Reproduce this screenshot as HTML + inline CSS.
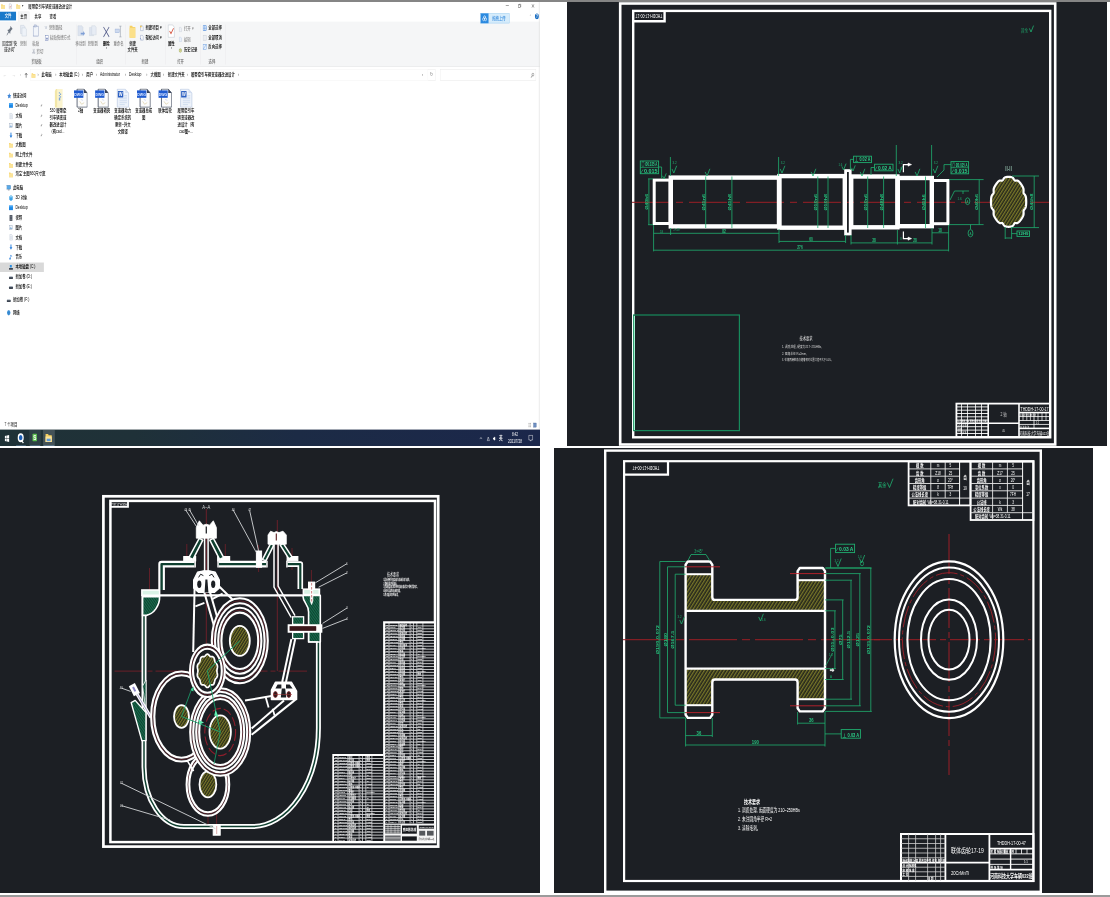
<!DOCTYPE html>
<html lang="zh"><head><meta charset="utf-8"><title>履带牵引车辆变速器改进设计</title>
<style>
html,body{margin:0;padding:0;background:#fff}
body{width:1110px;height:897px;position:relative;overflow:hidden}
#ex{position:absolute;left:0;top:0;width:540px;height:446px;overflow:hidden}
#exs{position:absolute;left:0;top:0.5px;width:1920px;height:1080px;transform-origin:0 0;transform:scale(0.28125,0.4125);font-family:"Liberation Sans","Noto Sans CJK SC",sans-serif}
#exs .t{position:absolute;white-space:nowrap;line-height:1;font-weight:500}
#exs .b{position:absolute}
#cad{position:absolute;left:0;top:0;will-change:transform}
#ex{will-change:transform}
.ln{position:absolute;left:0;width:1110px}
</style></head><body>
<div id="ex"><div id="exs"><div class="b" style="left:0.0px;top:0.0px;width:1920.0px;height:1080.0px;background:#ffffff;"></div>
<svg class="b" style="left:2.7px;top:4.6px" width="16" height="16" viewBox="0 0 16 16"><path d="M1 3h5l1.5 2H15v9H1z" fill="#f7d775"/><path d="M1 6h14v8H1z" fill="#fbe49a"/></svg>
<svg class="b" style="left:30.3px;top:4.6px" width="14" height="16" viewBox="0 0 16 16"><path d="M3 1h7l3 3v11H3z" fill="#fff" stroke="#8a98ad"/><path d="M5 9l2 2 4-5" stroke="#c0392b" fill="none" stroke-width="1.3"/></svg>
<svg class="b" style="left:57.1px;top:4.6px" width="16" height="16" viewBox="0 0 16 16"><path d="M1 3h5l1.5 2H15v9H1z" fill="#f7d775"/><path d="M1 6h14v8H1z" fill="#fbe49a"/></svg>
<div class="t" style="left:81.1px;top:12.6px;transform:translate(-50%,-50%);color:#333;font-size:9px;font-weight:500;">▾</div>
<div class="t" style="left:100.6px;top:11.6px;transform:translate(0,-50%);color:#111;font-size:12px;font-weight:500;">履带牵引车辆变速器改进设计</div>
<div class="t" style="left:1804.1px;top:10.1px;transform:translate(-50%,-50%);color:#000;font-size:11px;font-weight:500;">&#8212;</div>
<svg class="b" style="left:1841.5px;top:5.6px" width="12" height="12" viewBox="0 0 14 14"><rect x="2" y="4" width="8" height="8" fill="none" stroke="#222" stroke-width="1.2"/><path d="M4 4V2h8v8h-2" fill="none" stroke="#222" stroke-width="1.2"/></svg>
<svg class="b" style="left:1889.1px;top:5.6px" width="12" height="12" viewBox="0 0 14 14"><path d="M2 2l10 10M12 2L2 12" stroke="#222" stroke-width="1.3"/></svg>
<div class="b" style="left:0.0px;top:25.5px;width:56.5px;height:21.8px;background:#1979ca;"></div>
<div class="t" style="left:28.8px;top:35.1px;transform:translate(-50%,-50%);color:#fff;font-size:12px;font-weight:500;">文件</div>
<div class="b" style="left:65.1px;top:25.9px;width:39.1px;height:25.2px;background:#f5f6f7;border:1px solid #e4e5e6;border-bottom:none;box-sizing:border-box"></div>
<div class="t" style="left:84.3px;top:35.8px;transform:translate(-50%,-50%);color:#000;font-size:12px;font-weight:500;">主页</div>
<div class="t" style="left:135.1px;top:35.8px;transform:translate(-50%,-50%);color:#000;font-size:12px;font-weight:500;">共享</div>
<div class="t" style="left:188.4px;top:35.8px;transform:translate(-50%,-50%);color:#000;font-size:12px;font-weight:500;">查看</div>
<div class="b" style="left:0.0px;top:50.4px;width:1920.0px;height:108.4px;background:#f5f6f7;border-bottom:1px solid #dadbdc;box-sizing:border-box"></div>
<svg class="b" style="left:17.4px;top:55.5px" width="32" height="32" viewBox="0 0 32 32"><path d="M20 4l8 8-3 1-5 5-1 6-4-4-8 8 0-2 6-8-4-4 6-1 5-5z" fill="#6b7480"/></svg>
<div class="t" style="left:34.1px;top:101.5px;transform:translate(-50%,-50%);color:#3a3a3a;font-size:12px;font-weight:500;">固定到“快</div>
<div class="t" style="left:34.1px;top:117.5px;transform:translate(-50%,-50%);color:#3a3a3a;font-size:12px;font-weight:500;">速访问”</div>
<svg class="b" style="left:66.8px;top:55.5px" width="32" height="32" viewBox="0 0 32 32"><path d="M6 3h12l4 4v16H6z" fill="#e6ebf3" stroke="#b9c3d3"/><path d="M11 9h12l4 4v16H11z" fill="#eef2f8" stroke="#b9c3d3"/></svg>
<div class="t" style="left:82.8px;top:101.5px;transform:translate(-50%,-50%);color:#8c8c8c;font-size:12px;font-weight:500;">复制</div>
<svg class="b" style="left:110.9px;top:55.5px" width="32" height="32" viewBox="0 0 32 32"><rect x="7" y="5" width="18" height="24" fill="#f2f5fa" stroke="#8d9cc0" stroke-width="1.5"/><rect x="12" y="2" width="8" height="5" fill="#c9d2e3" stroke="#8d9cc0"/></svg>
<div class="t" style="left:126.9px;top:101.5px;transform:translate(-50%,-50%);color:#8c8c8c;font-size:12px;font-weight:500;">粘贴</div>
<div class="t" style="left:163.6px;top:65.2px;transform:translate(-50%,-50%);color:#a9b4c4;font-size:9px;font-weight:500;">W</div>
<div class="t" style="left:174.2px;top:65.2px;transform:translate(0,-50%);color:#8c8c8c;font-size:12px;font-weight:500;">复制路径</div>
<svg class="b" style="left:160.1px;top:81.2px" width="14" height="16" viewBox="0 0 16 16"><rect x="3" y="2" width="10" height="13" fill="#fff" stroke="#6c7fb5" stroke-width="1.4"/><rect x="5" y="8" width="6" height="5" fill="#6c7fb5"/></svg>
<div class="t" style="left:177.8px;top:87.7px;transform:translate(0,-50%);color:#8c8c8c;font-size:12px;font-weight:500;">粘贴快捷方式</div>
<svg class="b" style="left:112.5px;top:115.4px" width="14" height="14" viewBox="0 0 16 16"><path d="M5 1l3 9M11 1L8 10" stroke="#8a93a3" stroke-width="1.2"/><circle cx="5" cy="12" r="2" fill="none" stroke="#8a93a3" stroke-width="1.2"/><circle cx="11" cy="12" r="2" fill="none" stroke="#8a93a3" stroke-width="1.2"/></svg>
<div class="t" style="left:130.1px;top:120.9px;transform:translate(0,-50%);color:#8c8c8c;font-size:12px;font-weight:500;">剪切</div>
<div class="t" style="left:130.1px;top:146.1px;transform:translate(-50%,-50%);color:#6d6d6d;font-size:12px;font-weight:500;">剪贴板</div>
<div class="b" style="left:271.6px;top:57.0px;width:1.1px;height:97.0px;background:#e2e3e4;"></div>
<svg class="b" style="left:270.9px;top:56.9px" width="32" height="34" viewBox="0 0 32 34"><path d="M6 3h14l4 4v20H6z" fill="#dde4ef" stroke="#c3ccda"/><path d="M16 20h9v-4l6 6-6 6v-4h-9z" fill="#7f9fd6"/></svg>
<div class="t" style="left:286.9px;top:101.5px;transform:translate(-50%,-50%);color:#8c8c8c;font-size:12px;font-weight:500;">移动到</div>
<svg class="b" style="left:313.6px;top:56.9px" width="32" height="34" viewBox="0 0 32 34"><path d="M4 7h12l3 3v17H4z" fill="#dde4ef" stroke="#c3ccda"/><path d="M12 3h12l4 4v18H12z" fill="#e7ecf4" stroke="#c3ccda"/></svg>
<div class="t" style="left:329.6px;top:101.5px;transform:translate(-50%,-50%);color:#8c8c8c;font-size:12px;font-weight:500;">复制到</div>
<svg class="b" style="left:363.0px;top:58.7px" width="30" height="32" viewBox="0 0 30 32"><path d="M5 4l20 24M25 4L5 28" stroke="#565f8c" stroke-width="2.6" fill="none"/></svg>
<div class="t" style="left:378.0px;top:102.0px;transform:translate(-50%,-50%);color:#000;font-size:12px;font-weight:bold;">删除</div>
<div class="t" style="left:378.0px;top:114.6px;transform:translate(-50%,-50%);color:#444;font-size:8px;font-weight:500;">▾</div>
<svg class="b" style="left:406.3px;top:57.9px" width="30" height="32" viewBox="0 0 30 32"><rect x="3" y="10" width="16" height="9" fill="#cdd9ee" stroke="#8ea6d4"/><path d="M22 3v26M18 3h8M18 29h8" stroke="#8a93a3" stroke-width="1.5"/></svg>
<div class="t" style="left:421.3px;top:101.5px;transform:translate(-50%,-50%);color:#8c8c8c;font-size:12px;font-weight:500;">重命名</div>
<div class="t" style="left:354.1px;top:146.1px;transform:translate(-50%,-50%);color:#6d6d6d;font-size:12px;font-weight:500;">组织</div>
<div class="b" style="left:446.6px;top:57.0px;width:1.1px;height:97.0px;background:#e2e3e4;"></div>
<svg class="b" style="left:457.8px;top:56.9px" width="26" height="34" viewBox="0 0 26 34"><path d="M3 3h9l2 3h9v26H3z" fill="#f5cf60"/><path d="M3 8h20v24H3z" fill="#fbe08a"/></svg>
<div class="t" style="left:471.5px;top:101.5px;transform:translate(-50%,-50%);color:#000;font-size:12px;font-weight:500;">新建</div>
<div class="t" style="left:471.5px;top:118.0px;transform:translate(-50%,-50%);color:#000;font-size:12px;font-weight:500;">文件夹</div>
<svg class="b" style="left:496.2px;top:58.4px" width="16" height="16" viewBox="0 0 16 16"><path d="M4 2h6l3 3v9H4z" fill="#fff" stroke="#7d8db5" stroke-width="1.2"/><circle cx="5" cy="4" r="2.5" fill="#f0c23a"/></svg>
<div class="t" style="left:517.0px;top:64.9px;transform:translate(0,-50%);color:#000;font-size:12px;font-weight:500;">新建项目 ▾</div>
<svg class="b" style="left:496.2px;top:80.5px" width="16" height="16" viewBox="0 0 16 16"><path d="M4 2h6l3 3v9H4z" fill="#fff" stroke="#7d8db5" stroke-width="1.2"/><path d="M2 9l4 3" stroke="#3d5fb0" stroke-width="1.5"/></svg>
<div class="t" style="left:517.0px;top:87.0px;transform:translate(0,-50%);color:#000;font-size:12px;font-weight:500;">轻松访问 ▾</div>
<div class="t" style="left:515.2px;top:146.1px;transform:translate(-50%,-50%);color:#6d6d6d;font-size:12px;font-weight:500;">新建</div>
<div class="b" style="left:588.8px;top:57.0px;width:1.1px;height:97.0px;background:#e2e3e4;"></div>
<svg class="b" style="left:595.1px;top:56.0px" width="28" height="34" viewBox="0 0 28 34"><path d="M3 2h16l6 6v24H3z" fill="#fff" stroke="#b9c0cc" stroke-width="1.4"/><path d="M8 17l5 6 9-13" stroke="#d14a34" stroke-width="2.6" fill="none"/></svg>
<div class="t" style="left:609.1px;top:102.0px;transform:translate(-50%,-50%);color:#000;font-size:12px;font-weight:bold;">属性</div>
<div class="t" style="left:609.1px;top:114.6px;transform:translate(-50%,-50%);color:#444;font-size:8px;font-weight:500;">▾</div>
<svg class="b" style="left:635.1px;top:60.8px" width="14" height="16" viewBox="0 0 16 16"><path d="M3 2h6l3 3v9H3z" fill="#eef1f6" stroke="#b5bdcc"/></svg>
<div class="t" style="left:654.2px;top:67.3px;transform:translate(0,-50%);color:#8c8c8c;font-size:12px;font-weight:500;">打开 ▾</div>
<svg class="b" style="left:635.1px;top:85.1px" width="14" height="16" viewBox="0 0 16 16"><path d="M3 2h6l3 3v9H3z" fill="#eaf0fa" stroke="#a9bbdc"/></svg>
<div class="t" style="left:654.2px;top:91.6px;transform:translate(0,-50%);color:#8c8c8c;font-size:12px;font-weight:500;">编辑</div>
<svg class="b" style="left:635.1px;top:110.8px" width="14" height="16" viewBox="0 0 16 16"><circle cx="7" cy="9" r="5" fill="#f3e9a6" stroke="#6f8a3a" stroke-width="1.4"/><path d="M7 6v3l2 1" stroke="#44622a" fill="none"/></svg>
<div class="t" style="left:654.2px;top:117.3px;transform:translate(0,-50%);color:#000;font-size:12px;font-weight:500;">历史记录</div>
<div class="t" style="left:642.1px;top:146.1px;transform:translate(-50%,-50%);color:#6d6d6d;font-size:12px;font-weight:500;">打开</div>
<div class="b" style="left:711.8px;top:57.0px;width:1.1px;height:97.0px;background:#e2e3e4;"></div>
<svg class="b" style="left:719.5px;top:58.4px" width="16" height="16" viewBox="0 0 16 16"><rect x="2" y="2" width="12" height="12" fill="#dbe9fb" stroke="#3d7fd6" stroke-width="1.3"/><path d="M2 8h12M8 2v12" stroke="#3d7fd6"/></svg>
<div class="t" style="left:740.6px;top:64.9px;transform:translate(0,-50%);color:#000;font-size:12px;font-weight:500;">全部选择</div>
<svg class="b" style="left:719.5px;top:81.2px" width="16" height="16" viewBox="0 0 16 16"><rect x="2" y="2" width="12" height="12" fill="#eceef2" stroke="#c5cad3" stroke-width="1.3"/></svg>
<div class="t" style="left:740.6px;top:87.7px;transform:translate(0,-50%);color:#000;font-size:12px;font-weight:500;">全部取消</div>
<svg class="b" style="left:719.5px;top:102.8px" width="16" height="16" viewBox="0 0 16 16"><rect x="2" y="2" width="12" height="12" fill="#e6effb" stroke="#6f9fe0" stroke-width="1.3"/><path d="M2 14L14 2" stroke="#3d7fd6"/></svg>
<div class="t" style="left:740.6px;top:109.3px;transform:translate(0,-50%);color:#000;font-size:12px;font-weight:500;">反向选择</div>
<div class="t" style="left:753.4px;top:146.1px;transform:translate(-50%,-50%);color:#6d6d6d;font-size:12px;font-weight:500;">选择</div>
<div class="b" style="left:800.0px;top:57.0px;width:1.1px;height:97.0px;background:#e2e3e4;"></div>
<div class="b" style="left:1709.2px;top:30.3px;width:102.4px;height:24.2px;background:#d6ecfb;border:1px solid #8cc4ee;box-sizing:border-box"></div>
<div class="b" style="left:1709.2px;top:30.3px;width:28.1px;height:24.2px;background:#2b8ae0;"></div>
<svg class="b" style="left:1712.0px;top:33.4px" width="22" height="18" viewBox="0 0 16 16"><circle cx="5" cy="10" r="3.2" fill="none" stroke="#fff" stroke-width="1.6"/><circle cx="11" cy="10" r="3.2" fill="none" stroke="#fff" stroke-width="1.6"/><circle cx="8" cy="5.5" r="3" fill="none" stroke="#fff" stroke-width="1.6"/></svg>
<div class="t" style="left:1774.2px;top:40.9px;transform:translate(-50%,-50%);color:#3b8ede;font-size:12px;font-weight:500;">拖拽上传</div>
<div class="t" style="left:1886.2px;top:35.1px;transform:translate(-50%,-50%);color:#aaa;font-size:10px;font-weight:500;">^</div>
<svg class="b" style="left:1900.6px;top:29.3px" width="16" height="16" viewBox="0 0 16 16"><circle cx="8" cy="8" r="7" fill="#1c6fc2"/><text x="8" y="12" font-size="11" font-weight="bold" fill="#fff" text-anchor="middle" font-family="Liberation Sans,sans-serif">?</text></svg>
<div class="t" style="left:17.4px;top:178.1px;transform:translate(-50%,-50%);color:#c9c9c9;font-size:15px;font-weight:500;">←</div>
<div class="t" style="left:49.1px;top:178.1px;transform:translate(-50%,-50%);color:#c9c9c9;font-size:15px;font-weight:500;">→</div>
<div class="t" style="left:72.2px;top:178.6px;transform:translate(-50%,-50%);color:#bdbdbd;font-size:8px;font-weight:500;">▾</div>
<svg class="b" style="left:86.2px;top:171.6px" width="14" height="16" viewBox="0 0 14 16"><path d="M7 14V3M2.5 7.500L7 3l4.500 4.500" stroke="#555" stroke-width="1.8" fill="none"/></svg>
<div class="b" style="left:107.7px;top:166.1px;width:1414.0px;height:26.7px;background:#fff;border:1px solid #f0f0f0;box-sizing:border-box"></div>
<svg class="b" style="left:110.8px;top:171.6px" width="16" height="16" viewBox="0 0 16 16"><path d="M1 3h5l1.5 2H15v9H1z" fill="#f7d775"/><path d="M1 6h14v8H1z" fill="#fbe49a"/></svg>
<div class="t" style="left:147.9px;top:178.1px;transform:translate(0,-50%);color:#000;font-size:12px;font-weight:500;">此电脑</div>
<div class="t" style="left:210.8px;top:178.1px;transform:translate(0,-50%);color:#000;font-size:12px;font-weight:500;">本地磁盘 (C:)</div>
<div class="t" style="left:306.8px;top:178.1px;transform:translate(0,-50%);color:#000;font-size:12px;font-weight:500;">用户</div>
<div class="t" style="left:355.6px;top:178.1px;transform:translate(0,-50%);color:#000;font-size:12px;font-weight:500;">Administrator</div>
<div class="t" style="left:458.7px;top:178.1px;transform:translate(0,-50%);color:#000;font-size:12px;font-weight:500;">Desktop</div>
<div class="t" style="left:535.5px;top:178.1px;transform:translate(0,-50%);color:#000;font-size:12px;font-weight:500;">大截图</div>
<div class="t" style="left:596.6px;top:178.1px;transform:translate(0,-50%);color:#000;font-size:12px;font-weight:500;">新建文件夹</div>
<div class="t" style="left:679.1px;top:178.1px;transform:translate(0,-50%);color:#000;font-size:12px;font-weight:500;">履带牵引车辆变速器改进设计</div>
<div class="t" style="left:135.1px;top:178.1px;transform:translate(-50%,-50%);color:#666;font-size:12px;font-weight:500;">›</div>
<div class="t" style="left:198.4px;top:178.1px;transform:translate(-50%,-50%);color:#666;font-size:12px;font-weight:500;">›</div>
<div class="t" style="left:292.6px;top:178.1px;transform:translate(-50%,-50%);color:#666;font-size:12px;font-weight:500;">›</div>
<div class="t" style="left:342.4px;top:178.1px;transform:translate(-50%,-50%);color:#666;font-size:12px;font-weight:500;">›</div>
<div class="t" style="left:446.6px;top:178.1px;transform:translate(-50%,-50%);color:#666;font-size:12px;font-weight:500;">›</div>
<div class="t" style="left:522.0px;top:178.1px;transform:translate(-50%,-50%);color:#666;font-size:12px;font-weight:500;">›</div>
<div class="t" style="left:581.7px;top:178.1px;transform:translate(-50%,-50%);color:#666;font-size:12px;font-weight:500;">›</div>
<div class="t" style="left:665.6px;top:178.1px;transform:translate(-50%,-50%);color:#666;font-size:12px;font-weight:500;">›</div>
<div class="t" style="left:848.4px;top:178.1px;transform:translate(-50%,-50%);color:#666;font-size:12px;font-weight:500;">›</div>
<div class="t" style="left:1501.5px;top:178.6px;transform:translate(-50%,-50%);color:#777;font-size:8px;font-weight:500;">▾</div>
<div class="b" style="left:1521.8px;top:166.1px;width:26.7px;height:26.7px;background:#fff;border:1px solid #e3e3e3;border-left:none;box-sizing:border-box"></div>
<div class="t" style="left:1535.3px;top:178.1px;transform:translate(-50%,-50%);color:#666;font-size:13px;font-weight:500;">↻</div>
<div class="b" style="left:1565.5px;top:166.1px;width:340.3px;height:26.7px;background:#fff;border:1px solid #e3e3e3;box-sizing:border-box"></div>
<svg class="b" style="left:1885.6px;top:172.6px" width="14" height="14" viewBox="0 0 14 14"><circle cx="9" cy="5.5" r="3.5" fill="none" stroke="#555" stroke-width="1.3"/><path d="M6.5 8L2 13" stroke="#555" stroke-width="1.6"/></svg>
<svg class="b" style="left:25.4px;top:221.8px" width="16" height="16" viewBox="0 0 16 16"><path d="M8 1l2.2 4.6 5 .6-3.7 3.4 1 5L8 12.2 3.5 14.6l1-5L.8 6.2l5-.6z" fill="#3f86d8"/></svg>
<div class="t" style="left:46.2px;top:228.3px;transform:translate(0,-50%);color:#000;font-size:12px;font-weight:500;">快速访问</div>
<svg class="b" style="left:31.1px;top:246.3px" width="16" height="16" viewBox="0 0 16 16"><rect x="1" y="2" width="14" height="11" fill="#1e88e5"/><rect x="1" y="2" width="14" height="4" fill="#42a5f5"/></svg>
<div class="t" style="left:54.8px;top:252.8px;transform:translate(0,-50%);color:#000;font-size:12px;font-weight:500;">Desktop</div>
<svg class="b" style="left:141.8px;top:248.3px" width="10" height="12" viewBox="0 0 11 12"><path d="M7 1l3 3-1.5.5-2 2-.4 2.4-1.6-1.6L1 11l3-3.6-1.6-1.6 2.4-.4 2-2z" fill="#8a8a8a"/></svg>
<svg class="b" style="left:31.1px;top:270.8px" width="16" height="16" viewBox="0 0 16 16"><path d="M4 1h6l3 3v11H4z" fill="#f4f6f9" stroke="#a7b4c8"/><path d="M6 6h5M6 8.5h5M6 11h5" stroke="#9fb3d1" stroke-width=".8"/></svg>
<div class="t" style="left:54.8px;top:277.3px;transform:translate(0,-50%);color:#000;font-size:12px;font-weight:500;">文档</div>
<svg class="b" style="left:141.8px;top:272.8px" width="10" height="12" viewBox="0 0 11 12"><path d="M7 1l3 3-1.5.5-2 2-.4 2.4-1.6-1.6L1 11l3-3.6-1.6-1.6 2.4-.4 2-2z" fill="#8a8a8a"/></svg>
<svg class="b" style="left:31.1px;top:294.3px" width="16" height="16" viewBox="0 0 16 16"><rect x="1.5" y="3" width="13" height="10" fill="#eef3f8" stroke="#8d9db3"/><path d="M3 11l3-4 2.5 3 2-2 2.5 3z" fill="#6fa0cf"/></svg>
<div class="t" style="left:54.8px;top:300.8px;transform:translate(0,-50%);color:#000;font-size:12px;font-weight:500;">图片</div>
<svg class="b" style="left:141.8px;top:296.3px" width="10" height="12" viewBox="0 0 11 12"><path d="M7 1l3 3-1.5.5-2 2-.4 2.4-1.6-1.6L1 11l3-3.6-1.6-1.6 2.4-.4 2-2z" fill="#8a8a8a"/></svg>
<svg class="b" style="left:31.1px;top:318.1px" width="16" height="16" viewBox="0 0 16 16"><path d="M6.3 1h3.4v7H13l-5 6-5-6h3.3z" fill="#2a7fdb"/></svg>
<div class="t" style="left:54.8px;top:324.6px;transform:translate(0,-50%);color:#000;font-size:12px;font-weight:500;">下载</div>
<svg class="b" style="left:141.8px;top:320.1px" width="10" height="12" viewBox="0 0 11 12"><path d="M7 1l3 3-1.5.5-2 2-.4 2.4-1.6-1.6L1 11l3-3.6-1.6-1.6 2.4-.4 2-2z" fill="#8a8a8a"/></svg>
<svg class="b" style="left:31.1px;top:341.3px" width="16" height="16" viewBox="0 0 16 16"><path d="M1 3h5l1.5 2H15v9H1z" fill="#f7d775"/><path d="M1 6h14v8H1z" fill="#fbe49a"/></svg>
<div class="t" style="left:54.8px;top:347.8px;transform:translate(0,-50%);color:#000;font-size:12px;font-weight:500;">大截图</div>
<svg class="b" style="left:31.1px;top:365.1px" width="16" height="16" viewBox="0 0 16 16"><path d="M1 3h5l1.5 2H15v9H1z" fill="#f7d775"/><path d="M1 6h14v8H1z" fill="#fbe49a"/></svg>
<div class="t" style="left:54.8px;top:371.6px;transform:translate(0,-50%);color:#000;font-size:12px;font-weight:500;">网上传文件</div>
<svg class="b" style="left:31.1px;top:389.6px" width="16" height="16" viewBox="0 0 16 16"><path d="M1 3h5l1.5 2H15v9H1z" fill="#f7d775"/><path d="M1 6h14v8H1z" fill="#fbe49a"/></svg>
<div class="t" style="left:54.8px;top:396.1px;transform:translate(0,-50%);color:#000;font-size:12px;font-weight:500;">新建文件夹</div>
<svg class="b" style="left:31.1px;top:412.6px" width="16" height="16" viewBox="0 0 16 16"><path d="M1 3h5l1.5 2H15v9H1z" fill="#f7d775"/><path d="M1 6h14v8H1z" fill="#fbe49a"/></svg>
<div class="t" style="left:54.8px;top:419.1px;transform:translate(0,-50%);color:#000;font-size:12px;font-weight:500;">淘宝’主图660尺寸宽</div>
<svg class="b" style="left:22.6px;top:445.1px" width="16" height="16" viewBox="0 0 16 16"><rect x="1" y="2" width="14" height="9" fill="#59a9e8" stroke="#3d6fa3"/><rect x="5" y="12" width="6" height="2" fill="#7a8797"/></svg>
<div class="t" style="left:46.2px;top:451.6px;transform:translate(0,-50%);color:#000;font-size:12px;font-weight:500;">此电脑</div>
<svg class="b" style="left:31.1px;top:469.8px" width="16" height="16" viewBox="0 0 16 16"><path d="M8 1l6 3v8l-6 3-6-3V4z" fill="#3ea2e6"/><path d="M8 1l6 3-6 3-6-3z" fill="#8fd0f5"/></svg>
<div class="t" style="left:54.8px;top:476.3px;transform:translate(0,-50%);color:#000;font-size:12px;font-weight:500;">3D 对象</div>
<svg class="b" style="left:31.1px;top:493.8px" width="16" height="16" viewBox="0 0 16 16"><rect x="1" y="2" width="14" height="11" fill="#1e88e5"/><rect x="1" y="2" width="14" height="4" fill="#42a5f5"/></svg>
<div class="t" style="left:54.8px;top:500.3px;transform:translate(0,-50%);color:#000;font-size:12px;font-weight:500;">Desktop</div>
<svg class="b" style="left:31.1px;top:517.6px" width="16" height="16" viewBox="0 0 16 16"><rect x="3" y="1" width="10" height="14" fill="#3c4450"/><path d="M3 4h10M3 8h10M3 12h10" stroke="#c9d1db" stroke-width="1"/></svg>
<div class="t" style="left:54.8px;top:524.1px;transform:translate(0,-50%);color:#000;font-size:12px;font-weight:500;">视频</div>
<svg class="b" style="left:31.1px;top:541.1px" width="16" height="16" viewBox="0 0 16 16"><rect x="1.5" y="3" width="13" height="10" fill="#eef3f8" stroke="#8d9db3"/><path d="M3 11l3-4 2.5 3 2-2 2.5 3z" fill="#6fa0cf"/></svg>
<div class="t" style="left:54.8px;top:547.6px;transform:translate(0,-50%);color:#000;font-size:12px;font-weight:500;">图片</div>
<svg class="b" style="left:31.1px;top:565.3px" width="16" height="16" viewBox="0 0 16 16"><path d="M4 1h6l3 3v11H4z" fill="#f4f6f9" stroke="#a7b4c8"/><path d="M6 6h5M6 8.5h5M6 11h5" stroke="#9fb3d1" stroke-width=".8"/></svg>
<div class="t" style="left:54.8px;top:571.8px;transform:translate(0,-50%);color:#000;font-size:12px;font-weight:500;">文档</div>
<svg class="b" style="left:31.1px;top:589.3px" width="16" height="16" viewBox="0 0 16 16"><path d="M6.3 1h3.4v7H13l-5 6-5-6h3.3z" fill="#2a7fdb"/></svg>
<div class="t" style="left:54.8px;top:595.8px;transform:translate(0,-50%);color:#000;font-size:12px;font-weight:500;">下载</div>
<svg class="b" style="left:31.1px;top:612.8px" width="16" height="16" viewBox="0 0 16 16"><path d="M6 2l6 3v2L7.3 5v6.5a2.6 2.6 0 1 1-1.3-2.2z" fill="#2a7fdb"/></svg>
<div class="t" style="left:54.8px;top:619.3px;transform:translate(0,-50%);color:#000;font-size:12px;font-weight:500;">音乐</div>
<div class="b" style="left:0.0px;top:634.4px;width:155.7px;height:22.8px;background:#d9d9d9;"></div>
<svg class="b" style="left:31.1px;top:637.6px" width="16" height="16" viewBox="0 0 16 16"><rect x="1" y="9" width="14" height="4.5" rx="1" fill="#3b4350"/><rect x="4" y="2" width="7" height="6" fill="#2a8de0"/></svg>
<div class="t" style="left:54.8px;top:644.1px;transform:translate(0,-50%);color:#000;font-size:12px;font-weight:500;">本地磁盘 (C:)</div>
<svg class="b" style="left:31.1px;top:661.3px" width="16" height="16" viewBox="0 0 16 16"><rect x="1" y="8" width="14" height="5" rx="1" fill="#3b4350"/><rect x="2" y="6.5" width="12" height="2" fill="#9aa5b3"/></svg>
<div class="t" style="left:54.8px;top:667.8px;transform:translate(0,-50%);color:#000;font-size:12px;font-weight:500;">新加卷 (D:)</div>
<svg class="b" style="left:31.1px;top:685.3px" width="16" height="16" viewBox="0 0 16 16"><rect x="1" y="8" width="14" height="5" rx="1" fill="#3b4350"/><rect x="2" y="6.5" width="12" height="2" fill="#9aa5b3"/></svg>
<div class="t" style="left:54.8px;top:691.8px;transform:translate(0,-50%);color:#000;font-size:12px;font-weight:500;">新加卷 (E:)</div>
<svg class="b" style="left:22.6px;top:716.8px" width="16" height="16" viewBox="0 0 16 16"><rect x="1" y="8" width="14" height="5" rx="1" fill="#3b4350"/><rect x="2" y="6.5" width="12" height="2" fill="#9aa5b3"/></svg>
<div class="t" style="left:46.2px;top:723.3px;transform:translate(0,-50%);color:#000;font-size:12px;font-weight:500;">新加卷 (F:)</div>
<svg class="b" style="left:22.6px;top:748.4px" width="16" height="16" viewBox="0 0 16 16"><circle cx="8" cy="8" r="6" fill="#4aa3e8"/><path d="M2 8h12M8 2c-3 3-3 9 0 12M8 2c3 3 3 9 0 12" stroke="#1d5fa8" fill="none" stroke-width=".9"/></svg>
<div class="t" style="left:46.2px;top:754.9px;transform:translate(0,-50%);color:#000;font-size:12px;font-weight:500;">网络</div>
<svg preserveAspectRatio="none" class="b" style="left:185.2px;top:212.1px" width="48.4" height="47" viewBox="0 0 48 60"><path d="M14 2h22v58H10V8z" fill="#f3e7a8"/><path d="M18 2h18v58H18z" fill="#fbf4cf"/><path d="M24 12h4v4h-4zM28 16h4v4h-4zM24 20h4v4h-4zM28 24h4v4h-4zM24 28h5v9h-5z" fill="#7fa7d9"/></svg>
<div class="t" style="left:206.2px;top:266.4px;transform:translate(-50%,-50%);color:#000;font-size:12px;font-weight:500;">530 履带牵</div>
<div class="t" style="left:206.2px;top:282.9px;transform:translate(-50%,-50%);color:#000;font-size:12px;font-weight:500;">引车辆变速</div>
<div class="t" style="left:206.2px;top:299.3px;transform:translate(-50%,-50%);color:#000;font-size:12px;font-weight:500;">器改进设计</div>
<div class="t" style="left:206.2px;top:315.8px;transform:translate(-50%,-50%);color:#000;font-size:12px;font-weight:500;">(有cad...</div>
<svg preserveAspectRatio="none" class="b" style="left:262.7px;top:212.1px" width="48.4" height="47" viewBox="0 0 48 60"><path d="M11 2h24l12 12v44H11z" fill="#fcfcfc" stroke="#2f3a4f" stroke-width="2.4"/><path d="M35 2v12h12z" fill="#39445c"/><rect x="0" y="6" width="33" height="23" fill="#1f5bd0"/><text x="16.500" y="22.500" font-size="12.500" font-weight="bold" fill="#dfe9ff" text-anchor="middle" font-family="Liberation Sans,sans-serif">DWG</text><path d="M20 40l7 9 9-5" stroke="#d8c89a" fill="none" stroke-width="2"/><path d="M24 34l8 3" stroke="#b9c6e8" stroke-width="2"/></svg>
<div class="t" style="left:286.6px;top:266.4px;transform:translate(-50%,-50%);color:#000;font-size:12px;font-weight:500;">2轴</div>
<svg preserveAspectRatio="none" class="b" style="left:337.8px;top:212.1px" width="48.4" height="47" viewBox="0 0 48 60"><path d="M11 2h24l12 12v44H11z" fill="#fcfcfc" stroke="#2f3a4f" stroke-width="2.4"/><path d="M35 2v12h12z" fill="#39445c"/><rect x="0" y="6" width="33" height="23" fill="#1f5bd0"/><text x="16.500" y="22.500" font-size="12.500" font-weight="bold" fill="#dfe9ff" text-anchor="middle" font-family="Liberation Sans,sans-serif">DWG</text><path d="M20 40l7 9 9-5" stroke="#d8c89a" fill="none" stroke-width="2"/><path d="M24 34l8 3" stroke="#b9c6e8" stroke-width="2"/></svg>
<div class="t" style="left:361.6px;top:266.4px;transform:translate(-50%,-50%);color:#000;font-size:12px;font-weight:500;">变速器箱壳</div>
<svg preserveAspectRatio="none" class="b" style="left:412.8px;top:212.1px" width="48.4" height="47" viewBox="0 0 48 60"><path d="M4 2h28l12 12v44H4z" fill="#eef3fb" stroke="#b3c4e0" stroke-width="2"/><path d="M32 2v12h12z" fill="#d5e0f2"/><path d="M12 32h26M12 38h26M12 44h26M12 50h18M28 22h10M28 27h10" stroke="#bccfe9" stroke-width="2"/><rect x="6" y="8" width="19" height="20" fill="#2b5fc1"/><text x="15.500" y="23" font-size="14" font-weight="bold" fill="#fff" text-anchor="middle" font-family="Liberation Sans,sans-serif">W</text></svg>
<div class="t" style="left:436.6px;top:266.4px;transform:translate(-50%,-50%);color:#000;font-size:12px;font-weight:500;">变速器动力</div>
<div class="t" style="left:436.6px;top:282.9px;transform:translate(-50%,-50%);color:#000;font-size:12px;font-weight:500;">确定系统的</div>
<div class="t" style="left:436.6px;top:299.3px;transform:translate(-50%,-50%);color:#000;font-size:12px;font-weight:500;">更新--外文</div>
<div class="t" style="left:436.6px;top:315.8px;transform:translate(-50%,-50%);color:#000;font-size:12px;font-weight:500;">文翻译</div>
<svg preserveAspectRatio="none" class="b" style="left:487.4px;top:212.1px" width="48.4" height="47" viewBox="0 0 48 60"><path d="M11 2h24l12 12v44H11z" fill="#fcfcfc" stroke="#2f3a4f" stroke-width="2.4"/><path d="M35 2v12h12z" fill="#39445c"/><rect x="0" y="6" width="33" height="23" fill="#1f5bd0"/><text x="16.500" y="22.500" font-size="12.500" font-weight="bold" fill="#dfe9ff" text-anchor="middle" font-family="Liberation Sans,sans-serif">DWG</text><path d="M20 40l7 9 9-5" stroke="#d8c89a" fill="none" stroke-width="2"/><path d="M24 34l8 3" stroke="#b9c6e8" stroke-width="2"/></svg>
<div class="t" style="left:511.3px;top:266.4px;transform:translate(-50%,-50%);color:#000;font-size:12px;font-weight:500;">变速器总成</div>
<div class="t" style="left:511.3px;top:282.9px;transform:translate(-50%,-50%);color:#000;font-size:12px;font-weight:500;">图</div>
<svg preserveAspectRatio="none" class="b" style="left:562.8px;top:212.1px" width="48.4" height="47" viewBox="0 0 48 60"><path d="M11 2h24l12 12v44H11z" fill="#fcfcfc" stroke="#2f3a4f" stroke-width="2.4"/><path d="M35 2v12h12z" fill="#39445c"/><rect x="0" y="6" width="33" height="23" fill="#1f5bd0"/><text x="16.500" y="22.500" font-size="12.500" font-weight="bold" fill="#dfe9ff" text-anchor="middle" font-family="Liberation Sans,sans-serif">DWG</text><path d="M20 40l7 9 9-5" stroke="#d8c89a" fill="none" stroke-width="2"/><path d="M24 34l8 3" stroke="#b9c6e8" stroke-width="2"/></svg>
<div class="t" style="left:586.7px;top:266.4px;transform:translate(-50%,-50%);color:#000;font-size:12px;font-weight:500;">联体齿轮</div>
<svg preserveAspectRatio="none" class="b" style="left:637.5px;top:212.1px" width="48.4" height="47" viewBox="0 0 48 60"><path d="M4 2h28l12 12v44H4z" fill="#eef3fb" stroke="#b3c4e0" stroke-width="2"/><path d="M32 2v12h12z" fill="#d5e0f2"/><path d="M12 32h26M12 38h26M12 44h26M12 50h18M28 22h10M28 27h10" stroke="#bccfe9" stroke-width="2"/><rect x="6" y="8" width="19" height="20" fill="#2b5fc1"/><text x="15.500" y="23" font-size="14" font-weight="bold" fill="#fff" text-anchor="middle" font-family="Liberation Sans,sans-serif">W</text></svg>
<div class="t" style="left:661.3px;top:266.4px;transform:translate(-50%,-50%);color:#000;font-size:12px;font-weight:500;">履带牵引车</div>
<div class="t" style="left:661.3px;top:282.9px;transform:translate(-50%,-50%);color:#000;font-size:12px;font-weight:500;">辆变速器改</div>
<div class="t" style="left:661.3px;top:299.3px;transform:translate(-50%,-50%);color:#000;font-size:12px;font-weight:500;">进设计（有</div>
<div class="t" style="left:661.3px;top:315.8px;transform:translate(-50%,-50%);color:#000;font-size:12px;font-weight:500;">cad图+...</div>
<div class="b" style="left:1916.4px;top:0.0px;width:1.8px;height:1039.3px;background:#dadada;"></div>
<div class="t" style="left:15.6px;top:1026.4px;transform:translate(0,-50%);color:#333;font-size:12px;font-weight:500;">7 个项目</div>
<svg class="b" style="left:1876.0px;top:1020.9px" width="14" height="14" viewBox="0 0 14 14"><path d="M2 3h2M6 3h6M2 7h2M6 7h6M2 11h2M6 11h6" stroke="#666" stroke-width="1.4"/></svg>
<svg class="b" style="left:1895.2px;top:1020.9px" width="14" height="14" viewBox="0 0 14 14"><rect x="2" y="2" width="10" height="10" fill="#6f8fc0" stroke="#3f5f97"/></svg>
<div class="b" style="left:0.0px;top:1039.3px;width:1920.0px;height:40.7px;background:linear-gradient(90deg,#1f3237 0%,#1f3138 25%,#1c2b45 55%,#1b274b 100%);"></div>
<svg class="b" style="left:15.9px;top:1051.1px" width="18" height="18" viewBox="0 0 16 16"><path d="M1 3l6-1v6H1zM8 2l7-1v7H8zM1 9h6v6l-6-1zM8 9h7v7l-7-1z" fill="#fff"/></svg>
<svg class="b" style="left:61.2px;top:1046.6px" width="27" height="27" viewBox="0 0 30 30"><circle cx="14" cy="13" r="12" fill="#fff"/><circle cx="14" cy="13" r="7" fill="#1d5fb4"/><path d="M17 17l10 10-6 1z" fill="#fff"/></svg>
<div class="b" style="left:103.8px;top:1040.0px;width:41.2px;height:40.0px;background:rgba(255,255,255,.07);"></div>
<svg class="b" style="left:113.2px;top:1046.7px" width="21" height="23" viewBox="0 0 24 26"><rect x="3" y="2" width="18" height="21" rx="2" fill="#5cc04f"/><text x="12" y="20" font-size="19" font-weight="bold" fill="#fff" text-anchor="middle" font-family="Liberation Sans,sans-serif">S</text></svg>
<div class="b" style="left:152.5px;top:1040.0px;width:42.7px;height:40.0px;background:rgba(255,255,255,.16);"></div>
<svg class="b" style="left:159.8px;top:1046.7px" width="26" height="24" viewBox="0 0 26 24"><path d="M2 3h9l2 3h11v16H2z" fill="#f5cf60"/><path d="M2 9h22v13H2z" fill="#fbe59a"/><rect x="6" y="14" width="14" height="6" fill="#5d97d8"/></svg>
<div class="b" style="left:106.7px;top:1078.1px;width:35.6px;height:1.9px;background:#86b7ea;"></div>
<div class="b" style="left:154.7px;top:1078.1px;width:38.8px;height:1.9px;background:#86b7ea;"></div>
<div class="b" style="left:56.9px;top:1078.1px;width:35.6px;height:1.9px;background:#86b7ea;"></div>
<svg class="b" style="left:1704.2px;top:1054.1px" width="12" height="12" viewBox="0 0 12 12"><path d="M2 8l4-4 4 4" stroke="#fff" stroke-width="1.3" fill="none"/></svg>
<svg class="b" style="left:1729.9px;top:1053.6px" width="14" height="14" viewBox="0 0 14 14"><path d="M2 12l4-9 4 9z" fill="none" stroke="#fff" stroke-width="1.3"/></svg>
<svg class="b" style="left:1751.2px;top:1053.6px" width="14" height="14" viewBox="0 0 14 14"><path d="M2 5h3l4-3v10l-4-3H2z" fill="#fff"/><path d="M11 4c1.500 2 1.500 4 0 6" stroke="#fff" fill="none"/></svg>
<div class="t" style="left:1780.6px;top:1058.6px;transform:translate(-50%,-50%);color:#fff;font-size:13px;font-weight:500;">英</div>
<div class="t" style="left:1831.1px;top:1049.9px;transform:translate(-50%,-50%);color:#fff;font-size:11px;font-weight:500;">8:42</div>
<div class="t" style="left:1831.1px;top:1067.8px;transform:translate(-50%,-50%);color:#fff;font-size:11px;font-weight:500;">2021/7/28</div>
<svg class="b" style="left:1878.3px;top:1051.1px" width="18" height="18" viewBox="0 0 18 18"><path d="M2 2h14v11h-5l-2 3-2-3H2z" fill="none" stroke="#fff" stroke-width="1.4"/></svg></div></div>
<svg id="cad" width="1110" height="897" viewBox="0 0 1110 897" font-family='"Liberation Sans","Noto Sans CJK SC",sans-serif'><rect x="567.00" y="2.00" width="540.00" height="444.00" fill="#1c1f24" stroke="none" stroke-width="0" />
<rect x="620.20" y="3.50" width="435.00" height="441.00" fill="none" stroke="#ffffff" stroke-width="2.6" />
<rect x="633.20" y="10.90" width="417.00" height="426.40" fill="none" stroke="#ffffff" stroke-width="2.4" />
<path d="M633 21.3H664.6V11" fill="none" stroke="#ffffff" stroke-width="2.4" />
<text transform="translate(649,14.2) scale(-1,-1.45)" font-size="3.4" fill="#ffffff" text-anchor="middle" >THDDH-17-00-17</text>
<line x1="632.00" y1="202.30" x2="1049.00" y2="202.30" stroke="#9c1f26" stroke-width="1" stroke-dasharray="38 6 7 6"/>
<rect x="654.20" y="180.10" width="15.90" height="43.40" fill="none" stroke="#ffffff" stroke-width="3.0" />
<rect x="670.80" y="177.60" width="108.20" height="48.80" fill="none" stroke="#ffffff" stroke-width="4.4" />
<rect x="779.40" y="176.10" width="65.40" height="51.60" fill="none" stroke="#ffffff" stroke-width="4.4" />
<rect x="845.60" y="170.60" width="4.60" height="63.40" fill="none" stroke="#ffffff" stroke-width="2.8" />
<rect x="851.20" y="176.50" width="46.20" height="50.80" fill="none" stroke="#ffffff" stroke-width="4.4" />
<rect x="897.80" y="178.00" width="34.00" height="48.20" fill="none" stroke="#ffffff" stroke-width="4.4" />
<rect x="931.90" y="180.50" width="16.00" height="43.20" fill="none" stroke="#ffffff" stroke-width="3.0" />
<rect x="640.30" y="161.00" width="18.30" height="12.70" fill="none" stroke="#1fb070" stroke-width="0.9" />
<text transform="translate(649.45,166.21) scale(1,1.45)" font-size="3.6" fill="#2bd08a" text-anchor="middle" font-weight="bold" textLength="15.9" lengthAdjust="spacingAndGlyphs">◎ Ø0.025 A</text>
<line x1="640.30" y1="167.35" x2="658.60" y2="167.35" stroke="#1fb070" stroke-width="0.7" />
<text transform="translate(649.45,172.56) scale(1,1.45)" font-size="3.6" fill="#2bd08a" text-anchor="middle" font-weight="bold" textLength="15.9" lengthAdjust="spacingAndGlyphs">∕ 0.015</text>
<path d="M658.6 167H661.6V178.4" fill="none" stroke="#1fb070" stroke-width="0.8" />
<line x1="648.00" y1="178.90" x2="653.00" y2="178.90" stroke="#1fb070" stroke-width="0.8" />
<line x1="648.00" y1="224.70" x2="653.00" y2="224.70" stroke="#1fb070" stroke-width="0.8" />
<line x1="648.90" y1="178.90" x2="648.90" y2="224.70" stroke="#1fb070" stroke-width="0.8" />
<text transform="translate(647.90,201.80) rotate(-90) scale(1.45,1)" font-size="3.7" fill="#25c07c" font-weight="bold" text-anchor="middle">Ø40k6</text>
<line x1="705.70" y1="176.50" x2="705.70" y2="228.00" stroke="#1fb070" stroke-width="0.8" />
<text transform="translate(704.70,202.25) rotate(-90) scale(1.45,1)" font-size="3.7" fill="#25c07c" font-weight="bold" text-anchor="middle">Ø45n6</text>
<line x1="731.90" y1="176.50" x2="731.90" y2="228.00" stroke="#1fb070" stroke-width="0.8" />
<text transform="translate(730.90,202.25) rotate(-90) scale(1.45,1)" font-size="3.7" fill="#25c07c" font-weight="bold" text-anchor="middle">Ø45h8</text>
<line x1="817.80" y1="176.50" x2="817.80" y2="228.00" stroke="#1fb070" stroke-width="0.8" />
<text transform="translate(816.80,202.25) rotate(-90) scale(1.45,1)" font-size="3.7" fill="#25c07c" font-weight="bold" text-anchor="middle">Ø50n6</text>
<line x1="828.00" y1="176.50" x2="828.00" y2="228.00" stroke="#1fb070" stroke-width="0.8" />
<text transform="translate(827.00,202.25) rotate(-90) scale(1.45,1)" font-size="3.7" fill="#25c07c" font-weight="bold" text-anchor="middle">Ø50h8</text>
<line x1="867.70" y1="176.50" x2="867.70" y2="228.00" stroke="#1fb070" stroke-width="0.8" />
<text transform="translate(866.70,202.25) rotate(-90) scale(1.45,1)" font-size="3.7" fill="#25c07c" font-weight="bold" text-anchor="middle">Ø50n6</text>
<line x1="883.60" y1="176.50" x2="883.60" y2="228.00" stroke="#1fb070" stroke-width="0.8" />
<text transform="translate(882.60,202.25) rotate(-90) scale(1.45,1)" font-size="3.7" fill="#25c07c" font-weight="bold" text-anchor="middle">Ø48h8</text>
<line x1="925.50" y1="176.50" x2="925.50" y2="228.00" stroke="#1fb070" stroke-width="0.8" />
<text transform="translate(924.50,202.25) rotate(-90) scale(1.45,1)" font-size="3.7" fill="#25c07c" font-weight="bold" text-anchor="middle">Ø45k6</text>
<line x1="670.40" y1="157.00" x2="670.40" y2="176.00" stroke="#1fb070" stroke-width="0.8" />
<path d="M672.00 168.95L673.80 173.00L676.68 165.80" fill="none" stroke="#1fb070" stroke-width="0.8" />
<text transform="translate(672.60,164.00) scale(1,1.4)" font-size="3" fill="#1fb070" text-anchor="start" >3.2</text>
<line x1="778.60" y1="157.00" x2="778.60" y2="176.00" stroke="#1fb070" stroke-width="0.8" />
<path d="M780.20 168.95L782.00 173.00L784.88 165.80" fill="none" stroke="#1fb070" stroke-width="0.8" />
<text transform="translate(780.80,164.00) scale(1,1.4)" font-size="3" fill="#1fb070" text-anchor="start" >3.2</text>
<line x1="896.30" y1="145.00" x2="896.30" y2="176.00" stroke="#1fb070" stroke-width="0.8" />
<path d="M897.90 168.95L899.70 173.00L902.58 165.80" fill="none" stroke="#1fb070" stroke-width="0.8" />
<text transform="translate(898.50,164.00) scale(1,1.4)" font-size="3" fill="#1fb070" text-anchor="start" >3.2</text>
<line x1="931.60" y1="145.00" x2="931.60" y2="176.00" stroke="#1fb070" stroke-width="0.8" />
<path d="M933.20 168.95L935.00 173.00L937.88 165.80" fill="none" stroke="#1fb070" stroke-width="0.8" />
<text transform="translate(933.80,164.00) scale(1,1.4)" font-size="3" fill="#1fb070" text-anchor="start" >3.2</text>
<path d="M705.20 171.95L707.00 176.00L709.88 168.80" fill="none" stroke="#1fb070" stroke-width="0.8" />
<path d="M811.20 171.95L813.00 176.00L815.88 168.80" fill="none" stroke="#1fb070" stroke-width="0.8" />
<path d="M860.20 171.95L862.00 176.00L864.88 168.80" fill="none" stroke="#1fb070" stroke-width="0.8" />
<path d="M915.20 171.95L917.00 176.00L919.88 168.80" fill="none" stroke="#1fb070" stroke-width="0.8" />
<path d="M662.60 175.85L664.00 179.00L666.24 173.40" fill="none" stroke="#1fb070" stroke-width="0.8" />
<line x1="653.60" y1="225.00" x2="653.60" y2="251.40" stroke="#1fb070" stroke-width="0.8" />
<line x1="670.60" y1="228.00" x2="670.60" y2="235.00" stroke="#1fb070" stroke-width="0.8" />
<line x1="779.00" y1="229.00" x2="779.00" y2="243.00" stroke="#1fb070" stroke-width="0.8" />
<line x1="845.60" y1="235.00" x2="845.60" y2="243.00" stroke="#1fb070" stroke-width="0.8" />
<line x1="851.00" y1="235.00" x2="851.00" y2="244.50" stroke="#1fb070" stroke-width="0.8" />
<line x1="897.40" y1="230.00" x2="897.40" y2="244.50" stroke="#1fb070" stroke-width="0.8" />
<line x1="932.00" y1="228.00" x2="932.00" y2="244.50" stroke="#1fb070" stroke-width="0.8" />
<line x1="948.60" y1="225.00" x2="948.60" y2="251.40" stroke="#1fb070" stroke-width="0.8" />
<line x1="653.60" y1="233.30" x2="779.00" y2="233.30" stroke="#1fb070" stroke-width="0.8" />
<text transform="translate(724.00,232.50) scale(1,1.45)" font-size="3.2" fill="#25c07c" text-anchor="middle" font-weight="bold">82</text>
<text transform="translate(661.60,232.60) scale(1,1.45)" font-size="3" fill="#1fb070" text-anchor="middle" >18</text>
<text transform="translate(673.50,230.80) scale(1,1.45)" font-size="2.6" fill="#1fb070" text-anchor="start" >2×45°</text>
<line x1="779.00" y1="241.40" x2="845.60" y2="241.40" stroke="#1fb070" stroke-width="0.8" />
<text transform="translate(811.00,240.60) scale(1,1.45)" font-size="3.2" fill="#25c07c" text-anchor="middle" font-weight="bold">60</text>
<line x1="851.00" y1="242.90" x2="897.40" y2="242.90" stroke="#1fb070" stroke-width="0.8" />
<text transform="translate(874.00,242.10) scale(1,1.45)" font-size="3.2" fill="#25c07c" text-anchor="middle" font-weight="bold">38</text>
<line x1="897.40" y1="242.90" x2="932.00" y2="242.90" stroke="#1fb070" stroke-width="0.8" />
<text transform="translate(915.00,242.10) scale(1,1.45)" font-size="3.2" fill="#25c07c" text-anchor="middle" font-weight="bold">28</text>
<line x1="932.00" y1="232.80" x2="948.60" y2="232.80" stroke="#1fb070" stroke-width="0.8" />
<text transform="translate(940.00,232.00) scale(1,1.45)" font-size="3.2" fill="#25c07c" text-anchor="middle" font-weight="bold">18</text>
<line x1="653.60" y1="250.20" x2="948.60" y2="250.20" stroke="#1fb070" stroke-width="0.8" />
<text transform="translate(800.00,249.40) scale(1,1.45)" font-size="3.2" fill="#25c07c" text-anchor="middle" font-weight="bold">276</text>
<rect x="853.60" y="156.20" width="17.90" height="6.40" fill="none" stroke="#1fb070" stroke-width="0.9" />
<text transform="translate(862.55,161.45) scale(1,1.45)" font-size="3.6" fill="#2bd08a" text-anchor="middle" font-weight="bold" textLength="15.5" lengthAdjust="spacingAndGlyphs">⊥ 0.02 A</text>
<path d="M853.6 159.4H850.4V170" fill="none" stroke="#1fb070" stroke-width="0.8" />
<rect x="874.60" y="164.20" width="18.40" height="6.60" fill="none" stroke="#1fb070" stroke-width="0.9" />
<text transform="translate(883.80,169.61) scale(1,1.45)" font-size="3.6" fill="#2bd08a" text-anchor="middle" font-weight="bold" textLength="16.0" lengthAdjust="spacingAndGlyphs">∕ 0.02 A</text>
<path d="M874.6 167.5H871V175" fill="none" stroke="#1fb070" stroke-width="0.8" />
<path d="M841.90 166.40L843.50 170.00L846.06 163.60" fill="none" stroke="#1fb070" stroke-width="0.8" />
<path d="M851.60 167.85L853.00 171.00L855.24 165.40" fill="none" stroke="#1fb070" stroke-width="0.8" />
<text transform="translate(838.50,166.00) scale(1,1.45)" font-size="2.8" fill="#1fb070" text-anchor="start" >1.6</text>
<rect x="951.00" y="161.60" width="17.60" height="12.20" fill="none" stroke="#1fb070" stroke-width="0.9" />
<text transform="translate(959.80,166.60) scale(1,1.45)" font-size="3.6" fill="#2bd08a" text-anchor="middle" font-weight="bold" textLength="15.2" lengthAdjust="spacingAndGlyphs">◎ Ø0.025 A</text>
<line x1="951.00" y1="167.70" x2="968.60" y2="167.70" stroke="#1fb070" stroke-width="0.7" />
<text transform="translate(959.80,172.70) scale(1,1.45)" font-size="3.6" fill="#2bd08a" text-anchor="middle" font-weight="bold" textLength="15.2" lengthAdjust="spacingAndGlyphs">∕ 0.015</text>
<path d="M951 164.6H944V170L937 177" fill="none" stroke="#1fb070" stroke-width="0.8" />
<path d="M903.4 172.2V164.6H909" fill="none" stroke="#ffffff" stroke-width="1.2" />
<path d="M908 163L911.6 164.6L908 166.2z" fill="#ffffff" stroke="#ffffff" stroke-width="0.5" />
<path d="M903.4 231.6V238.6H909" fill="none" stroke="#ffffff" stroke-width="1.2" />
<path d="M908 237L911.6 238.6L908 240.2z" fill="#ffffff" stroke="#ffffff" stroke-width="0.5" />
<text transform="translate(900.20,170.00) scale(1,1.45)" font-size="3" fill="#1fb070" text-anchor="start" >II</text>
<text transform="translate(900.20,240.00) scale(1,1.45)" font-size="3" fill="#1fb070" text-anchor="start" >II</text>
<line x1="949.00" y1="179.60" x2="983.60" y2="179.60" stroke="#1fb070" stroke-width="0.8" />
<line x1="949.00" y1="224.60" x2="983.60" y2="224.60" stroke="#1fb070" stroke-width="0.8" />
<line x1="979.20" y1="179.60" x2="979.20" y2="224.60" stroke="#1fb070" stroke-width="0.8" />
<text transform="translate(978.20,202.10) rotate(-90) scale(1.45,1)" font-size="3.7" fill="#25c07c" font-weight="bold" text-anchor="middle">Ø40k6</text>
<path d="M950 200L954.5 191H969" fill="none" stroke="#1fb070" stroke-width="0.8" />
<text transform="translate(957.50,200.00) scale(1,1.45)" font-size="3" fill="#1fb070" text-anchor="start" >1.6</text>
<line x1="963.00" y1="191.00" x2="963.00" y2="194.00" stroke="#1fb070" stroke-width="0.8" />
<ellipse cx="967.60" cy="201.20" rx="2.20" ry="3.40" fill="none" stroke="#1fb070" stroke-width="0.8" />
<text transform="translate(967.60,203.00) scale(1,1.45)" font-size="3" fill="#1fb070" text-anchor="middle" >A</text>
<line x1="970.50" y1="224.60" x2="970.50" y2="229.00" stroke="#1fb070" stroke-width="0.8" />
<ellipse cx="970.50" cy="233.20" rx="2.40" ry="3.60" fill="none" stroke="#1fb070" stroke-width="0.8" />
<text transform="translate(970.50,235.00) scale(1,1.45)" font-size="3" fill="#1fb070" text-anchor="middle" >A</text>
<defs><pattern id="hy" width="2.7" height="2.7" patternUnits="userSpaceOnUse" patternTransform="rotate(32)"><rect width="2.7" height="2.7" fill="#26281b"/><line x1="0.7" y1="0" x2="0.7" y2="2.7" stroke="#918e2d" stroke-width="1.0"/></pattern><pattern id="hg" width="2.2" height="2.2" patternUnits="userSpaceOnUse" patternTransform="rotate(32)"><rect width="2.2" height="2.2" fill="#124a37"/><line x1="0" y1="0" x2="0" y2="2.2" stroke="#1f9a68" stroke-width="1"/></pattern></defs>
<path d="M1008.60 176.80L1008.91 176.80L1009.21 176.82L1009.52 176.83L1009.83 176.86L1010.13 176.90L1010.44 176.94L1010.74 176.99L1011.05 177.05L1011.35 177.12L1011.65 177.20L1011.95 177.31L1012.25 177.44L1012.53 177.61L1012.81 177.82L1013.07 178.08L1013.33 178.39L1013.56 178.73L1013.79 179.10L1014.01 179.47L1014.23 179.82L1014.46 180.12L1014.70 180.35L1014.96 180.50L1015.25 180.58L1015.56 180.60L1015.89 180.58L1016.23 180.54L1016.57 180.50L1016.91 180.50L1017.24 180.53L1017.56 180.62L1017.86 180.75L1018.15 180.91L1018.42 181.11L1018.69 181.34L1018.94 181.58L1019.19 181.84L1019.44 182.10L1019.68 182.37L1019.91 182.65L1020.15 182.93L1020.38 183.22L1020.60 183.52L1020.83 183.82L1021.05 184.12L1021.26 184.43L1021.47 184.75L1021.68 185.07L1021.88 185.40L1022.08 185.73L1022.28 186.07L1022.47 186.41L1022.65 186.76L1022.83 187.11L1023.00 187.47L1023.16 187.85L1023.30 188.24L1023.42 188.64L1023.51 189.07L1023.57 189.52L1023.60 189.99L1023.59 190.48L1023.57 190.97L1023.54 191.45L1023.52 191.91L1023.54 192.35L1023.59 192.76L1023.70 193.13L1023.86 193.48L1024.07 193.80L1024.32 194.11L1024.58 194.43L1024.84 194.75L1025.08 195.09L1025.30 195.44L1025.48 195.82L1025.63 196.22L1025.75 196.62L1025.84 197.04L1025.92 197.46L1025.98 197.89L1026.03 198.32L1026.07 198.75L1026.10 199.19L1026.13 199.62L1026.16 200.06L1026.18 200.49L1026.19 200.93L1026.20 201.36L1026.20 201.80L1026.20 202.24L1026.19 202.67L1026.18 203.11L1026.16 203.54L1026.13 203.98L1026.10 204.41L1026.07 204.85L1026.03 205.28L1025.98 205.71L1025.92 206.14L1025.84 206.56L1025.75 206.98L1025.63 207.38L1025.48 207.78L1025.30 208.16L1025.08 208.51L1024.84 208.85L1024.58 209.17L1024.32 209.49L1024.07 209.80L1023.86 210.12L1023.70 210.47L1023.59 210.84L1023.54 211.25L1023.52 211.69L1023.54 212.15L1023.57 212.63L1023.59 213.12L1023.60 213.61L1023.57 214.08L1023.51 214.53L1023.42 214.96L1023.30 215.36L1023.16 215.75L1023.00 216.13L1022.83 216.49L1022.65 216.84L1022.47 217.19L1022.28 217.53L1022.08 217.87L1021.88 218.20L1021.68 218.53L1021.47 218.85L1021.26 219.17L1021.05 219.48L1020.83 219.78L1020.60 220.08L1020.38 220.38L1020.15 220.67L1019.91 220.95L1019.68 221.23L1019.44 221.50L1019.19 221.76L1018.94 222.02L1018.69 222.26L1018.42 222.49L1018.15 222.69L1017.86 222.85L1017.56 222.98L1017.24 223.07L1016.91 223.10L1016.57 223.10L1016.23 223.06L1015.89 223.02L1015.56 223.00L1015.25 223.02L1014.96 223.10L1014.70 223.25L1014.46 223.48L1014.23 223.78L1014.01 224.13L1013.79 224.50L1013.56 224.87L1013.33 225.21L1013.07 225.52L1012.81 225.78L1012.53 225.99L1012.25 226.16L1011.95 226.29L1011.65 226.40L1011.35 226.48L1011.05 226.55L1010.74 226.61L1010.44 226.66L1010.13 226.70L1009.83 226.74L1009.52 226.77L1009.21 226.78L1008.91 226.80L1008.60 226.80L1008.29 226.80L1007.99 226.78L1007.68 226.77L1007.37 226.74L1007.07 226.70L1006.76 226.66L1006.46 226.61L1006.15 226.55L1005.85 226.48L1005.55 226.40L1005.25 226.29L1004.95 226.16L1004.67 225.99L1004.39 225.78L1004.13 225.52L1003.87 225.21L1003.64 224.87L1003.41 224.50L1003.19 224.13L1002.97 223.78L1002.74 223.48L1002.50 223.25L1002.24 223.10L1001.95 223.02L1001.64 223.00L1001.31 223.02L1000.97 223.06L1000.63 223.10L1000.29 223.10L999.96 223.07L999.64 222.98L999.34 222.85L999.05 222.69L998.78 222.49L998.51 222.26L998.26 222.02L998.01 221.76L997.76 221.50L997.52 221.23L997.29 220.95L997.05 220.67L996.82 220.38L996.60 220.08L996.37 219.78L996.15 219.48L995.94 219.17L995.73 218.85L995.52 218.53L995.32 218.20L995.12 217.87L994.92 217.53L994.73 217.19L994.55 216.84L994.37 216.49L994.20 216.13L994.04 215.75L993.90 215.36L993.78 214.96L993.69 214.53L993.63 214.08L993.60 213.61L993.61 213.12L993.63 212.63L993.66 212.15L993.68 211.69L993.66 211.25L993.61 210.84L993.50 210.47L993.34 210.12L993.13 209.80L992.88 209.49L992.62 209.17L992.36 208.85L992.12 208.51L991.90 208.16L991.72 207.78L991.57 207.38L991.45 206.98L991.36 206.56L991.28 206.14L991.22 205.71L991.17 205.28L991.13 204.85L991.10 204.41L991.07 203.98L991.04 203.54L991.02 203.11L991.01 202.67L991.00 202.24L991.00 201.80L991.00 201.36L991.01 200.93L991.02 200.49L991.04 200.06L991.07 199.62L991.10 199.19L991.13 198.75L991.17 198.32L991.22 197.89L991.28 197.46L991.36 197.04L991.45 196.62L991.57 196.22L991.72 195.82L991.90 195.44L992.12 195.09L992.36 194.75L992.62 194.43L992.88 194.11L993.13 193.80L993.34 193.48L993.50 193.13L993.61 192.76L993.66 192.35L993.68 191.91L993.66 191.45L993.63 190.97L993.61 190.48L993.60 189.99L993.63 189.52L993.69 189.07L993.78 188.64L993.90 188.24L994.04 187.85L994.20 187.47L994.37 187.11L994.55 186.76L994.73 186.41L994.92 186.07L995.12 185.73L995.32 185.40L995.52 185.07L995.73 184.75L995.94 184.43L996.15 184.12L996.37 183.82L996.60 183.52L996.82 183.22L997.05 182.93L997.29 182.65L997.52 182.37L997.76 182.10L998.01 181.84L998.26 181.58L998.51 181.34L998.78 181.11L999.05 180.91L999.34 180.75L999.64 180.62L999.96 180.53L1000.29 180.50L1000.63 180.50L1000.97 180.54L1001.31 180.58L1001.64 180.60L1001.95 180.58L1002.24 180.50L1002.50 180.35L1002.74 180.12L1002.97 179.82L1003.19 179.47L1003.41 179.10L1003.64 178.73L1003.87 178.39L1004.13 178.08L1004.39 177.82L1004.67 177.61L1004.95 177.44L1005.25 177.31L1005.55 177.20L1005.85 177.12L1006.15 177.05L1006.46 176.99L1006.76 176.94L1007.07 176.90L1007.37 176.86L1007.68 176.83L1007.99 176.82L1008.29 176.80Z" fill="url(#hy)" stroke="#ffffff" stroke-width="2.2" />
<text transform="translate(1008.60,171.00) scale(1,1.45)" font-size="4.6" fill="#a8dcc6" text-anchor="middle" >II-II</text>
<line x1="1012.00" y1="176.00" x2="1039.00" y2="176.00" stroke="#1fb070" stroke-width="0.8" />
<line x1="1012.00" y1="227.60" x2="1039.00" y2="227.60" stroke="#1fb070" stroke-width="0.8" />
<line x1="1034.20" y1="176.00" x2="1034.20" y2="227.60" stroke="#1fb070" stroke-width="0.8" />
<text transform="translate(1033.20,201.80) rotate(-90) scale(1.45,1)" font-size="3.7" fill="#25c07c" font-weight="bold" text-anchor="middle">Ø45h8</text>
<line x1="1005.20" y1="227.00" x2="1005.20" y2="239.00" stroke="#1fb070" stroke-width="0.8" />
<line x1="1011.60" y1="227.00" x2="1011.60" y2="239.00" stroke="#1fb070" stroke-width="0.8" />
<line x1="1005.20" y1="238.00" x2="1011.60" y2="238.00" stroke="#1fb070" stroke-width="0.8" />
<rect x="1017.00" y="231.00" width="12.50" height="5.40" fill="none" stroke="#1fb070" stroke-width="0.9" />
<text transform="translate(1023.25,235.43) scale(1,1.45)" font-size="3" fill="#2bd08a" text-anchor="middle" font-weight="bold" textLength="10.1" lengthAdjust="spacingAndGlyphs">12H9</text>
<line x1="1011.60" y1="233.60" x2="1017.00" y2="233.60" stroke="#1fb070" stroke-width="0.8" />
<text transform="translate(1021.00,31.50) scale(1,1.45)" font-size="3.4" fill="#1fb070" text-anchor="start" >其余</text>
<path d="M1029.40 28.40L1031.00 32.00L1033.56 25.60" fill="none" stroke="#1fb070" stroke-width="0.8" />
<rect x="633.60" y="315.00" width="105.80" height="115.60" fill="none" stroke="#178a5c" stroke-width="1.2" />
<line x1="634.40" y1="316.00" x2="634.40" y2="430.00" stroke="#9ff0cd" stroke-width="1.2" />
<text transform="translate(806.00,340.20) scale(1,1.45)" font-size="3.3" fill="#e4e4e4" text-anchor="middle" >技术要求</text>
<text transform="translate(782.00,347.80) scale(1,1.45)" font-size="2.7" fill="#dcdcdc" text-anchor="start" >1. 调质处理, 硬度为217~255HBs,</text>
<text transform="translate(782.00,354.60) scale(1,1.45)" font-size="2.7" fill="#dcdcdc" text-anchor="start" >2. 圆角半径 R=2mm,</text>
<text transform="translate(782.00,361.40) scale(1,1.45)" font-size="2.7" fill="#dcdcdc" text-anchor="start" textLength="51" lengthAdjust="spacingAndGlyphs">3. 花键两端倒角与键槽相对位置公差不大于0.05。</text>
<rect x="956.40" y="403.60" width="93.60" height="33.40" fill="none" stroke="#ffffff" stroke-width="1.8" />
<line x1="988.20" y1="403.60" x2="988.20" y2="437.00" stroke="#ffffff" stroke-width="1.6" />
<line x1="1019.00" y1="403.60" x2="1019.00" y2="437.00" stroke="#ffffff" stroke-width="1.6" />
<line x1="956.40" y1="423.30" x2="1019.00" y2="423.30" stroke="#ffffff" stroke-width="1.6" />
<line x1="1019.00" y1="412.60" x2="1050.00" y2="412.60" stroke="#ffffff" stroke-width="1.6" />
<line x1="1019.00" y1="428.40" x2="1050.00" y2="428.40" stroke="#ffffff" stroke-width="1.6" />
<line x1="956.40" y1="406.90" x2="988.20" y2="406.90" stroke="#ffffff" stroke-width="0.9" />
<line x1="956.40" y1="410.20" x2="988.20" y2="410.20" stroke="#ffffff" stroke-width="0.9" />
<line x1="956.40" y1="413.50" x2="988.20" y2="413.50" stroke="#ffffff" stroke-width="0.9" />
<line x1="956.40" y1="416.80" x2="988.20" y2="416.80" stroke="#ffffff" stroke-width="0.9" />
<line x1="956.40" y1="420.10" x2="988.20" y2="420.10" stroke="#ffffff" stroke-width="0.9" />
<line x1="956.40" y1="426.70" x2="988.20" y2="426.70" stroke="#ffffff" stroke-width="0.9" />
<line x1="956.40" y1="430.10" x2="988.20" y2="430.10" stroke="#ffffff" stroke-width="0.9" />
<line x1="956.40" y1="433.50" x2="988.20" y2="433.50" stroke="#ffffff" stroke-width="0.9" />
<line x1="961.50" y1="403.60" x2="961.50" y2="437.00" stroke="#ffffff" stroke-width="0.8" />
<line x1="967.50" y1="403.60" x2="967.50" y2="437.00" stroke="#ffffff" stroke-width="0.8" />
<line x1="975.50" y1="403.60" x2="975.50" y2="437.00" stroke="#ffffff" stroke-width="0.8" />
<line x1="981.50" y1="403.60" x2="981.50" y2="437.00" stroke="#ffffff" stroke-width="0.8" />
<text transform="translate(957.60,422.00) scale(1,1.45)" font-size="1.9" fill="#ffffff" text-anchor="start" textLength="29" lengthAdjust="spacingAndGlyphs" font-weight="bold">标记 处数 分区 更改文件号 签名 日期</text>
<text transform="translate(958.00,427.20) scale(1,1.45)" font-size="2" fill="#ffffff" text-anchor="start" >设计 标准化</text>
<text transform="translate(958.00,430.60) scale(1,1.45)" font-size="2" fill="#ffffff" text-anchor="start" >审核</text>
<text transform="translate(958.00,434.00) scale(1,1.45)" font-size="2" fill="#ffffff" text-anchor="start" >工艺 批准</text>
<text transform="translate(1003.60,416.00) scale(1,1.45)" font-size="3.4" fill="#c8c8c8" text-anchor="middle" >2 轴</text>
<text transform="translate(1003.60,432.40) scale(1,1.45)" font-size="3" fill="#c8c8c8" text-anchor="middle" >45</text>
<text transform="translate(1034.50,410.60) scale(1,1.45)" font-size="3.6" fill="#ffffff" text-anchor="middle" >THDDH-17-00-17</text>
<line x1="1019.00" y1="416.55" x2="1050.00" y2="416.55" stroke="#ffffff" stroke-width="0.8" />
<line x1="1019.00" y1="420.50" x2="1050.00" y2="420.50" stroke="#ffffff" stroke-width="0.8" />
<line x1="1019.00" y1="424.45" x2="1050.00" y2="424.45" stroke="#ffffff" stroke-width="0.8" />
<line x1="1034.00" y1="412.60" x2="1034.00" y2="428.40" stroke="#ffffff" stroke-width="0.8" />
<line x1="1023.00" y1="412.60" x2="1023.00" y2="420.50" stroke="#ffffff" stroke-width="0.7" />
<line x1="1026.80" y1="412.60" x2="1026.80" y2="420.50" stroke="#ffffff" stroke-width="0.7" />
<line x1="1030.40" y1="412.60" x2="1030.40" y2="420.50" stroke="#ffffff" stroke-width="0.7" />
<line x1="1038.00" y1="412.60" x2="1038.00" y2="420.50" stroke="#ffffff" stroke-width="0.7" />
<line x1="1042.00" y1="412.60" x2="1042.00" y2="420.50" stroke="#ffffff" stroke-width="0.7" />
<line x1="1046.00" y1="412.60" x2="1046.00" y2="420.50" stroke="#ffffff" stroke-width="0.7" />
<text transform="translate(1020.00,416.00) scale(1,1.45)" font-size="1.9" fill="#ffffff" text-anchor="start" >阶段标记 重量 比例</text>
<text transform="translate(1036.00,424.00) scale(1,1.45)" font-size="2.2" fill="#ffffff" text-anchor="start" >1:1</text>
<text transform="translate(1020.00,427.60) scale(1,1.45)" font-size="1.9" fill="#ffffff" text-anchor="start" >共 张 第 张</text>
<text transform="translate(1034.50,434.60) scale(1,1.45)" font-size="2.9" fill="#ffffff" text-anchor="middle" >河南科技大学车辆022班</text>
<rect x="0.00" y="448.00" width="540.00" height="445.00" fill="#1c1f24" stroke="none" stroke-width="0" />
<defs><pattern id="hy2" width="2.4" height="2.4" patternUnits="userSpaceOnUse" patternTransform="rotate(32)"><rect width="2.4" height="2.4" fill="#2a2c1a"/><line x1="0.6" y1="0" x2="0.6" y2="2.4" stroke="#85832a" stroke-width="1.0"/></pattern><pattern id="hg2" width="2" height="2" patternUnits="userSpaceOnUse" patternTransform="rotate(-35)"><rect width="2" height="2" fill="#0f4231"/><line x1="0.5" y1="0" x2="0.5" y2="2" stroke="#1b7a55" stroke-width="0.8"/></pattern></defs>
<rect x="103.40" y="496.30" width="334.80" height="350.30" fill="none" stroke="#ffffff" stroke-width="2.7" />
<rect x="110.40" y="500.90" width="324.60" height="341.20" fill="none" stroke="#ffffff" stroke-width="2.5" />
<path d="M110 506.8H128V501" fill="none" stroke="#ffffff" stroke-width="1.8" />
<text transform="translate(119,502.6) scale(-1,-1.4)" font-size="2.4" fill="#ffffff" text-anchor="middle">THDDH-17-00-00</text>
<line x1="114.50" y1="671.10" x2="307.00" y2="671.10" stroke="#74202a" stroke-width="0.9" stroke-dasharray="30 3 5 3"/>
<line x1="206.30" y1="509.00" x2="206.30" y2="700.00" stroke="#74202a" stroke-width="0.9" />
<line x1="277.30" y1="520.00" x2="277.30" y2="671.00" stroke="#74202a" stroke-width="0.9" />
<line x1="186.80" y1="544.00" x2="186.80" y2="568.00" stroke="#74202a" stroke-width="0.8" />
<line x1="225.30" y1="544.00" x2="225.30" y2="568.00" stroke="#74202a" stroke-width="0.8" />
<line x1="149.50" y1="568.00" x2="149.50" y2="592.00" stroke="#74202a" stroke-width="0.8" />
<line x1="258.60" y1="545.00" x2="258.60" y2="572.00" stroke="#74202a" stroke-width="0.8" />
<line x1="292.00" y1="548.00" x2="292.00" y2="570.00" stroke="#74202a" stroke-width="0.8" />
<line x1="311.40" y1="570.00" x2="311.40" y2="600.00" stroke="#74202a" stroke-width="0.8" />
<line x1="216.60" y1="800.00" x2="216.60" y2="830.00" stroke="#74202a" stroke-width="0.8" />
<line x1="208.00" y1="806.00" x2="208.00" y2="826.00" stroke="#74202a" stroke-width="0.8" />
<path d="M144 595.5V767A40 60 0 0 0 184 826.6H252A66.4 98.600 0 0 0 318.4 728V642" fill="none" stroke="#ffffff" stroke-width="5.0" stroke-linejoin="round" />
<path d="M144 595.5V767A40 60 0 0 0 184 826.6H252A66.4 98.600 0 0 0 318.4 728V642" fill="none" stroke="#0f4030" stroke-width="1.5" stroke-linejoin="round" />
<path d="M131.2 702.6L135.2 700.4L146 712.6V740.6H141.8Z" fill="url(#hg2)" stroke="#ffffff" stroke-width="1.4" stroke-linejoin="round"/>
<path d="M142.6 686L146 680V711Z" fill="url(#hg2)" stroke="#ffffff" stroke-width="0.8" />
<path d="M137 694L151 717.5" fill="none" stroke="#ffffff" stroke-width="3.2" />
<path d="M137 694L151 717.5" fill="none" stroke="#7a6fb0" stroke-width="0.6" />
<g transform="translate(134.4,689.6) rotate(-27)"><rect x="-3.4" y="-5.6" width="6.8" height="11.2" fill="#ffffff"/><rect x="-1" y="-3" width="2" height="5" fill="#8d86c8"/></g>
<path d="M142.6 596.6H159.6A17 18.8 0 0 1 146.4 615.4H142.6Z" fill="url(#hg2)" stroke="#ffffff" stroke-width="1.6" />
<line x1="146.00" y1="595.30" x2="302.60" y2="595.30" stroke="#ffffff" stroke-width="2.2" />
<rect x="141.90" y="590.00" width="17.70" height="5.30" fill="#d9f3e6" stroke="#ffffff" stroke-width="1.6" />
<path d="M161.6 590V564.1H194.6" fill="none" stroke="#ffffff" stroke-width="6.6" stroke-linejoin="round" stroke-linecap="butt"/>
<path d="M161.6 590V564.1H194.6" fill="none" stroke="#0f4030" stroke-width="2.4" stroke-linejoin="round" stroke-linecap="butt"/>
<line x1="195.20" y1="560.80" x2="195.20" y2="567.40" stroke="#ffffff" stroke-width="1.4" />
<path d="M218.6 564.1H266.4" fill="none" stroke="#ffffff" stroke-width="6.6" stroke-linejoin="round" />
<path d="M218.6 564.1H266.4" fill="none" stroke="#0f4030" stroke-width="2.4" stroke-linejoin="round" />
<line x1="218.00" y1="560.80" x2="218.00" y2="567.40" stroke="#ffffff" stroke-width="1.4" />
<line x1="267.00" y1="560.80" x2="267.00" y2="567.40" stroke="#ffffff" stroke-width="1.4" />
<path d="M287.4 564.1H300.3V589" fill="none" stroke="#ffffff" stroke-width="5.6" stroke-linejoin="round" />
<path d="M287.4 564.1H300.3V589" fill="none" stroke="#0f4030" stroke-width="2.2" stroke-linejoin="round" />
<line x1="286.90" y1="560.80" x2="286.90" y2="567.40" stroke="#ffffff" stroke-width="1.4" />
<rect x="303.40" y="589.20" width="16.00" height="5.40" fill="#d9f3e6" stroke="#ffffff" stroke-width="1.6" />
<path d="M302.8 595.4H320.3V642H308.6V612C308.6 604 303 603 302.8 595.4Z" fill="url(#hg2)" stroke="#ffffff" stroke-width="1.6" stroke-linejoin="round"/>
<rect x="308.60" y="582.20" width="6.00" height="6.80" fill="#ffffff" stroke="#ffffff" stroke-width="1.2" />
<path d="M310.4 589V601L311.6 604.5L312.8 601V589Z" fill="#ffffff" stroke="#ffffff" stroke-width="0.8" />
<line x1="311.60" y1="583.00" x2="311.60" y2="602.00" stroke="#a33" stroke-width="0.6" stroke-dasharray="2.500 1.500"/>
<rect x="183.80" y="556.60" width="11.80" height="4.20" fill="#ffffff" stroke="#ffffff" stroke-width="1.2" />
<rect x="217.70" y="556.60" width="11.90" height="4.20" fill="#ffffff" stroke="#ffffff" stroke-width="1.2" />
<path d="M189 557.4L199.2 538.4L202.8 540.2L193 559.4Z" fill="#0f4030" stroke="#ffffff" stroke-width="1.5" stroke-linejoin="round"/>
<path d="M223.6 557.4L213.4 538.4L209.8 540.2L219.6 559.4Z" fill="#0f4030" stroke="#ffffff" stroke-width="1.5" stroke-linejoin="round"/>
<path d="M196.3 538.2V527.6L199.3 520.8L203 525.2L206.3 524.2L209.6 525.2L213.3 520.8L216.4 527.6V538.2Z" fill="#ffffff" stroke="#ffffff" stroke-width="0.8" stroke-linejoin="round"/>
<line x1="206.30" y1="526.40" x2="206.30" y2="533.60" stroke="#22252a" stroke-width="1.3" />
<line x1="204.60" y1="538.00" x2="204.60" y2="572.00" stroke="#ffffff" stroke-width="1.5" />
<line x1="208.10" y1="538.00" x2="208.10" y2="572.00" stroke="#ffffff" stroke-width="1.5" />
<rect x="256.40" y="551.00" width="5.20" height="16.20" fill="#ffffff" stroke="#ffffff" stroke-width="1" />
<rect x="287.20" y="556.60" width="10.60" height="4.20" fill="#ffffff" stroke="#ffffff" stroke-width="1.2" />
<path d="M262.4 559.6L270.6 543.6L273.8 545.2L266 560.6Z" fill="#0f4030" stroke="#ffffff" stroke-width="1.5" stroke-linejoin="round"/>
<path d="M283.2 543.4L292.2 557.2L288.8 558.6L280.2 545.200Z" fill="#0f4030" stroke="#ffffff" stroke-width="1.5" stroke-linejoin="round"/>
<path d="M268 544.2V535L270.6 531.2L274 532.6L276.3 531.6L279 532.6L283 531.2L286.3 535V544.2Z" fill="#ffffff" stroke="#ffffff" stroke-width="0.8" stroke-linejoin="round"/>
<line x1="276.30" y1="533.40" x2="276.30" y2="540.60" stroke="#5a1a1e" stroke-width="1.1" />
<path d="M274 544V587L291.2 617.5" fill="none" stroke="#ffffff" stroke-width="1.5" />
<path d="M278.1 544V586L295 615.6" fill="none" stroke="#ffffff" stroke-width="1.5" />
<rect x="292.60" y="616.80" width="11.00" height="7.60" fill="url(#hg2)" stroke="#ffffff" stroke-width="1.3" />
<rect x="292.60" y="632.40" width="11.00" height="6.20" fill="url(#hg2)" stroke="#ffffff" stroke-width="1.3" />
<path d="M308.6 632.4V641.8H318" fill="none" stroke="#ffffff" stroke-width="1.3" />
<rect x="288.60" y="625.20" width="32.80" height="6.60" fill="#3a161a" stroke="#ffffff" stroke-width="1.9" />
<rect x="316.60" y="626.00" width="4.80" height="5.00" fill="#ffffff" stroke="#ffffff" stroke-width="0.6" />
<line x1="291.40" y1="639.00" x2="282.20" y2="682.00" stroke="#ffffff" stroke-width="2.0" />
<line x1="295.20" y1="639.00" x2="286.00" y2="682.00" stroke="#ffffff" stroke-width="2.0" />
<path d="M271.4 696L245 700.6" fill="none" stroke="#ffffff" stroke-width="2.0" />
<path d="M295.4 699.6L251.6 734.8" fill="none" stroke="#ffffff" stroke-width="2.0" />
<path d="M284 700.4L251.600 728.6" fill="none" stroke="#ffffff" stroke-width="2.0" />
<path d="M265.8 697.4L268.6 707.6" fill="none" stroke="#ffffff" stroke-width="1.8" />
<path d="M272.6 708.8L274.600 715.6" fill="none" stroke="#ffffff" stroke-width="1.8" />
<path d="M271.4 699.6V690L275.4 682.2H291.4L296.6 691V699.6Z" fill="#ffffff" stroke="#ffffff" stroke-width="1.4" stroke-linejoin="round"/>
<path d="M275.4 688.4L277.6 684.4H281.4V688.4Z" fill="#1c1f24" stroke="none" stroke-width="0" />
<path d="M286 684.4H289.6L292.6 688.4H286Z" fill="#1c1f24" stroke="none" stroke-width="0" />
<path d="M280.800 697.6L281.8 688.600H285.200L286.2 697.6Z" fill="#1c1f24" stroke="none" stroke-width="0" />
<ellipse cx="275.40" cy="694.50" rx="1.90" ry="2.90" fill="#2a1a1c" stroke="#7a2026" stroke-width="0.8" />
<ellipse cx="288.80" cy="694.50" rx="1.90" ry="2.90" fill="#2a1a1c" stroke="#7a2026" stroke-width="0.8" />
<line x1="273.00" y1="694.50" x2="292.00" y2="694.50" stroke="#a33" stroke-width="0.5" />
<path d="M194.6 587.4L193.2 652" fill="none" stroke="#ffffff" stroke-width="2.0" />
<path d="M203.800 590.6L214.6 628" fill="none" stroke="#ffffff" stroke-width="2.0" />
<path d="M209.6 590.6L218.6 622" fill="none" stroke="#ffffff" stroke-width="2.0" />
<path d="M219 586.2L233 600" fill="none" stroke="#ffffff" stroke-width="2.0" />
<path d="M195.4 606.4L204.4 602.8" fill="none" stroke="#ffffff" stroke-width="1.9" />
<path d="M212.6 598.8L222.6 593.6" fill="none" stroke="#ffffff" stroke-width="1.9" />
<path d="M193.6 588V580L197.6 572L203.600 570.8H209.400L215.2 572L219.4 580V588L214.6 592.400H198.4Z" fill="#ffffff" stroke="#ffffff" stroke-width="1.2" stroke-linejoin="round"/>
<ellipse cx="199.30" cy="584.20" rx="2.10" ry="3.70" fill="#1c1f24" stroke="none" stroke-width="0" />
<ellipse cx="213.20" cy="584.20" rx="2.10" ry="3.70" fill="#1c1f24" stroke="none" stroke-width="0" />
<path d="M204.6 592.6L205.4 579.6H207.4L208.4 592.6Z" fill="#1c1f24" stroke="none" stroke-width="0" />
<path d="M198.6 577.4L200.6 574.2L203.4 575.6" fill="none" stroke="#1c1f24" stroke-width="1" />
<path d="M214 577.4L212 574.2L209.2 575.6" fill="none" stroke="#1c1f24" stroke-width="1" />
<ellipse cx="207.90" cy="784.40" rx="21.30" ry="31.40" fill="#1c1f24" stroke="none" stroke-width="0" />
<ellipse cx="207.90" cy="784.40" rx="20.00" ry="29.60" fill="none" stroke="#7a1f27" stroke-width="0.6" />
<ellipse cx="207.90" cy="784.40" rx="21.30" ry="31.40" fill="none" stroke="#ffffff" stroke-width="2.1" />
<ellipse cx="207.90" cy="784.40" rx="18.60" ry="27.80" fill="none" stroke="#ffffff" stroke-width="2.1" />
<ellipse cx="207.90" cy="784.40" rx="8.40" ry="13.00" fill="url(#hy2)" stroke="#ffffff" stroke-width="1.8" />
<path d="M185 757L193.6 771" fill="none" stroke="#ffffff" stroke-width="1.5" />
<ellipse cx="181.50" cy="716.50" rx="30.40" ry="45.00" fill="#1c1f24" stroke="none" stroke-width="0" />
<ellipse cx="181.50" cy="716.50" rx="28.80" ry="43.10" fill="none" stroke="#7a1f27" stroke-width="0.6" />
<ellipse cx="181.50" cy="716.50" rx="30.40" ry="45.00" fill="none" stroke="#ffffff" stroke-width="2.1" />
<ellipse cx="181.50" cy="716.50" rx="27.20" ry="41.20" fill="none" stroke="#ffffff" stroke-width="2.1" />
<ellipse cx="181.50" cy="716.50" rx="7.50" ry="11.40" fill="url(#hy2)" stroke="#ffffff" stroke-width="1.8" />
<ellipse cx="220.20" cy="732.00" rx="30.00" ry="43.80" fill="#1c1f24" stroke="none" stroke-width="0" />
<ellipse cx="220.20" cy="732.00" rx="28.50" ry="42.00" fill="none" stroke="#7a1f27" stroke-width="0.6" />
<ellipse cx="220.20" cy="732.00" rx="22.50" ry="34.80" fill="none" stroke="#7a1f27" stroke-width="0.6" />
<ellipse cx="220.20" cy="732.00" rx="30.00" ry="43.80" fill="none" stroke="#ffffff" stroke-width="2.1" />
<ellipse cx="220.20" cy="732.00" rx="27.00" ry="40.20" fill="none" stroke="#ffffff" stroke-width="2.1" />
<ellipse cx="220.20" cy="732.00" rx="24.00" ry="36.60" fill="none" stroke="#ffffff" stroke-width="2.1" />
<ellipse cx="220.20" cy="732.00" rx="21.00" ry="33.00" fill="none" stroke="#ffffff" stroke-width="2.1" />
<ellipse cx="220.20" cy="732.00" rx="15.40" ry="23.60" fill="none" stroke="#8f1d2b" stroke-width="1.1" stroke-dasharray="9 3"/>
<ellipse cx="220.20" cy="732.00" rx="10.70" ry="16.70" fill="url(#hy2)" stroke="#ffffff" stroke-width="1.8" />
<ellipse cx="239.80" cy="640.80" rx="28.00" ry="42.50" fill="#1c1f24" stroke="none" stroke-width="0" />
<ellipse cx="239.80" cy="640.80" rx="26.40" ry="40.00" fill="none" stroke="#7a1f27" stroke-width="0.6" />
<ellipse cx="239.80" cy="640.80" rx="20.00" ry="30.60" fill="none" stroke="#7a1f27" stroke-width="0.6" />
<ellipse cx="239.80" cy="640.80" rx="28.00" ry="42.50" fill="none" stroke="#ffffff" stroke-width="2.1" />
<ellipse cx="239.80" cy="640.80" rx="24.80" ry="37.60" fill="none" stroke="#ffffff" stroke-width="2.1" />
<ellipse cx="239.80" cy="640.80" rx="21.60" ry="33.00" fill="none" stroke="#ffffff" stroke-width="2.1" />
<ellipse cx="239.80" cy="640.80" rx="18.40" ry="28.20" fill="none" stroke="#ffffff" stroke-width="2.1" />
<ellipse cx="239.80" cy="640.80" rx="10.00" ry="15.00" fill="url(#hy2)" stroke="#ffffff" stroke-width="1.8" />
<ellipse cx="207.40" cy="670.80" rx="17.40" ry="26.20" fill="#1c1f24" stroke="none" stroke-width="0" />
<ellipse cx="207.40" cy="670.80" rx="15.90" ry="24.10" fill="none" stroke="#7a1f27" stroke-width="0.6" />
<ellipse cx="207.40" cy="670.80" rx="17.40" ry="26.20" fill="none" stroke="#ffffff" stroke-width="2.1" />
<ellipse cx="207.40" cy="670.80" rx="14.40" ry="22.00" fill="none" stroke="#ffffff" stroke-width="2.1" />
<path d="M207.40 654.10L207.95 654.23L208.47 654.59L208.96 655.10L209.43 655.64L209.88 656.11L210.34 656.43L210.83 656.60L211.37 656.64L211.94 656.63L212.53 656.69L213.08 656.89L213.57 657.29L213.97 657.91L214.26 658.69L214.47 659.56L214.65 660.43L214.83 661.23L215.09 661.92L215.42 662.52L215.84 663.05L216.31 663.58L216.76 664.17L217.14 664.86L217.39 665.64L217.48 666.51L217.43 667.41L217.28 668.31L217.10 669.18L216.95 670.00L216.90 670.80L216.95 671.60L217.10 672.42L217.28 673.29L217.43 674.19L217.48 675.09L217.39 675.96L217.14 676.74L216.76 677.43L216.31 678.02L215.84 678.55L215.42 679.08L215.09 679.68L214.83 680.37L214.65 681.17L214.47 682.04L214.26 682.91L213.97 683.69L213.57 684.31L213.08 684.71L212.53 684.91L211.94 684.97L211.37 684.96L210.83 685.00L210.34 685.17L209.88 685.49L209.43 685.96L208.96 686.50L208.47 687.01L207.95 687.37L207.40 687.50L206.85 687.37L206.33 687.01L205.84 686.50L205.37 685.96L204.92 685.49L204.46 685.17L203.97 685.00L203.43 684.96L202.86 684.97L202.28 684.91L201.72 684.71L201.23 684.31L200.83 683.69L200.54 682.91L200.33 682.04L200.15 681.17L199.97 680.37L199.71 679.68L199.38 679.08L198.96 678.55L198.49 678.02L198.04 677.43L197.66 676.74L197.41 675.96L197.32 675.09L197.37 674.19L197.52 673.29L197.70 672.42L197.85 671.60L197.90 670.80L197.85 670.00L197.70 669.18L197.52 668.31L197.37 667.41L197.32 666.51L197.41 665.64L197.66 664.86L198.04 664.17L198.49 663.58L198.96 663.05L199.38 662.52L199.71 661.92L199.97 661.23L200.15 660.43L200.33 659.56L200.54 658.69L200.83 657.91L201.23 657.29L201.72 656.89L202.28 656.69L202.86 656.63L203.43 656.64L203.97 656.60L204.46 656.43L204.92 656.11L205.37 655.64L205.84 655.10L206.33 654.59L206.85 654.23Z" fill="url(#hy2)" stroke="#ffffff" stroke-width="1.7" />
<line x1="207.40" y1="670.80" x2="239.80" y2="640.80" stroke="#1aa56e" stroke-width="1.0" />
<line x1="207.40" y1="670.80" x2="220.20" y2="732.00" stroke="#1aa56e" stroke-width="0.9" />
<line x1="181.50" y1="716.50" x2="220.20" y2="732.00" stroke="#1aa56e" stroke-width="0.9" />
<line x1="181.50" y1="716.50" x2="192.00" y2="688.00" stroke="#1aa56e" stroke-width="0.8" />
<line x1="220.20" y1="732.00" x2="214.00" y2="764.00" stroke="#1aa56e" stroke-width="0.8" />
<path d="M198 719.6L204 722.6L199.600 724.6Z" fill="#5ff0b0" stroke="none" stroke-width="0" />
<path d="M215.6 710L218.4 716.6L214.2 715.4Z" fill="#5ff0b0" stroke="none" stroke-width="0" />
<path d="M190.6 690L193.6 686.6L193.4 691.6Z" fill="#3fd696" stroke="none" stroke-width="0" />
<rect x="213.20" y="824.80" width="7.00" height="10.40" fill="#ffffff" stroke="#ffffff" stroke-width="1" />
<line x1="216.70" y1="826.00" x2="216.70" y2="834.00" stroke="#c88" stroke-width="0.7" />
<line x1="185.70" y1="510.00" x2="196.80" y2="527.00" stroke="#d4d6d8" stroke-width="0.9" />
<text transform="translate(185.70,511.00) scale(1,1.45)" font-size="2.6" fill="#e8e8e8" text-anchor="middle" >44</text>
<line x1="189.60" y1="510.00" x2="198.60" y2="525.60" stroke="#d4d6d8" stroke-width="0.9" />
<text transform="translate(189.60,511.00) scale(1,1.45)" font-size="2.6" fill="#e8e8e8" text-anchor="middle" >45</text>
<line x1="233.20" y1="510.00" x2="256.40" y2="552.60" stroke="#d4d6d8" stroke-width="0.9" />
<text transform="translate(233.20,511.00) scale(1,1.45)" font-size="2.6" fill="#e8e8e8" text-anchor="middle" >46</text>
<line x1="249.60" y1="510.40" x2="258.60" y2="551.00" stroke="#d4d6d8" stroke-width="0.9" />
<text transform="translate(249.60,511.40) scale(1,1.45)" font-size="2.6" fill="#e8e8e8" text-anchor="middle" >47</text>
<line x1="347.00" y1="563.60" x2="315.40" y2="582.80" stroke="#d4d6d8" stroke-width="0.9" />
<text transform="translate(347.00,564.60) scale(1,1.45)" font-size="2.6" fill="#e8e8e8" text-anchor="middle" >1</text>
<line x1="347.00" y1="572.80" x2="318.60" y2="587.20" stroke="#d4d6d8" stroke-width="0.9" />
<text transform="translate(347.00,573.80) scale(1,1.45)" font-size="2.6" fill="#e8e8e8" text-anchor="middle" >2</text>
<line x1="347.00" y1="608.00" x2="322.60" y2="623.40" stroke="#d4d6d8" stroke-width="0.9" />
<text transform="translate(347.00,609.00) scale(1,1.45)" font-size="2.6" fill="#e8e8e8" text-anchor="middle" >3</text>
<line x1="347.00" y1="618.80" x2="322.60" y2="628.40" stroke="#d4d6d8" stroke-width="0.9" />
<text transform="translate(347.00,619.80) scale(1,1.45)" font-size="2.6" fill="#e8e8e8" text-anchor="middle" >4</text>
<line x1="121.20" y1="688.00" x2="130.60" y2="691.40" stroke="#d4d6d8" stroke-width="0.9" />
<text transform="translate(121.20,689.00) scale(1,1.45)" font-size="2.6" fill="#e8e8e8" text-anchor="middle" >43</text>
<line x1="121.40" y1="783.20" x2="215.40" y2="828.60" stroke="#d4d6d8" stroke-width="0.9" />
<text transform="translate(121.40,784.20) scale(1,1.45)" font-size="2.6" fill="#e8e8e8" text-anchor="middle" >42</text>
<line x1="121.40" y1="805.60" x2="170.00" y2="820.00" stroke="#d4d6d8" stroke-width="0.9" />
<text transform="translate(121.40,806.60) scale(1,1.45)" font-size="2.6" fill="#e8e8e8" text-anchor="middle" >41</text>
<text transform="translate(206.30,509.20) scale(1,1.45)" font-size="4.2" fill="#d8dadc" text-anchor="middle" >A–A</text>
<text transform="translate(393.00,576.40) scale(1,1.45)" font-size="3" fill="#ffffff" text-anchor="middle" >技术要求</text>
<text transform="translate(383.4,581.00) scale(1,1.4)" font-size="2.3" fill="#ffffff" textLength="27" lengthAdjust="spacingAndGlyphs" font-weight="bold">1.装配前所有零件用煤油清洗,滚动轴承用汽油清洗。</text>
<text transform="translate(383.4,584.65) scale(1,1.4)" font-size="2.3" fill="#ffffff" textLength="14.5" lengthAdjust="spacingAndGlyphs" font-weight="bold">2.各密封处不得漏油。</text>
<text transform="translate(383.4,588.30) scale(1,1.4)" font-size="2.3" fill="#ffffff" textLength="35" lengthAdjust="spacingAndGlyphs" font-weight="bold">3.变速器装配后应进行空载和负载试验,不得有异常响声。</text>
<text transform="translate(383.4,591.95) scale(1,1.4)" font-size="2.3" fill="#ffffff" textLength="18" lengthAdjust="spacingAndGlyphs" font-weight="bold">4.箱体内装齿轮油至规定高度。</text>
<text transform="translate(383.4,595.60) scale(1,1.4)" font-size="2.3" fill="#ffffff" textLength="16" lengthAdjust="spacingAndGlyphs" font-weight="bold">5.外表面涂灰色油漆。</text>
<rect x="384.60" y="623.00" width="49.40" height="200.40" fill="#14161a" stroke="none" stroke-width="0" />
<line x1="384.60" y1="625.90" x2="434.00" y2="625.90" stroke="#c4c6c8" stroke-width="1.0" />
<line x1="384.60" y1="628.81" x2="434.00" y2="628.81" stroke="#c4c6c8" stroke-width="1.0" />
<line x1="384.60" y1="631.71" x2="434.00" y2="631.71" stroke="#c4c6c8" stroke-width="1.0" />
<line x1="384.60" y1="634.62" x2="434.00" y2="634.62" stroke="#c4c6c8" stroke-width="1.0" />
<line x1="384.60" y1="637.52" x2="434.00" y2="637.52" stroke="#c4c6c8" stroke-width="1.0" />
<line x1="384.60" y1="640.43" x2="434.00" y2="640.43" stroke="#c4c6c8" stroke-width="1.0" />
<line x1="384.60" y1="643.33" x2="434.00" y2="643.33" stroke="#c4c6c8" stroke-width="1.0" />
<line x1="384.60" y1="646.23" x2="434.00" y2="646.23" stroke="#c4c6c8" stroke-width="1.0" />
<line x1="384.60" y1="649.14" x2="434.00" y2="649.14" stroke="#c4c6c8" stroke-width="1.0" />
<line x1="384.60" y1="652.04" x2="434.00" y2="652.04" stroke="#c4c6c8" stroke-width="1.0" />
<line x1="384.60" y1="654.95" x2="434.00" y2="654.95" stroke="#c4c6c8" stroke-width="1.0" />
<line x1="384.60" y1="657.85" x2="434.00" y2="657.85" stroke="#c4c6c8" stroke-width="1.0" />
<line x1="384.60" y1="660.76" x2="434.00" y2="660.76" stroke="#c4c6c8" stroke-width="1.0" />
<line x1="384.60" y1="663.66" x2="434.00" y2="663.66" stroke="#c4c6c8" stroke-width="1.0" />
<line x1="384.60" y1="666.57" x2="434.00" y2="666.57" stroke="#c4c6c8" stroke-width="1.0" />
<line x1="384.60" y1="669.47" x2="434.00" y2="669.47" stroke="#c4c6c8" stroke-width="1.0" />
<line x1="384.60" y1="672.37" x2="434.00" y2="672.37" stroke="#c4c6c8" stroke-width="1.0" />
<line x1="384.60" y1="675.28" x2="434.00" y2="675.28" stroke="#c4c6c8" stroke-width="1.0" />
<line x1="384.60" y1="678.18" x2="434.00" y2="678.18" stroke="#c4c6c8" stroke-width="1.0" />
<line x1="384.60" y1="681.09" x2="434.00" y2="681.09" stroke="#c4c6c8" stroke-width="1.0" />
<line x1="384.60" y1="683.99" x2="434.00" y2="683.99" stroke="#c4c6c8" stroke-width="1.0" />
<line x1="384.60" y1="686.90" x2="434.00" y2="686.90" stroke="#c4c6c8" stroke-width="1.0" />
<line x1="384.60" y1="689.80" x2="434.00" y2="689.80" stroke="#c4c6c8" stroke-width="1.0" />
<line x1="384.60" y1="692.70" x2="434.00" y2="692.70" stroke="#c4c6c8" stroke-width="1.0" />
<line x1="384.60" y1="695.61" x2="434.00" y2="695.61" stroke="#c4c6c8" stroke-width="1.0" />
<line x1="384.60" y1="698.51" x2="434.00" y2="698.51" stroke="#c4c6c8" stroke-width="1.0" />
<line x1="384.60" y1="701.42" x2="434.00" y2="701.42" stroke="#c4c6c8" stroke-width="1.0" />
<line x1="384.60" y1="704.32" x2="434.00" y2="704.32" stroke="#c4c6c8" stroke-width="1.0" />
<line x1="384.60" y1="707.23" x2="434.00" y2="707.23" stroke="#c4c6c8" stroke-width="1.0" />
<line x1="384.60" y1="710.13" x2="434.00" y2="710.13" stroke="#c4c6c8" stroke-width="1.0" />
<line x1="384.60" y1="713.03" x2="434.00" y2="713.03" stroke="#c4c6c8" stroke-width="1.0" />
<line x1="384.60" y1="715.94" x2="434.00" y2="715.94" stroke="#c4c6c8" stroke-width="1.0" />
<line x1="384.60" y1="718.84" x2="434.00" y2="718.84" stroke="#c4c6c8" stroke-width="1.0" />
<line x1="384.60" y1="721.75" x2="434.00" y2="721.75" stroke="#c4c6c8" stroke-width="1.0" />
<line x1="384.60" y1="724.65" x2="434.00" y2="724.65" stroke="#c4c6c8" stroke-width="1.0" />
<line x1="384.60" y1="727.56" x2="434.00" y2="727.56" stroke="#c4c6c8" stroke-width="1.0" />
<line x1="384.60" y1="730.46" x2="434.00" y2="730.46" stroke="#c4c6c8" stroke-width="1.0" />
<line x1="384.60" y1="733.37" x2="434.00" y2="733.37" stroke="#c4c6c8" stroke-width="1.0" />
<line x1="384.60" y1="736.27" x2="434.00" y2="736.27" stroke="#c4c6c8" stroke-width="1.0" />
<line x1="384.60" y1="739.17" x2="434.00" y2="739.17" stroke="#c4c6c8" stroke-width="1.0" />
<line x1="384.60" y1="742.08" x2="434.00" y2="742.08" stroke="#c4c6c8" stroke-width="1.0" />
<line x1="384.60" y1="744.98" x2="434.00" y2="744.98" stroke="#c4c6c8" stroke-width="1.0" />
<line x1="384.60" y1="747.89" x2="434.00" y2="747.89" stroke="#c4c6c8" stroke-width="1.0" />
<line x1="384.60" y1="750.79" x2="434.00" y2="750.79" stroke="#c4c6c8" stroke-width="1.0" />
<line x1="384.60" y1="753.70" x2="434.00" y2="753.70" stroke="#c4c6c8" stroke-width="1.0" />
<line x1="384.60" y1="756.60" x2="434.00" y2="756.60" stroke="#c4c6c8" stroke-width="1.0" />
<line x1="384.60" y1="759.50" x2="434.00" y2="759.50" stroke="#c4c6c8" stroke-width="1.0" />
<line x1="384.60" y1="762.41" x2="434.00" y2="762.41" stroke="#c4c6c8" stroke-width="1.0" />
<line x1="384.60" y1="765.31" x2="434.00" y2="765.31" stroke="#c4c6c8" stroke-width="1.0" />
<line x1="384.60" y1="768.22" x2="434.00" y2="768.22" stroke="#c4c6c8" stroke-width="1.0" />
<line x1="384.60" y1="771.12" x2="434.00" y2="771.12" stroke="#c4c6c8" stroke-width="1.0" />
<line x1="384.60" y1="774.03" x2="434.00" y2="774.03" stroke="#c4c6c8" stroke-width="1.0" />
<line x1="384.60" y1="776.93" x2="434.00" y2="776.93" stroke="#c4c6c8" stroke-width="1.0" />
<line x1="384.60" y1="779.83" x2="434.00" y2="779.83" stroke="#c4c6c8" stroke-width="1.0" />
<line x1="384.60" y1="782.74" x2="434.00" y2="782.74" stroke="#c4c6c8" stroke-width="1.0" />
<line x1="384.60" y1="785.64" x2="434.00" y2="785.64" stroke="#c4c6c8" stroke-width="1.0" />
<line x1="384.60" y1="788.55" x2="434.00" y2="788.55" stroke="#c4c6c8" stroke-width="1.0" />
<line x1="384.60" y1="791.45" x2="434.00" y2="791.45" stroke="#c4c6c8" stroke-width="1.0" />
<line x1="384.60" y1="794.36" x2="434.00" y2="794.36" stroke="#c4c6c8" stroke-width="1.0" />
<line x1="384.60" y1="797.26" x2="434.00" y2="797.26" stroke="#c4c6c8" stroke-width="1.0" />
<line x1="384.60" y1="800.17" x2="434.00" y2="800.17" stroke="#c4c6c8" stroke-width="1.0" />
<line x1="384.60" y1="803.07" x2="434.00" y2="803.07" stroke="#c4c6c8" stroke-width="1.0" />
<line x1="384.60" y1="805.97" x2="434.00" y2="805.97" stroke="#c4c6c8" stroke-width="1.0" />
<line x1="384.60" y1="808.88" x2="434.00" y2="808.88" stroke="#c4c6c8" stroke-width="1.0" />
<line x1="384.60" y1="811.78" x2="434.00" y2="811.78" stroke="#c4c6c8" stroke-width="1.0" />
<line x1="384.60" y1="814.69" x2="434.00" y2="814.69" stroke="#c4c6c8" stroke-width="1.0" />
<line x1="384.60" y1="817.59" x2="434.00" y2="817.59" stroke="#c4c6c8" stroke-width="1.0" />
<line x1="384.60" y1="820.50" x2="434.00" y2="820.50" stroke="#c4c6c8" stroke-width="1.0" />
<line x1="389.00" y1="623.00" x2="389.00" y2="823.40" stroke="#d0d2d4" stroke-width="0.8" />
<line x1="398.80" y1="623.00" x2="398.80" y2="823.40" stroke="#d0d2d4" stroke-width="0.8" />
<line x1="410.10" y1="623.00" x2="410.10" y2="823.40" stroke="#d0d2d4" stroke-width="0.8" />
<line x1="413.50" y1="623.00" x2="413.50" y2="823.40" stroke="#d0d2d4" stroke-width="0.8" />
<line x1="416.80" y1="623.00" x2="416.80" y2="823.40" stroke="#d0d2d4" stroke-width="0.8" />
<line x1="422.90" y1="623.00" x2="422.90" y2="823.40" stroke="#d0d2d4" stroke-width="0.8" />
<text transform="translate(386.20,625.50) scale(1,1.3)" font-size="1.9" fill="#ffffff" text-anchor="start" font-weight="bold">69</text>
<text transform="translate(389.80,625.50) scale(1,1.3)" font-size="1.8" fill="#ffffff" text-anchor="start" font-weight="bold" textLength="7.2" lengthAdjust="spacingAndGlyphs">GB/T297-38</text>
<text transform="translate(399.60,625.50) scale(1,1.3)" font-size="1.9" fill="#ffffff" text-anchor="start" font-weight="bold">倒档齿轮</text>
<text transform="translate(411.30,625.50) scale(1,1.3)" font-size="1.8" fill="#ffffff" text-anchor="start" >8</text>
<text transform="translate(386.20,628.40) scale(1,1.3)" font-size="1.9" fill="#ffffff" text-anchor="start" font-weight="bold">68</text>
<text transform="translate(389.80,628.40) scale(1,1.3)" font-size="1.8" fill="#ffffff" text-anchor="start" font-weight="bold" textLength="5.5" lengthAdjust="spacingAndGlyphs">GB/T93-39</text>
<text transform="translate(399.60,628.40) scale(1,1.3)" font-size="1.9" fill="#ffffff" text-anchor="start" font-weight="bold">通气塞</text>
<text transform="translate(411.30,628.40) scale(1,1.3)" font-size="1.8" fill="#ffffff" text-anchor="start" >2</text>
<text transform="translate(417.40,628.40) scale(1,1.3)" font-size="1.8" fill="#ffffff" text-anchor="start" font-weight="bold">40Cr</text>
<text transform="translate(386.20,631.31) scale(1,1.3)" font-size="1.9" fill="#ffffff" text-anchor="start" font-weight="bold">67</text>
<text transform="translate(389.80,631.31) scale(1,1.3)" font-size="1.8" fill="#ffffff" text-anchor="start" font-weight="bold" textLength="8.6" lengthAdjust="spacingAndGlyphs">GB/T297-13</text>
<text transform="translate(399.60,631.31) scale(1,1.3)" font-size="1.9" fill="#ffffff" text-anchor="start" font-weight="bold">通气塞</text>
<text transform="translate(411.30,631.31) scale(1,1.3)" font-size="1.8" fill="#ffffff" text-anchor="start" >8</text>
<text transform="translate(417.40,631.31) scale(1,1.3)" font-size="1.8" fill="#ffffff" text-anchor="start" font-weight="bold">65Mn</text>
<text transform="translate(386.20,634.21) scale(1,1.3)" font-size="1.9" fill="#ffffff" text-anchor="start" font-weight="bold">66</text>
<text transform="translate(389.80,634.21) scale(1,1.3)" font-size="1.8" fill="#ffffff" text-anchor="start" font-weight="bold" textLength="7.5" lengthAdjust="spacingAndGlyphs">THDDH-17-00-15</text>
<text transform="translate(399.60,634.21) scale(1,1.3)" font-size="1.9" fill="#ffffff" text-anchor="start" font-weight="bold">联体齿轮</text>
<text transform="translate(411.30,634.21) scale(1,1.3)" font-size="1.8" fill="#ffffff" text-anchor="start" >6</text>
<text transform="translate(417.40,634.21) scale(1,1.3)" font-size="1.8" fill="#ffffff" text-anchor="start" font-weight="bold">Q235</text>
<text transform="translate(386.20,637.12) scale(1,1.3)" font-size="1.9" fill="#ffffff" text-anchor="start" font-weight="bold">65</text>
<text transform="translate(389.80,637.12) scale(1,1.3)" font-size="1.8" fill="#ffffff" text-anchor="start" font-weight="bold" textLength="7.9" lengthAdjust="spacingAndGlyphs">GB/T93-11</text>
<text transform="translate(399.60,637.12) scale(1,1.3)" font-size="1.9" fill="#ffffff" text-anchor="start" font-weight="bold">轴承盖</text>
<text transform="translate(411.30,637.12) scale(1,1.3)" font-size="1.8" fill="#ffffff" text-anchor="start" >2</text>
<text transform="translate(417.40,637.12) scale(1,1.3)" font-size="1.8" fill="#ffffff" text-anchor="start" font-weight="bold">Q235</text>
<text transform="translate(386.20,640.02) scale(1,1.3)" font-size="1.9" fill="#ffffff" text-anchor="start" font-weight="bold">64</text>
<text transform="translate(389.80,640.02) scale(1,1.3)" font-size="1.8" fill="#ffffff" text-anchor="start" font-weight="bold" textLength="7.3" lengthAdjust="spacingAndGlyphs">GB/T894-31</text>
<text transform="translate(399.60,640.02) scale(1,1.3)" font-size="1.9" fill="#ffffff" text-anchor="start" font-weight="bold">输出轴</text>
<text transform="translate(411.30,640.02) scale(1,1.3)" font-size="1.8" fill="#ffffff" text-anchor="start" >6</text>
<text transform="translate(417.40,640.02) scale(1,1.3)" font-size="1.8" fill="#ffffff" text-anchor="start" font-weight="bold">65Mn</text>
<text transform="translate(386.20,642.92) scale(1,1.3)" font-size="1.9" fill="#ffffff" text-anchor="start" font-weight="bold">63</text>
<text transform="translate(389.80,642.92) scale(1,1.3)" font-size="1.8" fill="#ffffff" text-anchor="start" font-weight="bold" textLength="8.2" lengthAdjust="spacingAndGlyphs">THDDH-17-02-09</text>
<text transform="translate(399.60,642.92) scale(1,1.3)" font-size="1.9" fill="#ffffff" text-anchor="start" font-weight="bold">套筒</text>
<text transform="translate(411.30,642.92) scale(1,1.3)" font-size="1.8" fill="#ffffff" text-anchor="start" >1</text>
<text transform="translate(417.40,642.92) scale(1,1.3)" font-size="1.8" fill="#ffffff" text-anchor="start" font-weight="bold">HT200</text>
<text transform="translate(386.20,645.83) scale(1,1.3)" font-size="1.9" fill="#ffffff" text-anchor="start" font-weight="bold">62</text>
<text transform="translate(389.80,645.83) scale(1,1.3)" font-size="1.8" fill="#ffffff" text-anchor="start" font-weight="bold" textLength="6.3" lengthAdjust="spacingAndGlyphs">THDDH-17-02-14</text>
<text transform="translate(399.60,645.83) scale(1,1.3)" font-size="1.9" fill="#ffffff" text-anchor="start" font-weight="bold">滚针轴承</text>
<text transform="translate(411.30,645.83) scale(1,1.3)" font-size="1.8" fill="#ffffff" text-anchor="start" >2</text>
<text transform="translate(417.40,645.83) scale(1,1.3)" font-size="1.8" fill="#ffffff" text-anchor="start" font-weight="bold">65Mn</text>
<text transform="translate(386.20,648.73) scale(1,1.3)" font-size="1.9" fill="#ffffff" text-anchor="start" font-weight="bold">61</text>
<text transform="translate(389.80,648.73) scale(1,1.3)" font-size="1.8" fill="#ffffff" text-anchor="start" font-weight="bold" textLength="6.6" lengthAdjust="spacingAndGlyphs">THDDH-17-01-37</text>
<text transform="translate(399.60,648.73) scale(1,1.3)" font-size="1.9" fill="#ffffff" text-anchor="start" font-weight="bold">同步器</text>
<text transform="translate(411.30,648.73) scale(1,1.3)" font-size="1.8" fill="#ffffff" text-anchor="start" >2</text>
<text transform="translate(417.40,648.73) scale(1,1.3)" font-size="1.8" fill="#ffffff" text-anchor="start" font-weight="bold">20CrMnTi</text>
<text transform="translate(386.20,651.64) scale(1,1.3)" font-size="1.9" fill="#ffffff" text-anchor="start" font-weight="bold">60</text>
<text transform="translate(389.80,651.64) scale(1,1.3)" font-size="1.8" fill="#ffffff" text-anchor="start" font-weight="bold" textLength="8.6" lengthAdjust="spacingAndGlyphs">GB/T5783-18</text>
<text transform="translate(399.60,651.64) scale(1,1.3)" font-size="1.9" fill="#ffffff" text-anchor="start" font-weight="bold">箱盖</text>
<text transform="translate(411.30,651.64) scale(1,1.3)" font-size="1.8" fill="#ffffff" text-anchor="start" >4</text>
<text transform="translate(417.40,651.64) scale(1,1.3)" font-size="1.8" fill="#ffffff" text-anchor="start" font-weight="bold">40Cr</text>
<text transform="translate(386.20,654.54) scale(1,1.3)" font-size="1.9" fill="#ffffff" text-anchor="start" font-weight="bold">59</text>
<text transform="translate(389.80,654.54) scale(1,1.3)" font-size="1.8" fill="#ffffff" text-anchor="start" font-weight="bold" textLength="7.5" lengthAdjust="spacingAndGlyphs">GB/T93-14</text>
<text transform="translate(399.60,654.54) scale(1,1.3)" font-size="1.9" fill="#ffffff" text-anchor="start" font-weight="bold">防尘罩</text>
<text transform="translate(411.30,654.54) scale(1,1.3)" font-size="1.8" fill="#ffffff" text-anchor="start" >2</text>
<text transform="translate(417.40,654.54) scale(1,1.3)" font-size="1.8" fill="#ffffff" text-anchor="start" font-weight="bold">45</text>
<text transform="translate(386.20,657.45) scale(1,1.3)" font-size="1.9" fill="#ffffff" text-anchor="start" font-weight="bold">58</text>
<text transform="translate(389.80,657.45) scale(1,1.3)" font-size="1.8" fill="#ffffff" text-anchor="start" font-weight="bold" textLength="8.1" lengthAdjust="spacingAndGlyphs">GB/T93-31</text>
<text transform="translate(399.60,657.45) scale(1,1.3)" font-size="1.9" fill="#ffffff" text-anchor="start" font-weight="bold">通气塞</text>
<text transform="translate(411.30,657.45) scale(1,1.3)" font-size="1.8" fill="#ffffff" text-anchor="start" >1</text>
<text transform="translate(417.40,657.45) scale(1,1.3)" font-size="1.8" fill="#ffffff" text-anchor="start" font-weight="bold">20CrMnTi</text>
<text transform="translate(386.20,660.35) scale(1,1.3)" font-size="1.9" fill="#ffffff" text-anchor="start" font-weight="bold">57</text>
<text transform="translate(389.80,660.35) scale(1,1.3)" font-size="1.8" fill="#ffffff" text-anchor="start" font-weight="bold" textLength="8.3" lengthAdjust="spacingAndGlyphs">GB/T93-27</text>
<text transform="translate(399.60,660.35) scale(1,1.3)" font-size="1.9" fill="#ffffff" text-anchor="start" font-weight="bold">垫圈</text>
<text transform="translate(411.30,660.35) scale(1,1.3)" font-size="1.8" fill="#ffffff" text-anchor="start" >2</text>
<text transform="translate(417.40,660.35) scale(1,1.3)" font-size="1.8" fill="#ffffff" text-anchor="start" font-weight="bold">65Mn</text>
<text transform="translate(386.20,663.25) scale(1,1.3)" font-size="1.9" fill="#ffffff" text-anchor="start" font-weight="bold">56</text>
<text transform="translate(389.80,663.25) scale(1,1.3)" font-size="1.8" fill="#ffffff" text-anchor="start" font-weight="bold" textLength="5.6" lengthAdjust="spacingAndGlyphs">THDDH-17-01-08</text>
<text transform="translate(399.60,663.25) scale(1,1.3)" font-size="1.9" fill="#ffffff" text-anchor="start" font-weight="bold">轴承盖</text>
<text transform="translate(411.30,663.25) scale(1,1.3)" font-size="1.8" fill="#ffffff" text-anchor="start" >6</text>
<text transform="translate(417.40,663.25) scale(1,1.3)" font-size="1.8" fill="#ffffff" text-anchor="start" font-weight="bold">ZL104</text>
<text transform="translate(386.20,666.16) scale(1,1.3)" font-size="1.9" fill="#ffffff" text-anchor="start" font-weight="bold">55</text>
<text transform="translate(389.80,666.16) scale(1,1.3)" font-size="1.8" fill="#ffffff" text-anchor="start" font-weight="bold" textLength="8.2" lengthAdjust="spacingAndGlyphs">GB/T1096-36</text>
<text transform="translate(399.60,666.16) scale(1,1.3)" font-size="1.9" fill="#ffffff" text-anchor="start" font-weight="bold">防尘罩</text>
<text transform="translate(411.30,666.16) scale(1,1.3)" font-size="1.8" fill="#ffffff" text-anchor="start" >2</text>
<text transform="translate(417.40,666.16) scale(1,1.3)" font-size="1.8" fill="#ffffff" text-anchor="start" font-weight="bold">Q235</text>
<text transform="translate(386.20,669.06) scale(1,1.3)" font-size="1.9" fill="#ffffff" text-anchor="start" font-weight="bold">54</text>
<text transform="translate(389.80,669.06) scale(1,1.3)" font-size="1.8" fill="#ffffff" text-anchor="start" font-weight="bold" textLength="5.7" lengthAdjust="spacingAndGlyphs">GB/T894-01</text>
<text transform="translate(399.60,669.06) scale(1,1.3)" font-size="1.9" fill="#ffffff" text-anchor="start" font-weight="bold">轴承盖</text>
<text transform="translate(411.30,669.06) scale(1,1.3)" font-size="1.8" fill="#ffffff" text-anchor="start" >2</text>
<text transform="translate(417.40,669.06) scale(1,1.3)" font-size="1.8" fill="#ffffff" text-anchor="start" font-weight="bold">65Mn</text>
<text transform="translate(386.20,671.97) scale(1,1.3)" font-size="1.9" fill="#ffffff" text-anchor="start" font-weight="bold">53</text>
<text transform="translate(389.80,671.97) scale(1,1.3)" font-size="1.8" fill="#ffffff" text-anchor="start" font-weight="bold" textLength="6.3" lengthAdjust="spacingAndGlyphs">GB/T894-40</text>
<text transform="translate(399.60,671.97) scale(1,1.3)" font-size="1.9" fill="#ffffff" text-anchor="start" font-weight="bold">轴承盖</text>
<text transform="translate(411.30,671.97) scale(1,1.3)" font-size="1.8" fill="#ffffff" text-anchor="start" >4</text>
<text transform="translate(417.40,671.97) scale(1,1.3)" font-size="1.8" fill="#ffffff" text-anchor="start" font-weight="bold">20CrMnTi</text>
<text transform="translate(386.20,674.87) scale(1,1.3)" font-size="1.9" fill="#ffffff" text-anchor="start" font-weight="bold">52</text>
<text transform="translate(389.80,674.87) scale(1,1.3)" font-size="1.8" fill="#ffffff" text-anchor="start" font-weight="bold" textLength="8.3" lengthAdjust="spacingAndGlyphs">GB/T1096-09</text>
<text transform="translate(399.60,674.87) scale(1,1.3)" font-size="1.9" fill="#ffffff" text-anchor="start" font-weight="bold">输出轴</text>
<text transform="translate(411.30,674.87) scale(1,1.3)" font-size="1.8" fill="#ffffff" text-anchor="start" >6</text>
<text transform="translate(417.40,674.87) scale(1,1.3)" font-size="1.8" fill="#ffffff" text-anchor="start" font-weight="bold">橡胶</text>
<text transform="translate(386.20,677.78) scale(1,1.3)" font-size="1.9" fill="#ffffff" text-anchor="start" font-weight="bold">51</text>
<text transform="translate(389.80,677.78) scale(1,1.3)" font-size="1.8" fill="#ffffff" text-anchor="start" font-weight="bold" textLength="7.6" lengthAdjust="spacingAndGlyphs">THDDH-17-01-39</text>
<text transform="translate(399.60,677.78) scale(1,1.3)" font-size="1.9" fill="#ffffff" text-anchor="start" font-weight="bold">套筒</text>
<text transform="translate(411.30,677.78) scale(1,1.3)" font-size="1.8" fill="#ffffff" text-anchor="start" >2</text>
<text transform="translate(417.40,677.78) scale(1,1.3)" font-size="1.8" fill="#ffffff" text-anchor="start" font-weight="bold">65Mn</text>
<text transform="translate(386.20,680.68) scale(1,1.3)" font-size="1.9" fill="#ffffff" text-anchor="start" font-weight="bold">50</text>
<text transform="translate(389.80,680.68) scale(1,1.3)" font-size="1.8" fill="#ffffff" text-anchor="start" font-weight="bold" textLength="6.9" lengthAdjust="spacingAndGlyphs">GB/T297-20</text>
<text transform="translate(399.60,680.68) scale(1,1.3)" font-size="1.9" fill="#ffffff" text-anchor="start" font-weight="bold">变速杆</text>
<text transform="translate(411.30,680.68) scale(1,1.3)" font-size="1.8" fill="#ffffff" text-anchor="start" >2</text>
<text transform="translate(417.40,680.68) scale(1,1.3)" font-size="1.8" fill="#ffffff" text-anchor="start" font-weight="bold">40Cr</text>
<text transform="translate(386.20,683.58) scale(1,1.3)" font-size="1.9" fill="#ffffff" text-anchor="start" font-weight="bold">49</text>
<text transform="translate(389.80,683.58) scale(1,1.3)" font-size="1.8" fill="#ffffff" text-anchor="start" font-weight="bold" textLength="7.9" lengthAdjust="spacingAndGlyphs">GB/T1096-01</text>
<text transform="translate(399.60,683.58) scale(1,1.3)" font-size="1.9" fill="#ffffff" text-anchor="start" font-weight="bold">油封</text>
<text transform="translate(411.30,683.58) scale(1,1.3)" font-size="1.8" fill="#ffffff" text-anchor="start" >1</text>
<text transform="translate(417.40,683.58) scale(1,1.3)" font-size="1.8" fill="#ffffff" text-anchor="start" font-weight="bold">65Mn</text>
<text transform="translate(386.20,686.49) scale(1,1.3)" font-size="1.9" fill="#ffffff" text-anchor="start" font-weight="bold">48</text>
<text transform="translate(389.80,686.49) scale(1,1.3)" font-size="1.8" fill="#ffffff" text-anchor="start" font-weight="bold" textLength="7.5" lengthAdjust="spacingAndGlyphs">THDDH-17-00-04</text>
<text transform="translate(399.60,686.49) scale(1,1.3)" font-size="1.9" fill="#ffffff" text-anchor="start" font-weight="bold">中间轴</text>
<text transform="translate(411.30,686.49) scale(1,1.3)" font-size="1.8" fill="#ffffff" text-anchor="start" >8</text>
<text transform="translate(417.40,686.49) scale(1,1.3)" font-size="1.8" fill="#ffffff" text-anchor="start" font-weight="bold">20CrMnTi</text>
<text transform="translate(386.20,689.39) scale(1,1.3)" font-size="1.9" fill="#ffffff" text-anchor="start" font-weight="bold">47</text>
<text transform="translate(389.80,689.39) scale(1,1.3)" font-size="1.8" fill="#ffffff" text-anchor="start" font-weight="bold" textLength="7.7" lengthAdjust="spacingAndGlyphs">GB/T1096-39</text>
<text transform="translate(399.60,689.39) scale(1,1.3)" font-size="1.9" fill="#ffffff" text-anchor="start" font-weight="bold">箱体</text>
<text transform="translate(411.30,689.39) scale(1,1.3)" font-size="1.8" fill="#ffffff" text-anchor="start" >1</text>
<text transform="translate(417.40,689.39) scale(1,1.3)" font-size="1.8" fill="#ffffff" text-anchor="start" font-weight="bold">ZL104</text>
<text transform="translate(386.20,692.30) scale(1,1.3)" font-size="1.9" fill="#ffffff" text-anchor="start" font-weight="bold">46</text>
<text transform="translate(389.80,692.30) scale(1,1.3)" font-size="1.8" fill="#ffffff" text-anchor="start" font-weight="bold" textLength="8.5" lengthAdjust="spacingAndGlyphs">GB/T5783-02</text>
<text transform="translate(399.60,692.30) scale(1,1.3)" font-size="1.9" fill="#ffffff" text-anchor="start" font-weight="bold">变速杆</text>
<text transform="translate(411.30,692.30) scale(1,1.3)" font-size="1.8" fill="#ffffff" text-anchor="start" >8</text>
<text transform="translate(417.40,692.30) scale(1,1.3)" font-size="1.8" fill="#ffffff" text-anchor="start" font-weight="bold">GCr15</text>
<text transform="translate(386.20,695.20) scale(1,1.3)" font-size="1.9" fill="#ffffff" text-anchor="start" font-weight="bold">45</text>
<text transform="translate(389.80,695.20) scale(1,1.3)" font-size="1.8" fill="#ffffff" text-anchor="start" font-weight="bold" textLength="6.6" lengthAdjust="spacingAndGlyphs">GB/T1096-12</text>
<text transform="translate(399.60,695.20) scale(1,1.3)" font-size="1.9" fill="#ffffff" text-anchor="start" font-weight="bold">油封</text>
<text transform="translate(411.30,695.20) scale(1,1.3)" font-size="1.8" fill="#ffffff" text-anchor="start" >4</text>
<text transform="translate(417.40,695.20) scale(1,1.3)" font-size="1.8" fill="#ffffff" text-anchor="start" font-weight="bold">ZL104</text>
<text transform="translate(386.20,698.11) scale(1,1.3)" font-size="1.9" fill="#ffffff" text-anchor="start" font-weight="bold">44</text>
<text transform="translate(389.80,698.11) scale(1,1.3)" font-size="1.8" fill="#ffffff" text-anchor="start" font-weight="bold" textLength="7.9" lengthAdjust="spacingAndGlyphs">GB/T894-20</text>
<text transform="translate(399.60,698.11) scale(1,1.3)" font-size="1.9" fill="#ffffff" text-anchor="start" font-weight="bold">套筒</text>
<text transform="translate(411.30,698.11) scale(1,1.3)" font-size="1.8" fill="#ffffff" text-anchor="start" >1</text>
<text transform="translate(417.40,698.11) scale(1,1.3)" font-size="1.8" fill="#ffffff" text-anchor="start" font-weight="bold">ZL104</text>
<text transform="translate(386.20,701.01) scale(1,1.3)" font-size="1.9" fill="#ffffff" text-anchor="start" font-weight="bold">43</text>
<text transform="translate(389.80,701.01) scale(1,1.3)" font-size="1.8" fill="#ffffff" text-anchor="start" font-weight="bold" textLength="7.1" lengthAdjust="spacingAndGlyphs">THDDH-17-00-20</text>
<text transform="translate(399.60,701.01) scale(1,1.3)" font-size="1.9" fill="#ffffff" text-anchor="start" font-weight="bold">防尘罩</text>
<text transform="translate(411.30,701.01) scale(1,1.3)" font-size="1.8" fill="#ffffff" text-anchor="start" >2</text>
<text transform="translate(417.40,701.01) scale(1,1.3)" font-size="1.8" fill="#ffffff" text-anchor="start" font-weight="bold">20CrMnTi</text>
<text transform="translate(386.20,703.92) scale(1,1.3)" font-size="1.9" fill="#ffffff" text-anchor="start" font-weight="bold">42</text>
<text transform="translate(389.80,703.92) scale(1,1.3)" font-size="1.8" fill="#ffffff" text-anchor="start" font-weight="bold" textLength="7.5" lengthAdjust="spacingAndGlyphs">THDDH-17-00-28</text>
<text transform="translate(399.60,703.92) scale(1,1.3)" font-size="1.9" fill="#ffffff" text-anchor="start" font-weight="bold">套筒</text>
<text transform="translate(411.30,703.92) scale(1,1.3)" font-size="1.8" fill="#ffffff" text-anchor="start" >1</text>
<text transform="translate(417.40,703.92) scale(1,1.3)" font-size="1.8" fill="#ffffff" text-anchor="start" font-weight="bold">ZL104</text>
<text transform="translate(386.20,706.82) scale(1,1.3)" font-size="1.9" fill="#ffffff" text-anchor="start" font-weight="bold">41</text>
<text transform="translate(389.80,706.82) scale(1,1.3)" font-size="1.8" fill="#ffffff" text-anchor="start" font-weight="bold" textLength="7.6" lengthAdjust="spacingAndGlyphs">GB/T1096-22</text>
<text transform="translate(399.60,706.82) scale(1,1.3)" font-size="1.9" fill="#ffffff" text-anchor="start" font-weight="bold">弹簧</text>
<text transform="translate(411.30,706.82) scale(1,1.3)" font-size="1.8" fill="#ffffff" text-anchor="start" >8</text>
<text transform="translate(417.40,706.82) scale(1,1.3)" font-size="1.8" fill="#ffffff" text-anchor="start" font-weight="bold">HT200</text>
<text transform="translate(386.20,709.72) scale(1,1.3)" font-size="1.9" fill="#ffffff" text-anchor="start" font-weight="bold">40</text>
<text transform="translate(389.80,709.72) scale(1,1.3)" font-size="1.8" fill="#ffffff" text-anchor="start" font-weight="bold" textLength="7.8" lengthAdjust="spacingAndGlyphs">GB/T93-22</text>
<text transform="translate(399.60,709.72) scale(1,1.3)" font-size="1.9" fill="#ffffff" text-anchor="start" font-weight="bold">定位销</text>
<text transform="translate(411.30,709.72) scale(1,1.3)" font-size="1.8" fill="#ffffff" text-anchor="start" >8</text>
<text transform="translate(417.40,709.72) scale(1,1.3)" font-size="1.8" fill="#ffffff" text-anchor="start" font-weight="bold">GCr15</text>
<text transform="translate(386.20,712.63) scale(1,1.3)" font-size="1.9" fill="#ffffff" text-anchor="start" font-weight="bold">39</text>
<text transform="translate(389.80,712.63) scale(1,1.3)" font-size="1.8" fill="#ffffff" text-anchor="start" font-weight="bold" textLength="5.6" lengthAdjust="spacingAndGlyphs">GB/T297-08</text>
<text transform="translate(399.60,712.63) scale(1,1.3)" font-size="1.9" fill="#ffffff" text-anchor="start" font-weight="bold">拨叉轴</text>
<text transform="translate(411.30,712.63) scale(1,1.3)" font-size="1.8" fill="#ffffff" text-anchor="start" >4</text>
<text transform="translate(417.40,712.63) scale(1,1.3)" font-size="1.8" fill="#ffffff" text-anchor="start" font-weight="bold">ZL104</text>
<text transform="translate(386.20,715.53) scale(1,1.3)" font-size="1.9" fill="#ffffff" text-anchor="start" font-weight="bold">38</text>
<text transform="translate(389.80,715.53) scale(1,1.3)" font-size="1.8" fill="#ffffff" text-anchor="start" font-weight="bold" textLength="6.6" lengthAdjust="spacingAndGlyphs">THDDH-17-00-18</text>
<text transform="translate(399.60,715.53) scale(1,1.3)" font-size="1.9" fill="#ffffff" text-anchor="start" font-weight="bold">齿轮</text>
<text transform="translate(411.30,715.53) scale(1,1.3)" font-size="1.8" fill="#ffffff" text-anchor="start" >4</text>
<text transform="translate(417.40,715.53) scale(1,1.3)" font-size="1.8" fill="#ffffff" text-anchor="start" font-weight="bold">ZL104</text>
<text transform="translate(386.20,718.44) scale(1,1.3)" font-size="1.9" fill="#ffffff" text-anchor="start" font-weight="bold">37</text>
<text transform="translate(389.80,718.44) scale(1,1.3)" font-size="1.8" fill="#ffffff" text-anchor="start" font-weight="bold" textLength="6.4" lengthAdjust="spacingAndGlyphs">THDDH-17-00-27</text>
<text transform="translate(399.60,718.44) scale(1,1.3)" font-size="1.9" fill="#ffffff" text-anchor="start" font-weight="bold">防尘罩</text>
<text transform="translate(411.30,718.44) scale(1,1.3)" font-size="1.8" fill="#ffffff" text-anchor="start" >8</text>
<text transform="translate(417.40,718.44) scale(1,1.3)" font-size="1.8" fill="#ffffff" text-anchor="start" font-weight="bold">20CrMnTi</text>
<text transform="translate(386.20,721.34) scale(1,1.3)" font-size="1.9" fill="#ffffff" text-anchor="start" font-weight="bold">36</text>
<text transform="translate(389.80,721.34) scale(1,1.3)" font-size="1.8" fill="#ffffff" text-anchor="start" font-weight="bold" textLength="6.8" lengthAdjust="spacingAndGlyphs">THDDH-17-01-19</text>
<text transform="translate(399.60,721.34) scale(1,1.3)" font-size="1.9" fill="#ffffff" text-anchor="start" font-weight="bold">同步器</text>
<text transform="translate(411.30,721.34) scale(1,1.3)" font-size="1.8" fill="#ffffff" text-anchor="start" >1</text>
<text transform="translate(417.40,721.34) scale(1,1.3)" font-size="1.8" fill="#ffffff" text-anchor="start" font-weight="bold">65Mn</text>
<text transform="translate(386.20,724.25) scale(1,1.3)" font-size="1.9" fill="#ffffff" text-anchor="start" font-weight="bold">35</text>
<text transform="translate(389.80,724.25) scale(1,1.3)" font-size="1.8" fill="#ffffff" text-anchor="start" font-weight="bold" textLength="5.5" lengthAdjust="spacingAndGlyphs">THDDH-17-00-13</text>
<text transform="translate(399.60,724.25) scale(1,1.3)" font-size="1.9" fill="#ffffff" text-anchor="start" font-weight="bold">衬垫</text>
<text transform="translate(411.30,724.25) scale(1,1.3)" font-size="1.8" fill="#ffffff" text-anchor="start" >6</text>
<text transform="translate(417.40,724.25) scale(1,1.3)" font-size="1.8" fill="#ffffff" text-anchor="start" font-weight="bold">40Cr</text>
<text transform="translate(386.20,727.15) scale(1,1.3)" font-size="1.9" fill="#ffffff" text-anchor="start" font-weight="bold">34</text>
<text transform="translate(389.80,727.15) scale(1,1.3)" font-size="1.8" fill="#ffffff" text-anchor="start" font-weight="bold" textLength="7.8" lengthAdjust="spacingAndGlyphs">GB/T297-03</text>
<text transform="translate(399.60,727.15) scale(1,1.3)" font-size="1.9" fill="#ffffff" text-anchor="start" font-weight="bold">联体齿轮</text>
<text transform="translate(411.30,727.15) scale(1,1.3)" font-size="1.8" fill="#ffffff" text-anchor="start" >2</text>
<text transform="translate(417.40,727.15) scale(1,1.3)" font-size="1.8" fill="#ffffff" text-anchor="start" font-weight="bold">40Cr</text>
<text transform="translate(386.20,730.05) scale(1,1.3)" font-size="1.9" fill="#ffffff" text-anchor="start" font-weight="bold">33</text>
<text transform="translate(389.80,730.05) scale(1,1.3)" font-size="1.8" fill="#ffffff" text-anchor="start" font-weight="bold" textLength="8.2" lengthAdjust="spacingAndGlyphs">GB/T1096-15</text>
<text transform="translate(399.60,730.05) scale(1,1.3)" font-size="1.9" fill="#ffffff" text-anchor="start" font-weight="bold">球头</text>
<text transform="translate(411.30,730.05) scale(1,1.3)" font-size="1.8" fill="#ffffff" text-anchor="start" >1</text>
<text transform="translate(417.40,730.05) scale(1,1.3)" font-size="1.8" fill="#ffffff" text-anchor="start" font-weight="bold">08F</text>
<text transform="translate(386.20,732.96) scale(1,1.3)" font-size="1.9" fill="#ffffff" text-anchor="start" font-weight="bold">32</text>
<text transform="translate(389.80,732.96) scale(1,1.3)" font-size="1.8" fill="#ffffff" text-anchor="start" font-weight="bold" textLength="8.3" lengthAdjust="spacingAndGlyphs">GB/T5783-03</text>
<text transform="translate(399.60,732.96) scale(1,1.3)" font-size="1.9" fill="#ffffff" text-anchor="start" font-weight="bold">衬垫</text>
<text transform="translate(411.30,732.96) scale(1,1.3)" font-size="1.8" fill="#ffffff" text-anchor="start" >2</text>
<text transform="translate(417.40,732.96) scale(1,1.3)" font-size="1.8" fill="#ffffff" text-anchor="start" font-weight="bold">65Mn</text>
<text transform="translate(386.20,735.86) scale(1,1.3)" font-size="1.9" fill="#ffffff" text-anchor="start" font-weight="bold">31</text>
<text transform="translate(389.80,735.86) scale(1,1.3)" font-size="1.8" fill="#ffffff" text-anchor="start" font-weight="bold" textLength="7.0" lengthAdjust="spacingAndGlyphs">GB/T5783-01</text>
<text transform="translate(399.60,735.86) scale(1,1.3)" font-size="1.9" fill="#ffffff" text-anchor="start" font-weight="bold">花键轴</text>
<text transform="translate(411.30,735.86) scale(1,1.3)" font-size="1.8" fill="#ffffff" text-anchor="start" >1</text>
<text transform="translate(417.40,735.86) scale(1,1.3)" font-size="1.8" fill="#ffffff" text-anchor="start" font-weight="bold">40Cr</text>
<text transform="translate(386.20,738.77) scale(1,1.3)" font-size="1.9" fill="#ffffff" text-anchor="start" font-weight="bold">30</text>
<text transform="translate(389.80,738.77) scale(1,1.3)" font-size="1.8" fill="#ffffff" text-anchor="start" font-weight="bold" textLength="7.6" lengthAdjust="spacingAndGlyphs">GB/T894-16</text>
<text transform="translate(399.60,738.77) scale(1,1.3)" font-size="1.9" fill="#ffffff" text-anchor="start" font-weight="bold">联体齿轮</text>
<text transform="translate(411.30,738.77) scale(1,1.3)" font-size="1.8" fill="#ffffff" text-anchor="start" >6</text>
<text transform="translate(417.40,738.77) scale(1,1.3)" font-size="1.8" fill="#ffffff" text-anchor="start" font-weight="bold">Q235</text>
<text transform="translate(386.20,741.67) scale(1,1.3)" font-size="1.9" fill="#ffffff" text-anchor="start" font-weight="bold">29</text>
<text transform="translate(389.80,741.67) scale(1,1.3)" font-size="1.8" fill="#ffffff" text-anchor="start" font-weight="bold" textLength="5.9" lengthAdjust="spacingAndGlyphs">GB/T93-22</text>
<text transform="translate(399.60,741.67) scale(1,1.3)" font-size="1.9" fill="#ffffff" text-anchor="start" font-weight="bold">通气塞</text>
<text transform="translate(411.30,741.67) scale(1,1.3)" font-size="1.8" fill="#ffffff" text-anchor="start" >1</text>
<text transform="translate(417.40,741.67) scale(1,1.3)" font-size="1.8" fill="#ffffff" text-anchor="start" font-weight="bold">20CrMnTi</text>
<text transform="translate(386.20,744.58) scale(1,1.3)" font-size="1.9" fill="#ffffff" text-anchor="start" font-weight="bold">28</text>
<text transform="translate(389.80,744.58) scale(1,1.3)" font-size="1.8" fill="#ffffff" text-anchor="start" font-weight="bold" textLength="5.9" lengthAdjust="spacingAndGlyphs">GB/T297-13</text>
<text transform="translate(399.60,744.58) scale(1,1.3)" font-size="1.9" fill="#ffffff" text-anchor="start" font-weight="bold">花键轴</text>
<text transform="translate(411.30,744.58) scale(1,1.3)" font-size="1.8" fill="#ffffff" text-anchor="start" >1</text>
<text transform="translate(417.40,744.58) scale(1,1.3)" font-size="1.8" fill="#ffffff" text-anchor="start" font-weight="bold">08F</text>
<text transform="translate(386.20,747.48) scale(1,1.3)" font-size="1.9" fill="#ffffff" text-anchor="start" font-weight="bold">27</text>
<text transform="translate(389.80,747.48) scale(1,1.3)" font-size="1.8" fill="#ffffff" text-anchor="start" font-weight="bold" textLength="8.1" lengthAdjust="spacingAndGlyphs">GB/T894-09</text>
<text transform="translate(399.60,747.48) scale(1,1.3)" font-size="1.9" fill="#ffffff" text-anchor="start" font-weight="bold">螺栓</text>
<text transform="translate(411.30,747.48) scale(1,1.3)" font-size="1.8" fill="#ffffff" text-anchor="start" >8</text>
<text transform="translate(386.20,750.38) scale(1,1.3)" font-size="1.9" fill="#ffffff" text-anchor="start" font-weight="bold">26</text>
<text transform="translate(389.80,750.38) scale(1,1.3)" font-size="1.8" fill="#ffffff" text-anchor="start" font-weight="bold" textLength="7.8" lengthAdjust="spacingAndGlyphs">THDDH-17-01-04</text>
<text transform="translate(399.60,750.38) scale(1,1.3)" font-size="1.9" fill="#ffffff" text-anchor="start" font-weight="bold">钢球</text>
<text transform="translate(411.30,750.38) scale(1,1.3)" font-size="1.8" fill="#ffffff" text-anchor="start" >2</text>
<text transform="translate(417.40,750.38) scale(1,1.3)" font-size="1.8" fill="#ffffff" text-anchor="start" font-weight="bold">ZL104</text>
<text transform="translate(386.20,753.29) scale(1,1.3)" font-size="1.9" fill="#ffffff" text-anchor="start" font-weight="bold">25</text>
<text transform="translate(389.80,753.29) scale(1,1.3)" font-size="1.8" fill="#ffffff" text-anchor="start" font-weight="bold" textLength="7.0" lengthAdjust="spacingAndGlyphs">THDDH-17-01-04</text>
<text transform="translate(399.60,753.29) scale(1,1.3)" font-size="1.9" fill="#ffffff" text-anchor="start" font-weight="bold">螺栓</text>
<text transform="translate(411.30,753.29) scale(1,1.3)" font-size="1.8" fill="#ffffff" text-anchor="start" >1</text>
<text transform="translate(417.40,753.29) scale(1,1.3)" font-size="1.8" fill="#ffffff" text-anchor="start" font-weight="bold">HT200</text>
<text transform="translate(386.20,756.19) scale(1,1.3)" font-size="1.9" fill="#ffffff" text-anchor="start" font-weight="bold">24</text>
<text transform="translate(389.80,756.19) scale(1,1.3)" font-size="1.8" fill="#ffffff" text-anchor="start" font-weight="bold" textLength="5.7" lengthAdjust="spacingAndGlyphs">GB/T5783-08</text>
<text transform="translate(399.60,756.19) scale(1,1.3)" font-size="1.9" fill="#ffffff" text-anchor="start" font-weight="bold">通气塞</text>
<text transform="translate(411.30,756.19) scale(1,1.3)" font-size="1.8" fill="#ffffff" text-anchor="start" >1</text>
<text transform="translate(417.40,756.19) scale(1,1.3)" font-size="1.8" fill="#ffffff" text-anchor="start" font-weight="bold">45</text>
<text transform="translate(386.20,759.10) scale(1,1.3)" font-size="1.9" fill="#ffffff" text-anchor="start" font-weight="bold">23</text>
<text transform="translate(389.80,759.10) scale(1,1.3)" font-size="1.8" fill="#ffffff" text-anchor="start" font-weight="bold" textLength="6.0" lengthAdjust="spacingAndGlyphs">THDDH-17-02-21</text>
<text transform="translate(399.60,759.10) scale(1,1.3)" font-size="1.9" fill="#ffffff" text-anchor="start" font-weight="bold">圆锥滚子轴承</text>
<text transform="translate(411.30,759.10) scale(1,1.3)" font-size="1.8" fill="#ffffff" text-anchor="start" >4</text>
<text transform="translate(417.40,759.10) scale(1,1.3)" font-size="1.8" fill="#ffffff" text-anchor="start" font-weight="bold">65Mn</text>
<text transform="translate(386.20,762.00) scale(1,1.3)" font-size="1.9" fill="#ffffff" text-anchor="start" font-weight="bold">22</text>
<text transform="translate(389.80,762.00) scale(1,1.3)" font-size="1.8" fill="#ffffff" text-anchor="start" font-weight="bold" textLength="6.4" lengthAdjust="spacingAndGlyphs">THDDH-17-01-38</text>
<text transform="translate(399.60,762.00) scale(1,1.3)" font-size="1.9" fill="#ffffff" text-anchor="start" font-weight="bold">变速杆</text>
<text transform="translate(411.30,762.00) scale(1,1.3)" font-size="1.8" fill="#ffffff" text-anchor="start" >2</text>
<text transform="translate(417.40,762.00) scale(1,1.3)" font-size="1.8" fill="#ffffff" text-anchor="start" font-weight="bold">20CrMnTi</text>
<text transform="translate(386.20,764.91) scale(1,1.3)" font-size="1.9" fill="#ffffff" text-anchor="start" font-weight="bold">21</text>
<text transform="translate(389.80,764.91) scale(1,1.3)" font-size="1.8" fill="#ffffff" text-anchor="start" font-weight="bold" textLength="5.9" lengthAdjust="spacingAndGlyphs">THDDH-17-01-08</text>
<text transform="translate(399.60,764.91) scale(1,1.3)" font-size="1.9" fill="#ffffff" text-anchor="start" font-weight="bold">螺栓</text>
<text transform="translate(411.30,764.91) scale(1,1.3)" font-size="1.8" fill="#ffffff" text-anchor="start" >6</text>
<text transform="translate(417.40,764.91) scale(1,1.3)" font-size="1.8" fill="#ffffff" text-anchor="start" font-weight="bold">45</text>
<text transform="translate(386.20,767.81) scale(1,1.3)" font-size="1.9" fill="#ffffff" text-anchor="start" font-weight="bold">20</text>
<text transform="translate(389.80,767.81) scale(1,1.3)" font-size="1.8" fill="#ffffff" text-anchor="start" font-weight="bold" textLength="6.7" lengthAdjust="spacingAndGlyphs">THDDH-17-00-03</text>
<text transform="translate(399.60,767.81) scale(1,1.3)" font-size="1.9" fill="#ffffff" text-anchor="start" font-weight="bold">输出轴</text>
<text transform="translate(411.30,767.81) scale(1,1.3)" font-size="1.8" fill="#ffffff" text-anchor="start" >1</text>
<text transform="translate(417.40,767.81) scale(1,1.3)" font-size="1.8" fill="#ffffff" text-anchor="start" font-weight="bold">ZL104</text>
<text transform="translate(386.20,770.72) scale(1,1.3)" font-size="1.9" fill="#ffffff" text-anchor="start" font-weight="bold">19</text>
<text transform="translate(389.80,770.72) scale(1,1.3)" font-size="1.8" fill="#ffffff" text-anchor="start" font-weight="bold" textLength="6.7" lengthAdjust="spacingAndGlyphs">THDDH-17-01-04</text>
<text transform="translate(399.60,770.72) scale(1,1.3)" font-size="1.9" fill="#ffffff" text-anchor="start" font-weight="bold">箱体</text>
<text transform="translate(411.30,770.72) scale(1,1.3)" font-size="1.8" fill="#ffffff" text-anchor="start" >4</text>
<text transform="translate(417.40,770.72) scale(1,1.3)" font-size="1.8" fill="#ffffff" text-anchor="start" font-weight="bold">65Mn</text>
<text transform="translate(386.20,773.62) scale(1,1.3)" font-size="1.9" fill="#ffffff" text-anchor="start" font-weight="bold">18</text>
<text transform="translate(389.80,773.62) scale(1,1.3)" font-size="1.8" fill="#ffffff" text-anchor="start" font-weight="bold" textLength="5.6" lengthAdjust="spacingAndGlyphs">THDDH-17-01-30</text>
<text transform="translate(399.60,773.62) scale(1,1.3)" font-size="1.9" fill="#ffffff" text-anchor="start" font-weight="bold">定位销</text>
<text transform="translate(411.30,773.62) scale(1,1.3)" font-size="1.8" fill="#ffffff" text-anchor="start" >2</text>
<text transform="translate(417.40,773.62) scale(1,1.3)" font-size="1.8" fill="#ffffff" text-anchor="start" font-weight="bold">ZL104</text>
<text transform="translate(386.20,776.52) scale(1,1.3)" font-size="1.9" fill="#ffffff" text-anchor="start" font-weight="bold">17</text>
<text transform="translate(389.80,776.52) scale(1,1.3)" font-size="1.8" fill="#ffffff" text-anchor="start" font-weight="bold" textLength="6.2" lengthAdjust="spacingAndGlyphs">GB/T93-28</text>
<text transform="translate(399.60,776.52) scale(1,1.3)" font-size="1.9" fill="#ffffff" text-anchor="start" font-weight="bold">挡圈</text>
<text transform="translate(411.30,776.52) scale(1,1.3)" font-size="1.8" fill="#ffffff" text-anchor="start" >1</text>
<text transform="translate(417.40,776.52) scale(1,1.3)" font-size="1.8" fill="#ffffff" text-anchor="start" font-weight="bold">20CrMnTi</text>
<text transform="translate(386.20,779.43) scale(1,1.3)" font-size="1.9" fill="#ffffff" text-anchor="start" font-weight="bold">16</text>
<text transform="translate(389.80,779.43) scale(1,1.3)" font-size="1.8" fill="#ffffff" text-anchor="start" font-weight="bold" textLength="8.0" lengthAdjust="spacingAndGlyphs">GB/T1096-36</text>
<text transform="translate(399.60,779.43) scale(1,1.3)" font-size="1.9" fill="#ffffff" text-anchor="start" font-weight="bold">变速杆</text>
<text transform="translate(411.30,779.43) scale(1,1.3)" font-size="1.8" fill="#ffffff" text-anchor="start" >1</text>
<text transform="translate(417.40,779.43) scale(1,1.3)" font-size="1.8" fill="#ffffff" text-anchor="start" font-weight="bold">橡胶</text>
<text transform="translate(386.20,782.33) scale(1,1.3)" font-size="1.9" fill="#ffffff" text-anchor="start" font-weight="bold">15</text>
<text transform="translate(389.80,782.33) scale(1,1.3)" font-size="1.8" fill="#ffffff" text-anchor="start" font-weight="bold" textLength="8.0" lengthAdjust="spacingAndGlyphs">GB/T93-34</text>
<text transform="translate(399.60,782.33) scale(1,1.3)" font-size="1.9" fill="#ffffff" text-anchor="start" font-weight="bold">套筒</text>
<text transform="translate(411.30,782.33) scale(1,1.3)" font-size="1.8" fill="#ffffff" text-anchor="start" >4</text>
<text transform="translate(417.40,782.33) scale(1,1.3)" font-size="1.8" fill="#ffffff" text-anchor="start" font-weight="bold">ZL104</text>
<text transform="translate(386.20,785.24) scale(1,1.3)" font-size="1.9" fill="#ffffff" text-anchor="start" font-weight="bold">14</text>
<text transform="translate(389.80,785.24) scale(1,1.3)" font-size="1.8" fill="#ffffff" text-anchor="start" font-weight="bold" textLength="7.7" lengthAdjust="spacingAndGlyphs">GB/T93-38</text>
<text transform="translate(399.60,785.24) scale(1,1.3)" font-size="1.9" fill="#ffffff" text-anchor="start" font-weight="bold">通气塞</text>
<text transform="translate(411.30,785.24) scale(1,1.3)" font-size="1.8" fill="#ffffff" text-anchor="start" >1</text>
<text transform="translate(417.40,785.24) scale(1,1.3)" font-size="1.8" fill="#ffffff" text-anchor="start" font-weight="bold">08F</text>
<text transform="translate(386.20,788.14) scale(1,1.3)" font-size="1.9" fill="#ffffff" text-anchor="start" font-weight="bold">13</text>
<text transform="translate(389.80,788.14) scale(1,1.3)" font-size="1.8" fill="#ffffff" text-anchor="start" font-weight="bold" textLength="7.1" lengthAdjust="spacingAndGlyphs">THDDH-17-01-03</text>
<text transform="translate(399.60,788.14) scale(1,1.3)" font-size="1.9" fill="#ffffff" text-anchor="start" font-weight="bold">套筒</text>
<text transform="translate(411.30,788.14) scale(1,1.3)" font-size="1.8" fill="#ffffff" text-anchor="start" >6</text>
<text transform="translate(417.40,788.14) scale(1,1.3)" font-size="1.8" fill="#ffffff" text-anchor="start" font-weight="bold">HT200</text>
<text transform="translate(386.20,791.05) scale(1,1.3)" font-size="1.9" fill="#ffffff" text-anchor="start" font-weight="bold">12</text>
<text transform="translate(389.80,791.05) scale(1,1.3)" font-size="1.8" fill="#ffffff" text-anchor="start" font-weight="bold" textLength="8.1" lengthAdjust="spacingAndGlyphs">GB/T5783-22</text>
<text transform="translate(399.60,791.05) scale(1,1.3)" font-size="1.9" fill="#ffffff" text-anchor="start" font-weight="bold">花键轴</text>
<text transform="translate(411.30,791.05) scale(1,1.3)" font-size="1.8" fill="#ffffff" text-anchor="start" >1</text>
<text transform="translate(417.40,791.05) scale(1,1.3)" font-size="1.8" fill="#ffffff" text-anchor="start" font-weight="bold">45</text>
<text transform="translate(386.20,793.95) scale(1,1.3)" font-size="1.9" fill="#ffffff" text-anchor="start" font-weight="bold">11</text>
<text transform="translate(389.80,793.95) scale(1,1.3)" font-size="1.8" fill="#ffffff" text-anchor="start" font-weight="bold" textLength="7.3" lengthAdjust="spacingAndGlyphs">THDDH-17-02-19</text>
<text transform="translate(399.60,793.95) scale(1,1.3)" font-size="1.9" fill="#ffffff" text-anchor="start" font-weight="bold">齿轮</text>
<text transform="translate(411.30,793.95) scale(1,1.3)" font-size="1.8" fill="#ffffff" text-anchor="start" >1</text>
<text transform="translate(417.40,793.95) scale(1,1.3)" font-size="1.8" fill="#ffffff" text-anchor="start" font-weight="bold">ZL104</text>
<text transform="translate(386.20,796.85) scale(1,1.3)" font-size="1.9" fill="#ffffff" text-anchor="start" font-weight="bold">10</text>
<text transform="translate(389.80,796.85) scale(1,1.3)" font-size="1.8" fill="#ffffff" text-anchor="start" font-weight="bold" textLength="7.2" lengthAdjust="spacingAndGlyphs">GB/T297-07</text>
<text transform="translate(399.60,796.85) scale(1,1.3)" font-size="1.9" fill="#ffffff" text-anchor="start" font-weight="bold">套筒</text>
<text transform="translate(411.30,796.85) scale(1,1.3)" font-size="1.8" fill="#ffffff" text-anchor="start" >1</text>
<text transform="translate(417.40,796.85) scale(1,1.3)" font-size="1.8" fill="#ffffff" text-anchor="start" font-weight="bold">40Cr</text>
<text transform="translate(386.20,799.76) scale(1,1.3)" font-size="1.9" fill="#ffffff" text-anchor="start" font-weight="bold">9</text>
<text transform="translate(389.80,799.76) scale(1,1.3)" font-size="1.8" fill="#ffffff" text-anchor="start" font-weight="bold" textLength="6.1" lengthAdjust="spacingAndGlyphs">GB/T1096-37</text>
<text transform="translate(399.60,799.76) scale(1,1.3)" font-size="1.9" fill="#ffffff" text-anchor="start" font-weight="bold">圆锥滚子轴承</text>
<text transform="translate(411.30,799.76) scale(1,1.3)" font-size="1.8" fill="#ffffff" text-anchor="start" >2</text>
<text transform="translate(417.40,799.76) scale(1,1.3)" font-size="1.8" fill="#ffffff" text-anchor="start" font-weight="bold">HT200</text>
<text transform="translate(386.20,802.66) scale(1,1.3)" font-size="1.9" fill="#ffffff" text-anchor="start" font-weight="bold">8</text>
<text transform="translate(389.80,802.66) scale(1,1.3)" font-size="1.8" fill="#ffffff" text-anchor="start" font-weight="bold" textLength="7.4" lengthAdjust="spacingAndGlyphs">GB/T297-30</text>
<text transform="translate(399.60,802.66) scale(1,1.3)" font-size="1.9" fill="#ffffff" text-anchor="start" font-weight="bold">输入轴</text>
<text transform="translate(411.30,802.66) scale(1,1.3)" font-size="1.8" fill="#ffffff" text-anchor="start" >2</text>
<text transform="translate(417.40,802.66) scale(1,1.3)" font-size="1.8" fill="#ffffff" text-anchor="start" font-weight="bold">20CrMnTi</text>
<text transform="translate(386.20,805.57) scale(1,1.3)" font-size="1.9" fill="#ffffff" text-anchor="start" font-weight="bold">7</text>
<text transform="translate(389.80,805.57) scale(1,1.3)" font-size="1.8" fill="#ffffff" text-anchor="start" font-weight="bold" textLength="7.2" lengthAdjust="spacingAndGlyphs">THDDH-17-01-23</text>
<text transform="translate(399.60,805.57) scale(1,1.3)" font-size="1.9" fill="#ffffff" text-anchor="start" font-weight="bold">齿轮</text>
<text transform="translate(411.30,805.57) scale(1,1.3)" font-size="1.8" fill="#ffffff" text-anchor="start" >6</text>
<text transform="translate(417.40,805.57) scale(1,1.3)" font-size="1.8" fill="#ffffff" text-anchor="start" font-weight="bold">40Cr</text>
<text transform="translate(386.20,808.47) scale(1,1.3)" font-size="1.9" fill="#ffffff" text-anchor="start" font-weight="bold">6</text>
<text transform="translate(389.80,808.47) scale(1,1.3)" font-size="1.8" fill="#ffffff" text-anchor="start" font-weight="bold" textLength="8.1" lengthAdjust="spacingAndGlyphs">GB/T297-27</text>
<text transform="translate(399.60,808.47) scale(1,1.3)" font-size="1.9" fill="#ffffff" text-anchor="start" font-weight="bold">箱盖</text>
<text transform="translate(411.30,808.47) scale(1,1.3)" font-size="1.8" fill="#ffffff" text-anchor="start" >6</text>
<text transform="translate(417.40,808.47) scale(1,1.3)" font-size="1.8" fill="#ffffff" text-anchor="start" font-weight="bold">ZL104</text>
<text transform="translate(386.20,811.38) scale(1,1.3)" font-size="1.9" fill="#ffffff" text-anchor="start" font-weight="bold">5</text>
<text transform="translate(389.80,811.38) scale(1,1.3)" font-size="1.8" fill="#ffffff" text-anchor="start" font-weight="bold" textLength="7.5" lengthAdjust="spacingAndGlyphs">THDDH-17-02-10</text>
<text transform="translate(399.60,811.38) scale(1,1.3)" font-size="1.9" fill="#ffffff" text-anchor="start" font-weight="bold">密封圈</text>
<text transform="translate(411.30,811.38) scale(1,1.3)" font-size="1.8" fill="#ffffff" text-anchor="start" >1</text>
<text transform="translate(417.40,811.38) scale(1,1.3)" font-size="1.8" fill="#ffffff" text-anchor="start" font-weight="bold">45</text>
<text transform="translate(386.20,814.28) scale(1,1.3)" font-size="1.9" fill="#ffffff" text-anchor="start" font-weight="bold">4</text>
<text transform="translate(389.80,814.28) scale(1,1.3)" font-size="1.8" fill="#ffffff" text-anchor="start" font-weight="bold" textLength="8.3" lengthAdjust="spacingAndGlyphs">THDDH-17-02-31</text>
<text transform="translate(399.60,814.28) scale(1,1.3)" font-size="1.9" fill="#ffffff" text-anchor="start" font-weight="bold">联体齿轮</text>
<text transform="translate(411.30,814.28) scale(1,1.3)" font-size="1.8" fill="#ffffff" text-anchor="start" >8</text>
<text transform="translate(417.40,814.28) scale(1,1.3)" font-size="1.8" fill="#ffffff" text-anchor="start" font-weight="bold">ZL104</text>
<text transform="translate(386.20,817.18) scale(1,1.3)" font-size="1.9" fill="#ffffff" text-anchor="start" font-weight="bold">3</text>
<text transform="translate(389.80,817.18) scale(1,1.3)" font-size="1.8" fill="#ffffff" text-anchor="start" font-weight="bold" textLength="6.3" lengthAdjust="spacingAndGlyphs">THDDH-17-00-09</text>
<text transform="translate(399.60,817.18) scale(1,1.3)" font-size="1.9" fill="#ffffff" text-anchor="start" font-weight="bold">拨叉轴</text>
<text transform="translate(411.30,817.18) scale(1,1.3)" font-size="1.8" fill="#ffffff" text-anchor="start" >1</text>
<text transform="translate(417.40,817.18) scale(1,1.3)" font-size="1.8" fill="#ffffff" text-anchor="start" font-weight="bold">ZL104</text>
<text transform="translate(386.20,820.09) scale(1,1.3)" font-size="1.9" fill="#ffffff" text-anchor="start" font-weight="bold">2</text>
<text transform="translate(389.80,820.09) scale(1,1.3)" font-size="1.8" fill="#ffffff" text-anchor="start" font-weight="bold" textLength="8.1" lengthAdjust="spacingAndGlyphs">GB/T1096-15</text>
<text transform="translate(399.60,820.09) scale(1,1.3)" font-size="1.9" fill="#ffffff" text-anchor="start" font-weight="bold">球头</text>
<text transform="translate(411.30,820.09) scale(1,1.3)" font-size="1.8" fill="#ffffff" text-anchor="start" >6</text>
<text transform="translate(417.40,820.09) scale(1,1.3)" font-size="1.8" fill="#ffffff" text-anchor="start" font-weight="bold">ZL104</text>
<text transform="translate(386.20,822.99) scale(1,1.3)" font-size="1.9" fill="#ffffff" text-anchor="start" font-weight="bold">1</text>
<text transform="translate(389.80,822.99) scale(1,1.3)" font-size="1.8" fill="#ffffff" text-anchor="start" font-weight="bold" textLength="6.5" lengthAdjust="spacingAndGlyphs">GB/T894-14</text>
<text transform="translate(399.60,822.99) scale(1,1.3)" font-size="1.9" fill="#ffffff" text-anchor="start" font-weight="bold">防尘罩</text>
<text transform="translate(411.30,822.99) scale(1,1.3)" font-size="1.8" fill="#ffffff" text-anchor="start" >8</text>
<text transform="translate(417.40,822.99) scale(1,1.3)" font-size="1.8" fill="#ffffff" text-anchor="start" font-weight="bold">65Mn</text>
<path d="M384.2 842V622.3H434" fill="none" stroke="#ffffff" stroke-width="2.2" />
<rect x="333.60" y="755.60" width="49.60" height="85.40" fill="#14161a" stroke="none" stroke-width="0" />
<line x1="333.60" y1="758.54" x2="383.20" y2="758.54" stroke="#c4c6c8" stroke-width="1.0" />
<line x1="333.60" y1="761.49" x2="383.20" y2="761.49" stroke="#c4c6c8" stroke-width="1.0" />
<line x1="333.60" y1="764.43" x2="383.20" y2="764.43" stroke="#c4c6c8" stroke-width="1.0" />
<line x1="333.60" y1="767.38" x2="383.20" y2="767.38" stroke="#c4c6c8" stroke-width="1.0" />
<line x1="333.60" y1="770.32" x2="383.20" y2="770.32" stroke="#c4c6c8" stroke-width="1.0" />
<line x1="333.60" y1="773.27" x2="383.20" y2="773.27" stroke="#c4c6c8" stroke-width="1.0" />
<line x1="333.60" y1="776.21" x2="383.20" y2="776.21" stroke="#c4c6c8" stroke-width="1.0" />
<line x1="333.60" y1="779.16" x2="383.20" y2="779.16" stroke="#c4c6c8" stroke-width="1.0" />
<line x1="333.60" y1="782.10" x2="383.20" y2="782.10" stroke="#c4c6c8" stroke-width="1.0" />
<line x1="333.60" y1="785.05" x2="383.20" y2="785.05" stroke="#c4c6c8" stroke-width="1.0" />
<line x1="333.60" y1="787.99" x2="383.20" y2="787.99" stroke="#c4c6c8" stroke-width="1.0" />
<line x1="333.60" y1="790.94" x2="383.20" y2="790.94" stroke="#c4c6c8" stroke-width="1.0" />
<line x1="333.60" y1="793.88" x2="383.20" y2="793.88" stroke="#c4c6c8" stroke-width="1.0" />
<line x1="333.60" y1="796.83" x2="383.20" y2="796.83" stroke="#c4c6c8" stroke-width="1.0" />
<line x1="333.60" y1="799.77" x2="383.20" y2="799.77" stroke="#c4c6c8" stroke-width="1.0" />
<line x1="333.60" y1="802.72" x2="383.20" y2="802.72" stroke="#c4c6c8" stroke-width="1.0" />
<line x1="333.60" y1="805.66" x2="383.20" y2="805.66" stroke="#c4c6c8" stroke-width="1.0" />
<line x1="333.60" y1="808.61" x2="383.20" y2="808.61" stroke="#c4c6c8" stroke-width="1.0" />
<line x1="333.60" y1="811.55" x2="383.20" y2="811.55" stroke="#c4c6c8" stroke-width="1.0" />
<line x1="333.60" y1="814.50" x2="383.20" y2="814.50" stroke="#c4c6c8" stroke-width="1.0" />
<line x1="333.60" y1="817.44" x2="383.20" y2="817.44" stroke="#c4c6c8" stroke-width="1.0" />
<line x1="333.60" y1="820.39" x2="383.20" y2="820.39" stroke="#c4c6c8" stroke-width="1.0" />
<line x1="333.60" y1="823.33" x2="383.20" y2="823.33" stroke="#c4c6c8" stroke-width="1.0" />
<line x1="333.60" y1="826.28" x2="383.20" y2="826.28" stroke="#c4c6c8" stroke-width="1.0" />
<line x1="333.60" y1="829.22" x2="383.20" y2="829.22" stroke="#c4c6c8" stroke-width="1.0" />
<line x1="333.60" y1="832.17" x2="383.20" y2="832.17" stroke="#c4c6c8" stroke-width="1.0" />
<line x1="333.60" y1="835.11" x2="383.20" y2="835.11" stroke="#c4c6c8" stroke-width="1.0" />
<line x1="333.60" y1="838.06" x2="383.20" y2="838.06" stroke="#c4c6c8" stroke-width="1.0" />
<line x1="338.00" y1="755.60" x2="338.00" y2="841.00" stroke="#d0d2d4" stroke-width="0.8" />
<line x1="347.80" y1="755.60" x2="347.80" y2="841.00" stroke="#d0d2d4" stroke-width="0.8" />
<line x1="359.10" y1="755.60" x2="359.10" y2="841.00" stroke="#d0d2d4" stroke-width="0.8" />
<line x1="362.50" y1="755.60" x2="362.50" y2="841.00" stroke="#d0d2d4" stroke-width="0.8" />
<line x1="365.80" y1="755.60" x2="365.80" y2="841.00" stroke="#d0d2d4" stroke-width="0.8" />
<line x1="371.90" y1="755.60" x2="371.90" y2="841.00" stroke="#d0d2d4" stroke-width="0.8" />
<text transform="translate(335.20,758.13) scale(1,1.3)" font-size="1.9" fill="#ffffff" text-anchor="start" font-weight="bold">29</text>
<text transform="translate(338.80,758.13) scale(1,1.3)" font-size="1.8" fill="#ffffff" text-anchor="start" font-weight="bold" textLength="7.3" lengthAdjust="spacingAndGlyphs">GB/T297-12</text>
<text transform="translate(348.60,758.13) scale(1,1.3)" font-size="1.9" fill="#ffffff" text-anchor="start" font-weight="bold">钢球</text>
<text transform="translate(360.30,758.13) scale(1,1.3)" font-size="1.8" fill="#ffffff" text-anchor="start" >4</text>
<text transform="translate(366.40,758.13) scale(1,1.3)" font-size="1.8" fill="#ffffff" text-anchor="start" font-weight="bold">橡胶</text>
<text transform="translate(335.20,761.08) scale(1,1.3)" font-size="1.9" fill="#ffffff" text-anchor="start" font-weight="bold">28</text>
<text transform="translate(338.80,761.08) scale(1,1.3)" font-size="1.8" fill="#ffffff" text-anchor="start" font-weight="bold" textLength="8.6" lengthAdjust="spacingAndGlyphs">THDDH-17-00-27</text>
<text transform="translate(348.60,761.08) scale(1,1.3)" font-size="1.9" fill="#ffffff" text-anchor="start" font-weight="bold">通气塞</text>
<text transform="translate(360.30,761.08) scale(1,1.3)" font-size="1.8" fill="#ffffff" text-anchor="start" >2</text>
<text transform="translate(366.40,761.08) scale(1,1.3)" font-size="1.8" fill="#ffffff" text-anchor="start" font-weight="bold">橡胶</text>
<text transform="translate(335.20,764.02) scale(1,1.3)" font-size="1.9" fill="#ffffff" text-anchor="start" font-weight="bold">27</text>
<text transform="translate(338.80,764.02) scale(1,1.3)" font-size="1.8" fill="#ffffff" text-anchor="start" font-weight="bold" textLength="8.6" lengthAdjust="spacingAndGlyphs">GB/T5783-31</text>
<text transform="translate(348.60,764.02) scale(1,1.3)" font-size="1.9" fill="#ffffff" text-anchor="start" font-weight="bold">圆锥滚子轴承</text>
<text transform="translate(360.30,764.02) scale(1,1.3)" font-size="1.8" fill="#ffffff" text-anchor="start" >6</text>
<text transform="translate(366.40,764.02) scale(1,1.3)" font-size="1.8" fill="#ffffff" text-anchor="start" font-weight="bold">Q235</text>
<text transform="translate(335.20,766.97) scale(1,1.3)" font-size="1.9" fill="#ffffff" text-anchor="start" font-weight="bold">26</text>
<text transform="translate(338.80,766.97) scale(1,1.3)" font-size="1.8" fill="#ffffff" text-anchor="start" font-weight="bold" textLength="8.3" lengthAdjust="spacingAndGlyphs">THDDH-17-02-15</text>
<text transform="translate(348.60,766.97) scale(1,1.3)" font-size="1.9" fill="#ffffff" text-anchor="start" font-weight="bold">圆锥滚子轴承</text>
<text transform="translate(360.30,766.97) scale(1,1.3)" font-size="1.8" fill="#ffffff" text-anchor="start" >2</text>
<text transform="translate(366.40,766.97) scale(1,1.3)" font-size="1.8" fill="#ffffff" text-anchor="start" font-weight="bold">GCr15</text>
<text transform="translate(335.20,769.91) scale(1,1.3)" font-size="1.9" fill="#ffffff" text-anchor="start" font-weight="bold">25</text>
<text transform="translate(338.80,769.91) scale(1,1.3)" font-size="1.8" fill="#ffffff" text-anchor="start" font-weight="bold" textLength="7.9" lengthAdjust="spacingAndGlyphs">GB/T297-13</text>
<text transform="translate(348.60,769.91) scale(1,1.3)" font-size="1.9" fill="#ffffff" text-anchor="start" font-weight="bold">挡圈</text>
<text transform="translate(360.30,769.91) scale(1,1.3)" font-size="1.8" fill="#ffffff" text-anchor="start" >1</text>
<text transform="translate(366.40,769.91) scale(1,1.3)" font-size="1.8" fill="#ffffff" text-anchor="start" font-weight="bold">ZL104</text>
<text transform="translate(335.20,772.86) scale(1,1.3)" font-size="1.9" fill="#ffffff" text-anchor="start" font-weight="bold">24</text>
<text transform="translate(338.80,772.86) scale(1,1.3)" font-size="1.8" fill="#ffffff" text-anchor="start" font-weight="bold" textLength="6.0" lengthAdjust="spacingAndGlyphs">GB/T5783-17</text>
<text transform="translate(348.60,772.86) scale(1,1.3)" font-size="1.9" fill="#ffffff" text-anchor="start" font-weight="bold">轴承盖</text>
<text transform="translate(360.30,772.86) scale(1,1.3)" font-size="1.8" fill="#ffffff" text-anchor="start" >4</text>
<text transform="translate(366.40,772.86) scale(1,1.3)" font-size="1.8" fill="#ffffff" text-anchor="start" font-weight="bold">HT200</text>
<text transform="translate(335.20,775.80) scale(1,1.3)" font-size="1.9" fill="#ffffff" text-anchor="start" font-weight="bold">23</text>
<text transform="translate(338.80,775.80) scale(1,1.3)" font-size="1.8" fill="#ffffff" text-anchor="start" font-weight="bold" textLength="7.8" lengthAdjust="spacingAndGlyphs">THDDH-17-01-06</text>
<text transform="translate(348.60,775.80) scale(1,1.3)" font-size="1.9" fill="#ffffff" text-anchor="start" font-weight="bold">齿轮</text>
<text transform="translate(360.30,775.80) scale(1,1.3)" font-size="1.8" fill="#ffffff" text-anchor="start" >1</text>
<text transform="translate(366.40,775.80) scale(1,1.3)" font-size="1.8" fill="#ffffff" text-anchor="start" font-weight="bold">45</text>
<text transform="translate(335.20,778.75) scale(1,1.3)" font-size="1.9" fill="#ffffff" text-anchor="start" font-weight="bold">22</text>
<text transform="translate(338.80,778.75) scale(1,1.3)" font-size="1.8" fill="#ffffff" text-anchor="start" font-weight="bold" textLength="5.6" lengthAdjust="spacingAndGlyphs">GB/T894-19</text>
<text transform="translate(348.60,778.75) scale(1,1.3)" font-size="1.9" fill="#ffffff" text-anchor="start" font-weight="bold">止推垫片</text>
<text transform="translate(360.30,778.75) scale(1,1.3)" font-size="1.8" fill="#ffffff" text-anchor="start" >4</text>
<text transform="translate(366.40,778.75) scale(1,1.3)" font-size="1.8" fill="#ffffff" text-anchor="start" font-weight="bold">Q235</text>
<text transform="translate(335.20,781.69) scale(1,1.3)" font-size="1.9" fill="#ffffff" text-anchor="start" font-weight="bold">21</text>
<text transform="translate(338.80,781.69) scale(1,1.3)" font-size="1.8" fill="#ffffff" text-anchor="start" font-weight="bold" textLength="6.5" lengthAdjust="spacingAndGlyphs">GB/T5783-22</text>
<text transform="translate(348.60,781.69) scale(1,1.3)" font-size="1.9" fill="#ffffff" text-anchor="start" font-weight="bold">输出轴</text>
<text transform="translate(360.30,781.69) scale(1,1.3)" font-size="1.8" fill="#ffffff" text-anchor="start" >8</text>
<text transform="translate(366.40,781.69) scale(1,1.3)" font-size="1.8" fill="#ffffff" text-anchor="start" font-weight="bold">45</text>
<text transform="translate(335.20,784.64) scale(1,1.3)" font-size="1.9" fill="#ffffff" text-anchor="start" font-weight="bold">20</text>
<text transform="translate(338.80,784.64) scale(1,1.3)" font-size="1.8" fill="#ffffff" text-anchor="start" font-weight="bold" textLength="7.8" lengthAdjust="spacingAndGlyphs">GB/T297-38</text>
<text transform="translate(348.60,784.64) scale(1,1.3)" font-size="1.9" fill="#ffffff" text-anchor="start" font-weight="bold">箱体</text>
<text transform="translate(360.30,784.64) scale(1,1.3)" font-size="1.8" fill="#ffffff" text-anchor="start" >6</text>
<text transform="translate(366.40,784.64) scale(1,1.3)" font-size="1.8" fill="#ffffff" text-anchor="start" font-weight="bold">HT200</text>
<text transform="translate(335.20,787.58) scale(1,1.3)" font-size="1.9" fill="#ffffff" text-anchor="start" font-weight="bold">19</text>
<text transform="translate(338.80,787.58) scale(1,1.3)" font-size="1.8" fill="#ffffff" text-anchor="start" font-weight="bold" textLength="8.2" lengthAdjust="spacingAndGlyphs">GB/T1096-08</text>
<text transform="translate(348.60,787.58) scale(1,1.3)" font-size="1.9" fill="#ffffff" text-anchor="start" font-weight="bold">圆锥滚子轴承</text>
<text transform="translate(360.30,787.58) scale(1,1.3)" font-size="1.8" fill="#ffffff" text-anchor="start" >6</text>
<text transform="translate(366.40,787.58) scale(1,1.3)" font-size="1.8" fill="#ffffff" text-anchor="start" font-weight="bold">45</text>
<text transform="translate(335.20,790.53) scale(1,1.3)" font-size="1.9" fill="#ffffff" text-anchor="start" font-weight="bold">18</text>
<text transform="translate(338.80,790.53) scale(1,1.3)" font-size="1.8" fill="#ffffff" text-anchor="start" font-weight="bold" textLength="8.3" lengthAdjust="spacingAndGlyphs">THDDH-17-02-34</text>
<text transform="translate(348.60,790.53) scale(1,1.3)" font-size="1.9" fill="#ffffff" text-anchor="start" font-weight="bold">套筒</text>
<text transform="translate(360.30,790.53) scale(1,1.3)" font-size="1.8" fill="#ffffff" text-anchor="start" >4</text>
<text transform="translate(335.20,793.47) scale(1,1.3)" font-size="1.9" fill="#ffffff" text-anchor="start" font-weight="bold">17</text>
<text transform="translate(338.80,793.47) scale(1,1.3)" font-size="1.8" fill="#ffffff" text-anchor="start" font-weight="bold" textLength="6.4" lengthAdjust="spacingAndGlyphs">GB/T1096-29</text>
<text transform="translate(348.60,793.47) scale(1,1.3)" font-size="1.9" fill="#ffffff" text-anchor="start" font-weight="bold">变速杆</text>
<text transform="translate(360.30,793.47) scale(1,1.3)" font-size="1.8" fill="#ffffff" text-anchor="start" >1</text>
<text transform="translate(366.40,793.47) scale(1,1.3)" font-size="1.8" fill="#ffffff" text-anchor="start" font-weight="bold">20CrMnTi</text>
<text transform="translate(335.20,796.42) scale(1,1.3)" font-size="1.9" fill="#ffffff" text-anchor="start" font-weight="bold">16</text>
<text transform="translate(338.80,796.42) scale(1,1.3)" font-size="1.8" fill="#ffffff" text-anchor="start" font-weight="bold" textLength="7.1" lengthAdjust="spacingAndGlyphs">GB/T93-32</text>
<text transform="translate(348.60,796.42) scale(1,1.3)" font-size="1.9" fill="#ffffff" text-anchor="start" font-weight="bold">调整垫片</text>
<text transform="translate(360.30,796.42) scale(1,1.3)" font-size="1.8" fill="#ffffff" text-anchor="start" >2</text>
<text transform="translate(335.20,799.36) scale(1,1.3)" font-size="1.9" fill="#ffffff" text-anchor="start" font-weight="bold">15</text>
<text transform="translate(338.80,799.36) scale(1,1.3)" font-size="1.8" fill="#ffffff" text-anchor="start" font-weight="bold" textLength="6.1" lengthAdjust="spacingAndGlyphs">THDDH-17-00-10</text>
<text transform="translate(348.60,799.36) scale(1,1.3)" font-size="1.9" fill="#ffffff" text-anchor="start" font-weight="bold">放油螺塞</text>
<text transform="translate(360.30,799.36) scale(1,1.3)" font-size="1.8" fill="#ffffff" text-anchor="start" >1</text>
<text transform="translate(366.40,799.36) scale(1,1.3)" font-size="1.8" fill="#ffffff" text-anchor="start" font-weight="bold">45</text>
<text transform="translate(335.20,802.30) scale(1,1.3)" font-size="1.9" fill="#ffffff" text-anchor="start" font-weight="bold">14</text>
<text transform="translate(338.80,802.30) scale(1,1.3)" font-size="1.8" fill="#ffffff" text-anchor="start" font-weight="bold" textLength="7.5" lengthAdjust="spacingAndGlyphs">THDDH-17-00-22</text>
<text transform="translate(348.60,802.30) scale(1,1.3)" font-size="1.9" fill="#ffffff" text-anchor="start" font-weight="bold">同步器</text>
<text transform="translate(360.30,802.30) scale(1,1.3)" font-size="1.8" fill="#ffffff" text-anchor="start" >2</text>
<text transform="translate(335.20,805.25) scale(1,1.3)" font-size="1.9" fill="#ffffff" text-anchor="start" font-weight="bold">13</text>
<text transform="translate(338.80,805.25) scale(1,1.3)" font-size="1.8" fill="#ffffff" text-anchor="start" font-weight="bold" textLength="7.0" lengthAdjust="spacingAndGlyphs">THDDH-17-00-30</text>
<text transform="translate(348.60,805.25) scale(1,1.3)" font-size="1.9" fill="#ffffff" text-anchor="start" font-weight="bold">拨叉</text>
<text transform="translate(360.30,805.25) scale(1,1.3)" font-size="1.8" fill="#ffffff" text-anchor="start" >1</text>
<text transform="translate(366.40,805.25) scale(1,1.3)" font-size="1.8" fill="#ffffff" text-anchor="start" font-weight="bold">45</text>
<text transform="translate(335.20,808.19) scale(1,1.3)" font-size="1.9" fill="#ffffff" text-anchor="start" font-weight="bold">12</text>
<text transform="translate(338.80,808.19) scale(1,1.3)" font-size="1.8" fill="#ffffff" text-anchor="start" font-weight="bold" textLength="7.2" lengthAdjust="spacingAndGlyphs">THDDH-17-00-36</text>
<text transform="translate(348.60,808.19) scale(1,1.3)" font-size="1.9" fill="#ffffff" text-anchor="start" font-weight="bold">输入轴</text>
<text transform="translate(360.30,808.19) scale(1,1.3)" font-size="1.8" fill="#ffffff" text-anchor="start" >4</text>
<text transform="translate(366.40,808.19) scale(1,1.3)" font-size="1.8" fill="#ffffff" text-anchor="start" font-weight="bold">45</text>
<text transform="translate(335.20,811.14) scale(1,1.3)" font-size="1.9" fill="#ffffff" text-anchor="start" font-weight="bold">11</text>
<text transform="translate(338.80,811.14) scale(1,1.3)" font-size="1.8" fill="#ffffff" text-anchor="start" font-weight="bold" textLength="6.7" lengthAdjust="spacingAndGlyphs">GB/T894-18</text>
<text transform="translate(348.60,811.14) scale(1,1.3)" font-size="1.9" fill="#ffffff" text-anchor="start" font-weight="bold">挡圈</text>
<text transform="translate(360.30,811.14) scale(1,1.3)" font-size="1.8" fill="#ffffff" text-anchor="start" >1</text>
<text transform="translate(366.40,811.14) scale(1,1.3)" font-size="1.8" fill="#ffffff" text-anchor="start" font-weight="bold">橡胶</text>
<text transform="translate(335.20,814.08) scale(1,1.3)" font-size="1.9" fill="#ffffff" text-anchor="start" font-weight="bold">10</text>
<text transform="translate(338.80,814.08) scale(1,1.3)" font-size="1.8" fill="#ffffff" text-anchor="start" font-weight="bold" textLength="7.7" lengthAdjust="spacingAndGlyphs">GB/T894-16</text>
<text transform="translate(348.60,814.08) scale(1,1.3)" font-size="1.9" fill="#ffffff" text-anchor="start" font-weight="bold">衬垫</text>
<text transform="translate(360.30,814.08) scale(1,1.3)" font-size="1.8" fill="#ffffff" text-anchor="start" >4</text>
<text transform="translate(366.40,814.08) scale(1,1.3)" font-size="1.8" fill="#ffffff" text-anchor="start" font-weight="bold">20CrMnTi</text>
<text transform="translate(335.20,817.03) scale(1,1.3)" font-size="1.9" fill="#ffffff" text-anchor="start" font-weight="bold">9</text>
<text transform="translate(338.80,817.03) scale(1,1.3)" font-size="1.8" fill="#ffffff" text-anchor="start" font-weight="bold" textLength="7.2" lengthAdjust="spacingAndGlyphs">THDDH-17-01-29</text>
<text transform="translate(348.60,817.03) scale(1,1.3)" font-size="1.9" fill="#ffffff" text-anchor="start" font-weight="bold">圆锥滚子轴承</text>
<text transform="translate(360.30,817.03) scale(1,1.3)" font-size="1.8" fill="#ffffff" text-anchor="start" >4</text>
<text transform="translate(366.40,817.03) scale(1,1.3)" font-size="1.8" fill="#ffffff" text-anchor="start" font-weight="bold">橡胶</text>
<text transform="translate(335.20,819.97) scale(1,1.3)" font-size="1.9" fill="#ffffff" text-anchor="start" font-weight="bold">8</text>
<text transform="translate(338.80,819.97) scale(1,1.3)" font-size="1.8" fill="#ffffff" text-anchor="start" font-weight="bold" textLength="6.3" lengthAdjust="spacingAndGlyphs">GB/T93-10</text>
<text transform="translate(348.60,819.97) scale(1,1.3)" font-size="1.9" fill="#ffffff" text-anchor="start" font-weight="bold">套筒</text>
<text transform="translate(360.30,819.97) scale(1,1.3)" font-size="1.8" fill="#ffffff" text-anchor="start" >1</text>
<text transform="translate(366.40,819.97) scale(1,1.3)" font-size="1.8" fill="#ffffff" text-anchor="start" font-weight="bold">ZL104</text>
<text transform="translate(335.20,822.92) scale(1,1.3)" font-size="1.9" fill="#ffffff" text-anchor="start" font-weight="bold">7</text>
<text transform="translate(338.80,822.92) scale(1,1.3)" font-size="1.8" fill="#ffffff" text-anchor="start" font-weight="bold" textLength="7.7" lengthAdjust="spacingAndGlyphs">GB/T93-12</text>
<text transform="translate(348.60,822.92) scale(1,1.3)" font-size="1.9" fill="#ffffff" text-anchor="start" font-weight="bold">同步器</text>
<text transform="translate(360.30,822.92) scale(1,1.3)" font-size="1.8" fill="#ffffff" text-anchor="start" >6</text>
<text transform="translate(366.40,822.92) scale(1,1.3)" font-size="1.8" fill="#ffffff" text-anchor="start" font-weight="bold">HT200</text>
<text transform="translate(335.20,825.86) scale(1,1.3)" font-size="1.9" fill="#ffffff" text-anchor="start" font-weight="bold">6</text>
<text transform="translate(338.80,825.86) scale(1,1.3)" font-size="1.8" fill="#ffffff" text-anchor="start" font-weight="bold" textLength="8.0" lengthAdjust="spacingAndGlyphs">THDDH-17-00-26</text>
<text transform="translate(348.60,825.86) scale(1,1.3)" font-size="1.9" fill="#ffffff" text-anchor="start" font-weight="bold">联体齿轮</text>
<text transform="translate(360.30,825.86) scale(1,1.3)" font-size="1.8" fill="#ffffff" text-anchor="start" >1</text>
<text transform="translate(366.40,825.86) scale(1,1.3)" font-size="1.8" fill="#ffffff" text-anchor="start" font-weight="bold">ZL104</text>
<text transform="translate(335.20,828.81) scale(1,1.3)" font-size="1.9" fill="#ffffff" text-anchor="start" font-weight="bold">5</text>
<text transform="translate(338.80,828.81) scale(1,1.3)" font-size="1.8" fill="#ffffff" text-anchor="start" font-weight="bold" textLength="8.2" lengthAdjust="spacingAndGlyphs">THDDH-17-00-13</text>
<text transform="translate(348.60,828.81) scale(1,1.3)" font-size="1.9" fill="#ffffff" text-anchor="start" font-weight="bold">倒档齿轮</text>
<text transform="translate(360.30,828.81) scale(1,1.3)" font-size="1.8" fill="#ffffff" text-anchor="start" >2</text>
<text transform="translate(366.40,828.81) scale(1,1.3)" font-size="1.8" fill="#ffffff" text-anchor="start" font-weight="bold">Q235</text>
<text transform="translate(335.20,831.75) scale(1,1.3)" font-size="1.9" fill="#ffffff" text-anchor="start" font-weight="bold">4</text>
<text transform="translate(338.80,831.75) scale(1,1.3)" font-size="1.8" fill="#ffffff" text-anchor="start" font-weight="bold" textLength="8.4" lengthAdjust="spacingAndGlyphs">THDDH-17-02-27</text>
<text transform="translate(348.60,831.75) scale(1,1.3)" font-size="1.9" fill="#ffffff" text-anchor="start" font-weight="bold">输出轴</text>
<text transform="translate(360.30,831.75) scale(1,1.3)" font-size="1.8" fill="#ffffff" text-anchor="start" >4</text>
<text transform="translate(366.40,831.75) scale(1,1.3)" font-size="1.8" fill="#ffffff" text-anchor="start" font-weight="bold">40Cr</text>
<text transform="translate(335.20,834.70) scale(1,1.3)" font-size="1.9" fill="#ffffff" text-anchor="start" font-weight="bold">3</text>
<text transform="translate(338.80,834.70) scale(1,1.3)" font-size="1.8" fill="#ffffff" text-anchor="start" font-weight="bold" textLength="8.5" lengthAdjust="spacingAndGlyphs">GB/T894-32</text>
<text transform="translate(348.60,834.70) scale(1,1.3)" font-size="1.9" fill="#ffffff" text-anchor="start" font-weight="bold">螺母</text>
<text transform="translate(360.30,834.70) scale(1,1.3)" font-size="1.8" fill="#ffffff" text-anchor="start" >8</text>
<text transform="translate(366.40,834.70) scale(1,1.3)" font-size="1.8" fill="#ffffff" text-anchor="start" font-weight="bold">Q235</text>
<text transform="translate(335.20,837.64) scale(1,1.3)" font-size="1.9" fill="#ffffff" text-anchor="start" font-weight="bold">2</text>
<text transform="translate(338.80,837.64) scale(1,1.3)" font-size="1.8" fill="#ffffff" text-anchor="start" font-weight="bold" textLength="5.8" lengthAdjust="spacingAndGlyphs">GB/T297-01</text>
<text transform="translate(348.60,837.64) scale(1,1.3)" font-size="1.9" fill="#ffffff" text-anchor="start" font-weight="bold">弹簧</text>
<text transform="translate(360.30,837.64) scale(1,1.3)" font-size="1.8" fill="#ffffff" text-anchor="start" >8</text>
<text transform="translate(366.40,837.64) scale(1,1.3)" font-size="1.8" fill="#ffffff" text-anchor="start" font-weight="bold">HT200</text>
<text transform="translate(335.20,840.59) scale(1,1.3)" font-size="1.9" fill="#ffffff" text-anchor="start" font-weight="bold">1</text>
<text transform="translate(338.80,840.59) scale(1,1.3)" font-size="1.8" fill="#ffffff" text-anchor="start" font-weight="bold" textLength="6.1" lengthAdjust="spacingAndGlyphs">THDDH-17-02-13</text>
<text transform="translate(348.60,840.59) scale(1,1.3)" font-size="1.9" fill="#ffffff" text-anchor="start" font-weight="bold">联体齿轮</text>
<text transform="translate(360.30,840.59) scale(1,1.3)" font-size="1.8" fill="#ffffff" text-anchor="start" >2</text>
<text transform="translate(366.40,840.59) scale(1,1.3)" font-size="1.8" fill="#ffffff" text-anchor="start" font-weight="bold">Q235</text>
<path d="M333.2 842V755H383.6" fill="none" stroke="#ffffff" stroke-width="1.8" />
<rect x="384.60" y="823.60" width="50.00" height="17.80" fill="#f4f4f4" stroke="none" stroke-width="0" />
<rect x="385.20" y="824.80" width="15.40" height="8.60" fill="#2a2d31" stroke="none" stroke-width="0" />
<line x1="385.20" y1="826.40" x2="400.60" y2="826.40" stroke="#e8e8e8" stroke-width="0.8" />
<line x1="385.20" y1="828.30" x2="400.60" y2="828.30" stroke="#e8e8e8" stroke-width="0.8" />
<line x1="385.20" y1="830.20" x2="400.60" y2="830.20" stroke="#e8e8e8" stroke-width="0.8" />
<line x1="385.20" y1="832.10" x2="400.60" y2="832.10" stroke="#e8e8e8" stroke-width="0.8" />
<line x1="388.00" y1="824.80" x2="388.00" y2="833.40" stroke="#e8e8e8" stroke-width="0.5" />
<line x1="391.00" y1="824.80" x2="391.00" y2="833.40" stroke="#e8e8e8" stroke-width="0.5" />
<line x1="395.00" y1="824.80" x2="395.00" y2="833.40" stroke="#e8e8e8" stroke-width="0.5" />
<line x1="398.00" y1="824.80" x2="398.00" y2="833.40" stroke="#e8e8e8" stroke-width="0.5" />
<rect x="385.20" y="835.60" width="15.40" height="5.00" fill="#3a3d41" stroke="none" stroke-width="0" />
<line x1="385.20" y1="837.20" x2="400.60" y2="837.20" stroke="#f0f0f0" stroke-width="0.8" />
<line x1="385.20" y1="838.90" x2="400.60" y2="838.90" stroke="#f0f0f0" stroke-width="0.8" />
<rect x="402.00" y="825.50" width="14.80" height="8.20" fill="#16181c" stroke="none" stroke-width="0" />
<text transform="translate(409.40,831.40) scale(1,1.45)" font-size="2.7" fill="#ffffff" text-anchor="middle" font-weight="bold">变速器总成</text>
<rect x="402.00" y="836.40" width="14.80" height="4.30" fill="#16181c" stroke="none" stroke-width="0" />
<rect x="418.80" y="825.50" width="15.20" height="3.10" fill="#16181c" stroke="none" stroke-width="0" />
<text transform="translate(426.40,828.20) scale(1,1.3)" font-size="1.8" fill="#ffffff" text-anchor="middle" font-weight="bold">THDDH-17-00-00</text>
<rect x="419.20" y="830.80" width="6.00" height="4.80" fill="#55585c" stroke="none" stroke-width="0" />
<rect x="427.00" y="830.80" width="6.60" height="4.80" fill="#55585c" stroke="none" stroke-width="0" />
<text transform="translate(426.40,840.40) scale(1,1.3)" font-size="1.5" fill="#333" text-anchor="middle" >河南科技大学车辆022班</text>
<rect x="554.00" y="448.00" width="539.00" height="445.00" fill="#1c1f24" stroke="none" stroke-width="0" />
<rect x="605.20" y="450.60" width="435.60" height="441.20" fill="none" stroke="#ffffff" stroke-width="2.4" />
<rect x="624.10" y="461.20" width="409.30" height="419.80" fill="none" stroke="#ffffff" stroke-width="2.2" />
<path d="M624 474.7H668V461" fill="none" stroke="#ffffff" stroke-width="2.2" />
<text transform="translate(646,465.6) scale(-1,-1.45)" font-size="3.4" fill="#ffffff" text-anchor="middle">THDDH-17-00-47</text>
<text transform="translate(878.00,486.50) scale(1,1.45)" font-size="4.2" fill="#1fb070" text-anchor="start" >其余</text>
<path d="M887.30 482.55L889.50 487.50L893.02 478.70" fill="none" stroke="#1fb070" stroke-width="0.8" />
<defs><pattern id="hy3" width="2.8" height="2.8" patternUnits="userSpaceOnUse" patternTransform="rotate(32)"><rect width="2.8" height="2.8" fill="#25271c"/><line x1="0.7" y1="0" x2="0.7" y2="2.8" stroke="#8e8b2c" stroke-width="1.0"/></pattern></defs>
<line x1="623.00" y1="639.70" x2="880.00" y2="639.70" stroke="#9c1f26" stroke-width="1" stroke-dasharray="48 5 8 5"/>
<line x1="862.00" y1="639.70" x2="1031.00" y2="639.70" stroke="#9c1f26" stroke-width="1" stroke-dasharray="30 4 6 4"/>
<line x1="949.00" y1="534.00" x2="949.00" y2="775.00" stroke="#9c1f26" stroke-width="1" stroke-dasharray="40 4 6 4"/>
<path d="M685.6 574.2H712.3V599.9H797.6V580.2H825V610.8H685.6Z" fill="url(#hy3)" stroke="none" stroke-width="0" />
<path d="M685.6 705.2H712.3V679.5000000000001H797.6V699.2H825V668.6000000000001H685.6Z" fill="url(#hy3)" stroke="none" stroke-width="0" />
<path d="M685.6 610.8V564.69L687.8000000000001 561.5H710.0999999999999L712.3 564.69V596.9Q712.3 599.9 714.8 599.9H795.1Q797.6 599.9 797.6 596.9V571.19L799.8000000000001 568.0H822.8L825 571.19V708.21L822.8 711.4000000000001H799.8000000000001L797.6 708.21V682.5000000000001Q797.6 679.5000000000001 795.1 679.5000000000001H714.8Q712.3 679.5000000000001 712.3 682.5000000000001V714.71L710.0999999999999 717.9000000000001H687.8000000000001L685.6 714.71Z" fill="none" stroke="#ffffff" stroke-width="2.4" stroke-linejoin="round"/>
<line x1="685.60" y1="610.80" x2="825.00" y2="610.80" stroke="#ffffff" stroke-width="2.2" />
<line x1="685.60" y1="668.60" x2="825.00" y2="668.60" stroke="#ffffff" stroke-width="2.2" />
<line x1="685.60" y1="574.20" x2="712.30" y2="574.20" stroke="#ffffff" stroke-width="2.0" />
<line x1="685.60" y1="705.20" x2="712.30" y2="705.20" stroke="#ffffff" stroke-width="2.0" />
<line x1="797.60" y1="580.20" x2="825.00" y2="580.20" stroke="#ffffff" stroke-width="2.0" />
<line x1="797.60" y1="699.20" x2="825.00" y2="699.20" stroke="#ffffff" stroke-width="2.0" />
<line x1="685.00" y1="566.80" x2="720.00" y2="566.80" stroke="#c0222c" stroke-width="0.9" />
<line x1="685.00" y1="712.60" x2="720.00" y2="712.60" stroke="#c0222c" stroke-width="0.9" />
<line x1="790.00" y1="573.60" x2="826.00" y2="573.60" stroke="#c0222c" stroke-width="0.9" />
<line x1="790.00" y1="705.80" x2="826.00" y2="705.80" stroke="#c0222c" stroke-width="0.9" />
<line x1="659.80" y1="561.50" x2="685.60" y2="561.50" stroke="#1fb070" stroke-width="0.8" />
<line x1="659.80" y1="717.90" x2="685.60" y2="717.90" stroke="#1fb070" stroke-width="0.8" />
<line x1="659.80" y1="561.50" x2="659.80" y2="717.90" stroke="#1fb070" stroke-width="0.8" />
<text transform="translate(658.80,639.70) rotate(-90) scale(1.45,1)" font-size="3.8" fill="#25c07c" font-weight="bold" text-anchor="middle">Ø190-0.072</text>
<line x1="667.50" y1="566.80" x2="685.60" y2="566.80" stroke="#1fb070" stroke-width="0.8" />
<line x1="667.50" y1="712.60" x2="685.60" y2="712.60" stroke="#1fb070" stroke-width="0.8" />
<line x1="667.50" y1="566.80" x2="667.50" y2="712.60" stroke="#1fb070" stroke-width="0.8" />
<text transform="translate(666.50,639.70) rotate(-90) scale(1.45,1)" font-size="3.8" fill="#25c07c" font-weight="bold" text-anchor="middle">Ø180</text>
<line x1="675.20" y1="574.20" x2="685.60" y2="574.20" stroke="#1fb070" stroke-width="0.8" />
<line x1="675.20" y1="705.20" x2="685.60" y2="705.20" stroke="#1fb070" stroke-width="0.8" />
<line x1="675.20" y1="574.20" x2="675.20" y2="705.20" stroke="#1fb070" stroke-width="0.8" />
<text transform="translate(674.20,639.70) rotate(-90) scale(1.45,1)" font-size="3.8" fill="#25c07c" font-weight="bold" text-anchor="middle">Ø167.5</text>
<path d="M679.70 619.95L681.50 624.00L684.38 616.80" fill="none" stroke="#1fb070" stroke-width="0.8" />
<text transform="translate(677.60,618.00) scale(1,1.45)" font-size="2.8" fill="#1fb070" text-anchor="start" >3.2</text>
<path d="M688 560.5L691 554.5H706L709.6 560.5" fill="none" stroke="#1fb070" stroke-width="0.8" />
<text transform="translate(698.60,553.20) scale(1,1.45)" font-size="3.2" fill="#1fb070" text-anchor="middle" >3×45°</text>
<line x1="825.00" y1="610.80" x2="835.90" y2="610.80" stroke="#1fb070" stroke-width="0.8" />
<line x1="825.00" y1="668.60" x2="835.90" y2="668.60" stroke="#1fb070" stroke-width="0.8" />
<line x1="834.90" y1="610.80" x2="834.90" y2="668.60" stroke="#1fb070" stroke-width="0.8" />
<text transform="translate(833.90,639.70) rotate(-90) scale(1.45,1)" font-size="3.8" fill="#25c07c" font-weight="bold" text-anchor="middle">Ø55+0.03</text>
<line x1="825.00" y1="599.90" x2="843.70" y2="599.90" stroke="#1fb070" stroke-width="0.8" />
<line x1="825.00" y1="679.50" x2="843.70" y2="679.50" stroke="#1fb070" stroke-width="0.8" />
<line x1="842.70" y1="599.90" x2="842.70" y2="679.50" stroke="#1fb070" stroke-width="0.8" />
<text transform="translate(841.70,639.70) rotate(-90) scale(1.45,1)" font-size="3.8" fill="#25c07c" font-weight="bold" text-anchor="middle">Ø75</text>
<line x1="825.00" y1="580.20" x2="852.00" y2="580.20" stroke="#1fb070" stroke-width="0.8" />
<line x1="825.00" y1="699.20" x2="852.00" y2="699.20" stroke="#1fb070" stroke-width="0.8" />
<line x1="851.00" y1="580.20" x2="851.00" y2="699.20" stroke="#1fb070" stroke-width="0.8" />
<text transform="translate(850.00,639.70) rotate(-90) scale(1.45,1)" font-size="3.8" fill="#25c07c" font-weight="bold" text-anchor="middle">Ø112.5</text>
<line x1="825.00" y1="573.60" x2="860.80" y2="573.60" stroke="#1fb070" stroke-width="0.8" />
<line x1="825.00" y1="705.80" x2="860.80" y2="705.80" stroke="#1fb070" stroke-width="0.8" />
<line x1="859.80" y1="573.60" x2="859.80" y2="705.80" stroke="#1fb070" stroke-width="0.8" />
<text transform="translate(858.80,639.70) rotate(-90) scale(1.45,1)" font-size="3.8" fill="#25c07c" font-weight="bold" text-anchor="middle">Ø125</text>
<line x1="825.00" y1="568.00" x2="871.80" y2="568.00" stroke="#1fb070" stroke-width="0.8" />
<line x1="825.00" y1="711.40" x2="871.80" y2="711.40" stroke="#1fb070" stroke-width="0.8" />
<line x1="870.80" y1="568.00" x2="870.80" y2="711.40" stroke="#1fb070" stroke-width="0.8" />
<text transform="translate(869.80,639.70) rotate(-90) scale(1.45,1)" font-size="3.8" fill="#25c07c" font-weight="bold" text-anchor="middle">Ø135-0.072</text>
<rect x="835.60" y="544.20" width="19.00" height="8.40" fill="none" stroke="#1fb070" stroke-width="0.9" />
<text transform="translate(845.10,551.09) scale(1,1.45)" font-size="3.2" fill="#2bd08a" text-anchor="middle" font-weight="bold" textLength="16.6" lengthAdjust="spacingAndGlyphs">∕ 0.03 A</text>
<path d="M835.6 548.4H830.6V568.0" fill="none" stroke="#1fb070" stroke-width="0.8" />
<path d="M836.00 562.00L838.00 566.50L841.20 558.50" fill="none" stroke="#1fb070" stroke-width="0.8" />
<path d="M859.50 558.50L861.50 563.00L864.70 555.00" fill="none" stroke="#1fb070" stroke-width="0.8" />
<text transform="translate(834.60,562.00) scale(1,1.45)" font-size="2.8" fill="#1fb070" text-anchor="start" >3.2</text>
<text transform="translate(858.00,558.00) scale(1,1.45)" font-size="2.8" fill="#1fb070" text-anchor="start" >1.6</text>
<ellipse cx="862.00" cy="563.50" rx="1.60" ry="2.30" fill="none" stroke="#1fb070" stroke-width="0.7" />
<line x1="826.00" y1="568.00" x2="871.00" y2="568.00" stroke="#1fb070" stroke-width="0.8" />
<path d="M758.70 616.95L760.50 621.00L763.38 613.80" fill="none" stroke="#1fb070" stroke-width="0.8" />
<text transform="translate(761.60,620.50) scale(1,1.45)" font-size="2.8" fill="#1fb070" text-anchor="start" >1.6</text>
<path d="M825.6 666L832.6 653" fill="none" stroke="#1fb070" stroke-width="0.7" />
<text transform="translate(829.00,656.00) scale(1,1.45)" font-size="2.6" fill="#1fb070" text-anchor="start" >1.6</text>
<path d="M830 669.6h2.6v-1.2l1.6 1.8-1.6 1.8v-1.2h-2.600z" fill="#ffffff" stroke="#ffffff" stroke-width="0.3" />
<text transform="translate(831.00,678.00) scale(1,1.45)" font-size="3" fill="#1fb070" text-anchor="middle" >A</text>
<line x1="685.60" y1="718.00" x2="685.60" y2="746.50" stroke="#1fb070" stroke-width="0.8" />
<line x1="712.30" y1="718.00" x2="712.30" y2="737.00" stroke="#1fb070" stroke-width="0.8" />
<line x1="797.60" y1="712.00" x2="797.60" y2="724.50" stroke="#1fb070" stroke-width="0.8" />
<line x1="825.00" y1="712.00" x2="825.00" y2="746.50" stroke="#1fb070" stroke-width="0.8" />
<line x1="685.60" y1="735.60" x2="712.30" y2="735.60" stroke="#1fb070" stroke-width="0.8" />
<text transform="translate(698.95,734.80) scale(1,1.45)" font-size="4.2" fill="#25c07c" text-anchor="middle" font-weight="bold">36</text>
<line x1="797.60" y1="723.20" x2="825.00" y2="723.20" stroke="#1fb070" stroke-width="0.8" />
<text transform="translate(811.30,722.40) scale(1,1.45)" font-size="4.2" fill="#25c07c" text-anchor="middle" font-weight="bold">36</text>
<line x1="685.60" y1="745.00" x2="825.00" y2="745.00" stroke="#1fb070" stroke-width="0.8" />
<text transform="translate(755.30,744.20) scale(1,1.45)" font-size="4.2" fill="#25c07c" text-anchor="middle" font-weight="bold">190</text>
<rect x="841.20" y="729.60" width="19.20" height="8.60" fill="none" stroke="#1fb070" stroke-width="0.9" />
<text transform="translate(850.80,736.65) scale(1,1.45)" font-size="3.2" fill="#2bd08a" text-anchor="middle" font-weight="bold" textLength="16.8" lengthAdjust="spacingAndGlyphs">⊥ 0.03 A</text>
<line x1="825.00" y1="733.90" x2="841.20" y2="733.90" stroke="#1fb070" stroke-width="0.8" />
<ellipse cx="949.00" cy="639.70" rx="54.30" ry="78.40" fill="none" stroke="#ffffff" stroke-width="2.2" />
<ellipse cx="949.00" cy="639.70" rx="50.00" ry="72.10" fill="none" stroke="#ffffff" stroke-width="2.0" />
<ellipse cx="949.00" cy="639.70" rx="41.60" ry="60.60" fill="none" stroke="#ffffff" stroke-width="2.0" />
<ellipse cx="949.00" cy="639.70" rx="28.00" ry="40.10" fill="none" stroke="#ffffff" stroke-width="2.0" />
<ellipse cx="949.00" cy="639.70" rx="20.50" ry="29.90" fill="none" stroke="#ffffff" stroke-width="2.0" />
<ellipse cx="949.00" cy="639.70" rx="46.60" ry="67.00" fill="none" stroke="#a3222b" stroke-width="0.9" stroke-dasharray="22 3 4 3"/>
<rect x="908.60" y="461.60" width="61.80" height="43.80" fill="none" stroke="#ffffff" stroke-width="1.8" />
<line x1="908.60" y1="468.90" x2="959.60" y2="468.90" stroke="#e6e6e6" stroke-width="0.9" />
<line x1="908.60" y1="476.20" x2="959.60" y2="476.20" stroke="#e6e6e6" stroke-width="0.9" />
<line x1="908.60" y1="483.50" x2="959.60" y2="483.50" stroke="#e6e6e6" stroke-width="0.9" />
<line x1="908.60" y1="490.80" x2="959.60" y2="490.80" stroke="#e6e6e6" stroke-width="0.9" />
<line x1="908.60" y1="498.10" x2="970.40" y2="498.10" stroke="#e6e6e6" stroke-width="0.9" />
<line x1="930.80" y1="461.60" x2="930.80" y2="505.40" stroke="#e6e6e6" stroke-width="0.9" />
<line x1="945.20" y1="461.60" x2="945.20" y2="498.10" stroke="#e6e6e6" stroke-width="0.9" />
<line x1="959.60" y1="461.60" x2="959.60" y2="505.40" stroke="#ffffff" stroke-width="1.0" />
<text transform="translate(919.70,467.20) scale(1,1.45)" font-size="3.3" fill="#ffffff" text-anchor="middle" font-weight="bold">模 数</text>
<text transform="translate(938.00,467.20) scale(1,1.45)" font-size="3.1" fill="#ffffff" text-anchor="middle" >m</text>
<text transform="translate(950.40,467.20) scale(1,1.45)" font-size="3.1" fill="#ffffff" text-anchor="middle" >5</text>
<text transform="translate(919.70,474.50) scale(1,1.45)" font-size="3.3" fill="#ffffff" text-anchor="middle" font-weight="bold">齿 数</text>
<text transform="translate(938.00,474.50) scale(1,1.45)" font-size="3.1" fill="#ffffff" text-anchor="middle" >Z18</text>
<text transform="translate(950.40,474.50) scale(1,1.45)" font-size="3.1" fill="#ffffff" text-anchor="middle" >25</text>
<text transform="translate(919.70,481.80) scale(1,1.45)" font-size="3.3" fill="#ffffff" text-anchor="middle" font-weight="bold">齿形角</text>
<text transform="translate(938.00,481.80) scale(1,1.45)" font-size="3.1" fill="#ffffff" text-anchor="middle" >α</text>
<text transform="translate(950.40,481.80) scale(1,1.45)" font-size="3.1" fill="#ffffff" text-anchor="middle" >20°</text>
<text transform="translate(919.70,489.10) scale(1,1.45)" font-size="3.3" fill="#ffffff" text-anchor="middle" font-weight="bold">精度等级</text>
<text transform="translate(938.00,489.10) scale(1,1.45)" font-size="3.1" fill="#ffffff" text-anchor="middle" >8</text>
<text transform="translate(950.40,489.10) scale(1,1.45)" font-size="3.1" fill="#ffffff" text-anchor="middle" >7FH</text>
<text transform="translate(919.70,496.40) scale(1,1.45)" font-size="3.3" fill="#ffffff" text-anchor="middle" font-weight="bold">公法线长度</text>
<text transform="translate(938.00,496.40) scale(1,1.45)" font-size="3.1" fill="#ffffff" text-anchor="middle" >k</text>
<text transform="translate(950.40,496.40) scale(1,1.45)" font-size="3.1" fill="#ffffff" text-anchor="middle" >3</text>
<text transform="translate(919.70,503.70) scale(1,1.45)" font-size="3.3" fill="#ffffff" text-anchor="middle" font-weight="bold">配对齿轮</text>
<text transform="translate(938.00,503.70) scale(1,1.45)" font-size="3.1" fill="#ffffff" text-anchor="middle" >Wk=38.31-0.11</text>
<text transform="translate(965.00,479.00) scale(1,1.45)" font-size="3.2" fill="#ffffff" text-anchor="middle" font-weight="bold">齿</text>
<text transform="translate(965.00,489.50) scale(1,1.45)" font-size="3.2" fill="#ffffff" text-anchor="middle" >19</text>
<rect x="970.60" y="461.60" width="62.80" height="58.40" fill="none" stroke="#ffffff" stroke-width="1.8" />
<line x1="970.60" y1="468.90" x2="1022.60" y2="468.90" stroke="#e6e6e6" stroke-width="0.9" />
<line x1="970.60" y1="476.20" x2="1022.60" y2="476.20" stroke="#e6e6e6" stroke-width="0.9" />
<line x1="970.60" y1="483.50" x2="1022.60" y2="483.50" stroke="#e6e6e6" stroke-width="0.9" />
<line x1="970.60" y1="490.80" x2="1022.60" y2="490.80" stroke="#e6e6e6" stroke-width="0.9" />
<line x1="970.60" y1="498.10" x2="1022.60" y2="498.10" stroke="#e6e6e6" stroke-width="0.9" />
<line x1="970.60" y1="505.40" x2="1022.60" y2="505.40" stroke="#e6e6e6" stroke-width="0.9" />
<line x1="970.60" y1="512.70" x2="1033.40" y2="512.70" stroke="#e6e6e6" stroke-width="0.9" />
<line x1="992.60" y1="461.60" x2="992.60" y2="520.00" stroke="#e6e6e6" stroke-width="0.9" />
<line x1="1007.40" y1="461.60" x2="1007.40" y2="512.70" stroke="#e6e6e6" stroke-width="0.9" />
<line x1="1022.60" y1="461.60" x2="1022.60" y2="520.00" stroke="#ffffff" stroke-width="1.0" />
<text transform="translate(981.60,467.20) scale(1,1.45)" font-size="3.3" fill="#ffffff" text-anchor="middle" font-weight="bold">模 数</text>
<text transform="translate(1000.00,467.20) scale(1,1.45)" font-size="3.1" fill="#ffffff" text-anchor="middle" >m</text>
<text transform="translate(1013.00,467.20) scale(1,1.45)" font-size="3.1" fill="#ffffff" text-anchor="middle" >5</text>
<text transform="translate(981.60,474.50) scale(1,1.45)" font-size="3.3" fill="#ffffff" text-anchor="middle" font-weight="bold">齿 数</text>
<text transform="translate(1000.00,474.50) scale(1,1.45)" font-size="3.1" fill="#ffffff" text-anchor="middle" >Z17</text>
<text transform="translate(1013.00,474.50) scale(1,1.45)" font-size="3.1" fill="#ffffff" text-anchor="middle" >25</text>
<text transform="translate(981.60,481.80) scale(1,1.45)" font-size="3.3" fill="#ffffff" text-anchor="middle" font-weight="bold">齿形角</text>
<text transform="translate(1000.00,481.80) scale(1,1.45)" font-size="3.1" fill="#ffffff" text-anchor="middle" >α</text>
<text transform="translate(1013.00,481.80) scale(1,1.45)" font-size="3.1" fill="#ffffff" text-anchor="middle" >20°</text>
<text transform="translate(981.60,489.10) scale(1,1.45)" font-size="3.3" fill="#ffffff" text-anchor="middle" font-weight="bold">变位系数</text>
<text transform="translate(1000.00,489.10) scale(1,1.45)" font-size="3.1" fill="#ffffff" text-anchor="middle" >x</text>
<text transform="translate(1013.00,489.10) scale(1,1.45)" font-size="3.1" fill="#ffffff" text-anchor="middle" >0</text>
<text transform="translate(981.60,496.40) scale(1,1.45)" font-size="3.3" fill="#ffffff" text-anchor="middle" font-weight="bold">精度等级</text>
<text transform="translate(1013.00,496.40) scale(1,1.45)" font-size="3.1" fill="#ffffff" text-anchor="middle" >7FH</text>
<text transform="translate(981.60,503.70) scale(1,1.45)" font-size="3.3" fill="#ffffff" text-anchor="middle" font-weight="bold">公法线</text>
<text transform="translate(1000.00,503.70) scale(1,1.45)" font-size="3.1" fill="#ffffff" text-anchor="middle" >k</text>
<text transform="translate(1013.00,503.70) scale(1,1.45)" font-size="3.1" fill="#ffffff" text-anchor="middle" >3</text>
<text transform="translate(981.60,511.00) scale(1,1.45)" font-size="3.3" fill="#ffffff" text-anchor="middle" font-weight="bold">公法线长度</text>
<text transform="translate(1000.00,511.00) scale(1,1.45)" font-size="3.1" fill="#ffffff" text-anchor="middle" >Wk</text>
<text transform="translate(1013.00,511.00) scale(1,1.45)" font-size="3.1" fill="#ffffff" text-anchor="middle" >38</text>
<text transform="translate(981.60,518.30) scale(1,1.45)" font-size="3.3" fill="#ffffff" text-anchor="middle" font-weight="bold">配对齿轮</text>
<text transform="translate(1000.00,518.30) scale(1,1.45)" font-size="3.1" fill="#ffffff" text-anchor="middle" >Wk=38.31-0.11</text>
<text transform="translate(1028.00,484.00) scale(1,1.45)" font-size="3.2" fill="#ffffff" text-anchor="middle" font-weight="bold">齿</text>
<text transform="translate(1028.00,495.50) scale(1,1.45)" font-size="3.2" fill="#ffffff" text-anchor="middle" >17</text>
<text transform="translate(752.00,803.50) scale(1,1.45)" font-size="4" fill="#ffffff" text-anchor="middle" font-weight="bold">技术要求</text>
<text transform="translate(738.00,811.80) scale(1,1.45)" font-size="3.7" fill="#ffffff" text-anchor="start" >1. 调质处理, 齿面硬度为 210~250HBs</text>
<text transform="translate(738.00,820.80) scale(1,1.45)" font-size="3.7" fill="#ffffff" text-anchor="start" >2. 未注圆角半径 R=2</text>
<text transform="translate(738.00,829.80) scale(1,1.45)" font-size="3.7" fill="#ffffff" text-anchor="start" >3. 清除毛刺。</text>
<rect x="901.00" y="834.00" width="132.40" height="47.00" fill="none" stroke="#ffffff" stroke-width="2" />
<line x1="945.40" y1="834.00" x2="945.40" y2="881.00" stroke="#ffffff" stroke-width="1.8" />
<line x1="989.40" y1="834.00" x2="989.40" y2="881.00" stroke="#ffffff" stroke-width="1.8" />
<line x1="901.00" y1="862.60" x2="989.40" y2="862.60" stroke="#ffffff" stroke-width="1.8" />
<line x1="989.40" y1="848.60" x2="1033.40" y2="848.60" stroke="#ffffff" stroke-width="1.8" />
<line x1="989.40" y1="869.60" x2="1033.40" y2="869.60" stroke="#ffffff" stroke-width="1.8" />
<line x1="901.00" y1="838.75" x2="945.40" y2="838.75" stroke="#cfcfcf" stroke-width="0.8" />
<line x1="901.00" y1="843.50" x2="945.40" y2="843.50" stroke="#cfcfcf" stroke-width="0.8" />
<line x1="901.00" y1="848.25" x2="945.40" y2="848.25" stroke="#cfcfcf" stroke-width="0.8" />
<line x1="901.00" y1="853.00" x2="945.40" y2="853.00" stroke="#cfcfcf" stroke-width="0.8" />
<line x1="901.00" y1="857.75" x2="945.40" y2="857.75" stroke="#cfcfcf" stroke-width="0.8" />
<line x1="901.00" y1="867.20" x2="945.40" y2="867.20" stroke="#cfcfcf" stroke-width="0.8" />
<line x1="901.00" y1="871.80" x2="945.40" y2="871.80" stroke="#cfcfcf" stroke-width="0.8" />
<line x1="901.00" y1="876.40" x2="945.40" y2="876.40" stroke="#cfcfcf" stroke-width="0.8" />
<line x1="908.60" y1="834.00" x2="908.60" y2="881.00" stroke="#cfcfcf" stroke-width="0.8" />
<line x1="915.60" y1="834.00" x2="915.60" y2="881.00" stroke="#cfcfcf" stroke-width="0.8" />
<line x1="927.60" y1="834.00" x2="927.60" y2="881.00" stroke="#cfcfcf" stroke-width="0.8" />
<line x1="935.60" y1="834.00" x2="935.60" y2="881.00" stroke="#cfcfcf" stroke-width="0.8" />
<line x1="940.60" y1="834.00" x2="940.60" y2="881.00" stroke="#cfcfcf" stroke-width="0.8" />
<text transform="translate(902.50,861.60) scale(1,1.45)" font-size="2.5" fill="#ffffff" text-anchor="start" font-weight="bold">标记处数 分区 更改文件号 签名 年月日</text>
<text transform="translate(902.50,867.00) scale(1,1.45)" font-size="2.5" fill="#ffffff" text-anchor="start" font-weight="bold">设 计 标准化</text>
<text transform="translate(902.50,871.60) scale(1,1.45)" font-size="2.5" fill="#ffffff" text-anchor="start" font-weight="bold">审 核 批 准</text>
<text transform="translate(902.50,876.40) scale(1,1.45)" font-size="2.5" fill="#ffffff" text-anchor="start" font-weight="bold">工 艺</text>
<text transform="translate(928.00,880.00) scale(1,1.45)" font-size="2.4" fill="#ffffff" text-anchor="start" font-weight="bold">日 期</text>
<text transform="translate(967.40,853.00) scale(1,1.45)" font-size="5" fill="#ffffff" text-anchor="middle" >联体齿轮17-19</text>
<text transform="translate(960.00,874.60) scale(1,1.45)" font-size="4.2" fill="#ffffff" text-anchor="middle" >20CrMnTi</text>
<text transform="translate(1011.40,844.60) scale(1,1.45)" font-size="3.7" fill="#ffffff" text-anchor="middle" >THDDH-17-00-47</text>
<line x1="989.40" y1="853.85" x2="1033.40" y2="853.85" stroke="#ffffff" stroke-width="0.9" />
<line x1="989.40" y1="859.10" x2="1033.40" y2="859.10" stroke="#ffffff" stroke-width="0.9" />
<line x1="989.40" y1="864.35" x2="1033.40" y2="864.35" stroke="#ffffff" stroke-width="0.9" />
<line x1="1010.60" y1="848.60" x2="1010.60" y2="869.60" stroke="#ffffff" stroke-width="1.4" />
<line x1="995.00" y1="848.60" x2="995.00" y2="853.80" stroke="#ffffff" stroke-width="0.8" />
<line x1="1000.00" y1="848.60" x2="1000.00" y2="853.80" stroke="#ffffff" stroke-width="0.8" />
<line x1="1005.00" y1="848.60" x2="1005.00" y2="853.80" stroke="#ffffff" stroke-width="0.8" />
<line x1="1016.00" y1="848.60" x2="1016.00" y2="853.80" stroke="#ffffff" stroke-width="0.8" />
<line x1="1021.50" y1="848.60" x2="1021.50" y2="853.80" stroke="#ffffff" stroke-width="0.8" />
<line x1="1027.00" y1="848.60" x2="1027.00" y2="853.80" stroke="#ffffff" stroke-width="0.8" />
<text transform="translate(990.60,853.20) scale(1,1.45)" font-size="2.5" fill="#ffffff" text-anchor="start" font-weight="bold">阶 段 标 记 重量 比例</text>
<text transform="translate(1024.00,863.00) scale(1,1.45)" font-size="2.8" fill="#ffffff" text-anchor="start" >1:1</text>
<text transform="translate(990.60,868.80) scale(1,1.45)" font-size="2.5" fill="#ffffff" text-anchor="start" font-weight="bold">共 张 第 张</text>
<text transform="translate(1011.40,878.00) scale(1,1.45)" font-size="4" fill="#ffffff" text-anchor="middle" font-weight="bold">河南科技大学车辆022班</text></svg>
<div class="ln" style="top:0;height:1.6px;background:#858585"></div>
<div class="ln" style="top:895px;height:2px;background:#9b9b9b"></div>
</body></html>
